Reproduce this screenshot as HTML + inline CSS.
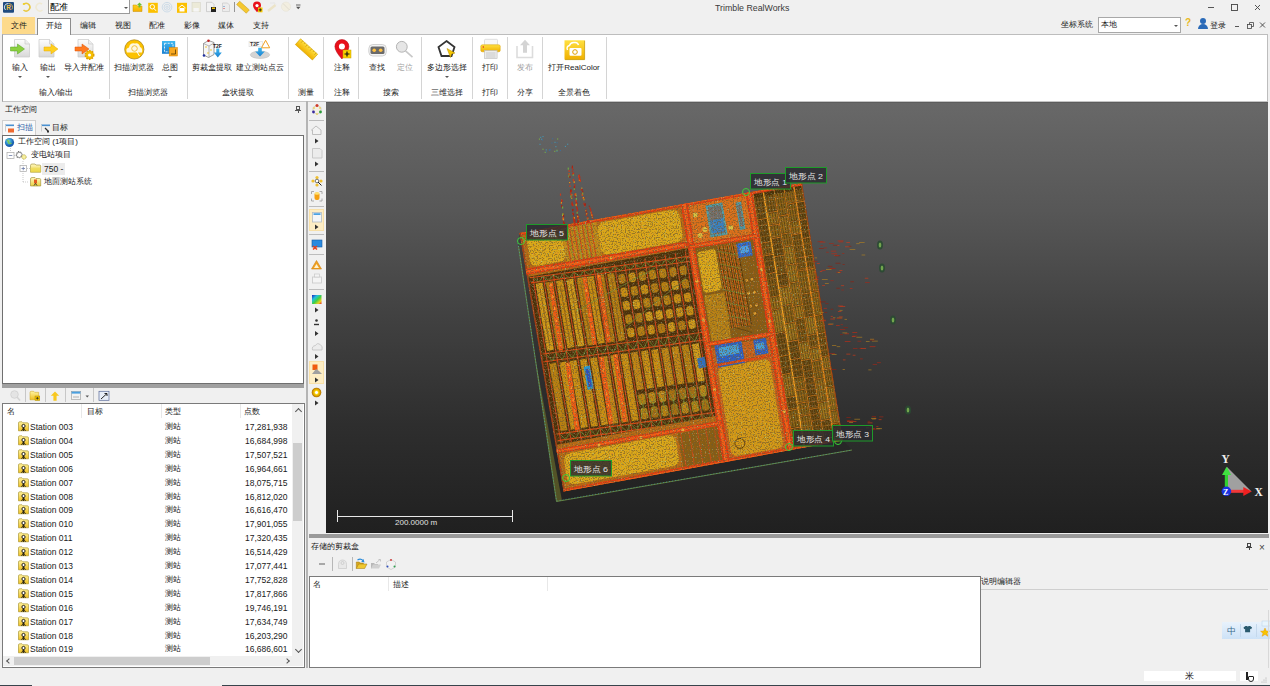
<!DOCTYPE html>
<html><head><meta charset="utf-8">
<style>
*{margin:0;padding:0;box-sizing:border-box}
html,body{width:1270px;height:686px;overflow:hidden;background:#f0f0f0;font-family:"Liberation Sans",sans-serif;font-size:8px;color:#1a1a1a;position:relative}
.a{position:absolute}
.t{position:absolute;white-space:nowrap;line-height:10px}
.c{transform:translateX(-50%)}
.sep{position:absolute;width:1px;background:#d4d4d4}
.vsep{position:absolute;left:310px;width:13px;height:1px;background:#bdbdbd}
.arr{position:absolute;width:0;height:0;border-left:3px solid #444;border-top:2px solid transparent;border-bottom:2px solid transparent}
.dd{position:absolute;width:0;height:0;border-top:2px solid #555;border-left:2px solid transparent;border-right:2px solid transparent}
.row{position:absolute;left:0;height:14px;width:290px}
.row span{position:absolute;top:2px;white-space:nowrap;line-height:10px;font-size:8.5px}
.fold{position:absolute;left:18px;top:2px;width:10px;height:9px;background:#f2e27a;border:1px solid #9a8a2a;border-radius:1px}
.fold:after{content:"";position:absolute;left:3px;top:1px;width:3px;height:5px;border:1px solid #222;border-top-width:2px}
#vp{left:326px;top:102px;width:942px;height:431px;background:linear-gradient(#686868,#575757 25%,#414141 50%,#2e2e2e 75%,#202020);border-top:1px solid #5c5c5c;border-bottom:1px solid #1a1a1a}
.lbl{position:absolute;background:#2f2f35;border:1px solid #1f9a2a;color:#e8e8e8;font-size:8px;line-height:14px;height:16px;padding:0 3px;white-space:nowrap}
</style></head><body>
<!-- ===== title bar ===== -->
<div class="a" style="left:48px;top:0px;width:82px;height:14px;background:#fff;border:1px solid #9a9a9a;border-top:none"></div>
<div class="t" style="left:50px;top:2px;font-size:8.5px;color:#000">配准</div>
<div class="dd" style="left:124px;top:7px"></div>
<svg class="a" style="left:0;top:0" width="310" height="16" viewBox="0 0 310 16">
<defs><linearGradient id="qy" x1="0" y1="0" x2="0" y2="1"><stop offset="0" stop-color="#ffd020"/><stop offset="1" stop-color="#f5b000"/></linearGradient></defs>
<rect x="3" y="2" width="11" height="10.7" rx="1" fill="#1e4a80"/>
<path d="M5.5,10 a3.8,3.8 0 0 1 3,-6.5" fill="none" stroke="#fff" stroke-width="0.8"/><path d="M9,3.5 a3.8,3.8 0 0 1 2.8,6" fill="none" stroke="#f0c040" stroke-width="0.8"/>
<text x="6.3" y="10.3" font-size="6.5" font-weight="bold" fill="#f0c040" font-family="Liberation Sans">R</text>
<path d="M24,4 a3.8,3.8 0 1 1 -0.5,6" fill="none" stroke="#e8c840" stroke-width="1.6"/><circle cx="23.8" cy="4" r="1.1" fill="#f0d020"/>
<path d="M42,4 a3.8,3.8 0 1 0 0.5,6" fill="none" stroke="#efe9d2" stroke-width="1.6"/>
<path d="M133,5 h3.5 l1,1 h4.5 v5.5 h-9 z" fill="url(#qy)" stroke="#c89000" stroke-width="0.5"/>
<path d="M139.5,2.5 l2.5,2.5 h-1.5 v2.5 h-2 v-2.5 h-1.5 z" fill="#6cc030"/>
<rect x="148.2" y="2.8" width="9.6" height="10" fill="#fcc000"/><circle cx="152.3" cy="6.8" r="2.2" fill="none" stroke="#fff" stroke-width="1"/><line x1="154" y1="8.5" x2="156" y2="10.8" stroke="#fff" stroke-width="1"/>
<circle cx="167" cy="7.2" r="4.8" fill="none" stroke="#c4d6e4" stroke-width="0.8"/><circle cx="167" cy="7.2" r="3" fill="none" stroke="#c4d6e4" stroke-width="0.8"/><circle cx="167" cy="7.2" r="1.2" fill="none" stroke="#c4d6e4" stroke-width="0.8"/>
<rect x="177" y="2.8" width="10" height="10" fill="#fcc000"/><path d="M178.5,8 l3.5,-3 l3.5,3" fill="none" stroke="#fff" stroke-width="1"/><rect x="179.5" y="8" width="5" height="3.5" fill="#fff"/>
<rect x="192" y="2.3" width="8.3" height="9.4" fill="#ecead8" stroke="#d8d6c8" stroke-width="0.6"/><rect x="193.5" y="8" width="5.3" height="3.6" fill="#f6f6f6"/>
<path d="M206.5,2.3 h5.5 l2,2 v7.3 h-7.5 z" fill="#f2f2f2" stroke="#b8b8b8" stroke-width="0.6"/><rect x="211" y="7" width="5" height="5" fill="#222"/><rect x="212" y="7.5" width="3" height="1.5" fill="#f0c000"/>
<path d="M222.5,3 h5 l2,2 v6.5 h-7 z" fill="#ececec" stroke="#c4c4c4" stroke-width="0.6"/><rect x="223.5" y="6" width="1" height="1" fill="#4a80c0"/><rect x="223.5" y="8" width="1" height="1" fill="#d04040"/>
<line x1="234.5" y1="2" x2="234.5" y2="12" stroke="#8a8a8a" stroke-width="0.9"/>
<g transform="rotate(42 243 7.2)"><rect x="236.5" y="5" width="13" height="4.5" fill="#f5c830" stroke="#c89a10" stroke-width="0.5"/></g>
<path d="M257,12.3 q-4,-4.5 -4,-6.8 a4,4 0 0 1 8,0 q0,2.3 -4,6.8 z" fill="#e8101a"/><circle cx="257" cy="5.6" r="1.6" fill="#fff"/><rect x="258" y="7.5" width="4.5" height="4.8" fill="#f5c800"/><path d="M260.2,8.3 v3.2 M258.6,9.9 h3.2" stroke="#111" stroke-width="0.8"/>
<path d="M268,11 l7.5,-6" stroke="#ece4c8" stroke-width="2.4"/><path d="M270,3 h5 M274,2.5 l2,2" stroke="#e0e0e0" stroke-width="0.6"/>
<circle cx="286" cy="6.7" r="4.6" fill="#f2eee0" stroke="#e6e2d6" stroke-width="0.6"/><line x1="283" y1="3.5" x2="289.5" y2="10" stroke="#d8d4c8" stroke-width="0.7"/>
<path d="M296,5 h4.5" stroke="#555" stroke-width="0.9"/><polygon points="296,6.8 300.5,6.8 298.25,9.3" fill="#555"/>
</svg>
<div class="t" style="left:715px;top:2.5px;font-size:8.8px;color:#3a3a3a">Trimble RealWorks</div>
<svg class="a" style="left:1200px;top:0" width="70" height="34" viewBox="1200 0 70 34">
<path d="M1208,7.5 h6" stroke="#444" stroke-width="0.9"/>
<rect x="1231.5" y="4.5" width="6" height="6" fill="none" stroke="#444" stroke-width="0.9"/>
<path d="M1255,5 l5,5 M1260,5 l-5,5" stroke="#444" stroke-width="0.9"/>
<path d="M1235,26.5 h4" stroke="#444" stroke-width="0.9"/>
<rect x="1247.5" y="24.5" width="4" height="4" fill="#f0f0f0" stroke="#444" stroke-width="0.8"/><path d="M1249.5,24.5 v-2 h4 v4 h-2" fill="none" stroke="#444" stroke-width="0.8"/>
<path d="M1260,22.5 l5,5 M1265,22.5 l-5,5" stroke="#444" stroke-width="0.9"/>
</svg>
<!-- ===== tabs ===== -->
<div class="a" style="left:2px;top:17px;width:33px;height:17px;background:#fdda8b"></div>
<div class="t c" style="left:19px;top:21px">文件</div>
<div class="t c" style="left:88px;top:21px">编辑</div>
<div class="t c" style="left:123px;top:21px">视图</div>
<div class="t c" style="left:157px;top:21px">配准</div>
<div class="t c" style="left:192px;top:21px">影像</div>
<div class="t c" style="left:226px;top:21px">媒体</div>
<div class="t c" style="left:261px;top:21px">支持</div>
<div class="t" style="left:1061px;top:20px">坐标系统</div>
<div class="a" style="left:1098px;top:17px;width:83px;height:16px;background:#fff;border:1px solid #a8a8a8"></div>
<div class="t" style="left:1101px;top:20px">本地</div>
<div class="dd" style="left:1174px;top:25px"></div>
<div class="t" style="left:1185px;top:18px;font-size:10px;font-weight:bold;color:#e8b820">?</div>
<div class="a" style="left:1200px;top:18px;width:6px;height:6px;background:#2a6ab8;border-radius:50%"></div>
<div class="a" style="left:1198px;top:24px;width:10px;height:5px;background:#2a6ab8;border-radius:5px 5px 0 0"></div>
<div class="t" style="left:1210px;top:21px">登录</div>

<!-- ===== ribbon body ===== -->
<div class="a" style="left:2px;top:34px;width:1266px;height:68px;background:#fff;border:1px solid #bdbdbd;border-left-color:#a0a0a0;border-bottom-color:#c4c4c4"></div>
<div class="a" style="left:37px;top:18px;width:34px;height:17px;background:#fff;border:1px solid #8c8c8c;border-bottom:none"></div>
<div class="t c" style="left:54px;top:21px">开始</div>
<div class="sep" style="left:109px;top:37px;height:62px"></div>
<div class="sep" style="left:187px;top:37px;height:62px"></div>
<div class="sep" style="left:288px;top:37px;height:62px"></div>
<div class="sep" style="left:323px;top:37px;height:62px"></div>
<div class="sep" style="left:358px;top:37px;height:62px"></div>
<div class="sep" style="left:421px;top:37px;height:62px"></div>
<div class="sep" style="left:472px;top:37px;height:62px"></div>
<div class="sep" style="left:507px;top:37px;height:62px"></div>
<div class="sep" style="left:542px;top:37px;height:62px"></div>
<div class="sep" style="left:606px;top:37px;height:62px"></div>
<!-- button labels -->
<div class="t c" style="left:20px;top:63px">输入</div>
<div class="t c" style="left:48px;top:63px">输出</div>
<div class="t c" style="left:84px;top:63px">导入并配准</div>
<div class="t c" style="left:134px;top:63px">扫描浏览器</div>
<div class="t c" style="left:170px;top:63px">总图</div>
<div class="t c" style="left:212px;top:63px">剪裁盒提取</div>
<div class="t c" style="left:260px;top:63px">建立测站点云</div>
<div class="t c" style="left:342px;top:63px">注释</div>
<div class="t c" style="left:377px;top:63px">查找</div>
<div class="t c" style="left:405px;top:63px;color:#a0a0a0">定位</div>
<div class="t c" style="left:447px;top:63px">多边形选择</div>
<div class="t c" style="left:490px;top:63px">打印</div>
<div class="t c" style="left:525px;top:63px;color:#a0a0a0">发布</div>
<div class="t c" style="left:574px;top:63px">打开RealColor</div>
<div class="dd" style="left:18px;top:76px"></div>
<div class="dd" style="left:46px;top:76px"></div>
<div class="dd" style="left:168px;top:76px"></div>
<div class="dd" style="left:445px;top:76px"></div>
<!-- group labels -->
<div class="t c" style="left:56px;top:88px">输入/输出</div>
<div class="t c" style="left:148px;top:88px">扫描浏览器</div>
<div class="t c" style="left:238px;top:88px">盒状提取</div>
<div class="t c" style="left:306px;top:88px">测量</div>
<div class="t c" style="left:342px;top:88px">注释</div>
<div class="t c" style="left:391px;top:88px">搜索</div>
<div class="t c" style="left:447px;top:88px">三维选择</div>
<div class="t c" style="left:490px;top:88px">打印</div>
<div class="t c" style="left:525px;top:88px">分享</div>
<div class="t c" style="left:574px;top:88px">全景着色</div>
<svg class="a" style="left:0;top:34px" width="610" height="28" viewBox="0 34 610 28">
<defs><linearGradient id="pg" x1="0" y1="0" x2="0" y2="1"><stop offset="0" stop-color="#fdfdfd"/><stop offset="1" stop-color="#d8d8d8"/></linearGradient><linearGradient id="yl" x1="0" y1="0" x2="0" y2="1"><stop offset="0" stop-color="#ffe040"/><stop offset="1" stop-color="#f0b000"/></linearGradient><linearGradient id="bl" x1="0" y1="0" x2="0" y2="1"><stop offset="0" stop-color="#40b8f0"/><stop offset="1" stop-color="#1a80d0"/></linearGradient></defs>
<path d="M14.5,39.5 h10.5 l4.5,4.5 v13 h-15 z" fill="url(#pg)" stroke="#c8c8c8" stroke-width="0.7"/>
<path d="M25.0,39.5 v4.5 h4.5" fill="#eee" stroke="#c8c8c8" stroke-width="0.7"/>
<path d="M10.5,47 h7 v-3 l7,5 l-7,5 v-3 h-7 z" fill="#8cd040" stroke="#50a020" stroke-width="0.5"/>
<path d="M39,39.5 h10.5 l4.5,4.5 v13 h-15 z" fill="url(#pg)" stroke="#c8c8c8" stroke-width="0.7"/>
<path d="M49.5,39.5 v4.5 h4.5" fill="#eee" stroke="#c8c8c8" stroke-width="0.7"/>
<path d="M44,47 h7 v-3 l7,5 l-7,5 v-3 h-7 z" fill="#ffd020" stroke="#e8a800" stroke-width="0.5"/>
<path d="M78,39.5 h10.5 l4.5,4.5 v13 h-15 z" fill="url(#pg)" stroke="#c8c8c8" stroke-width="0.7"/>
<path d="M88.5,39.5 v4.5 h4.5" fill="#eee" stroke="#c8c8c8" stroke-width="0.7"/>
<path d="M75,47 h7 v-3 l7,5 l-7,5 v-3 h-7 z" fill="#ff7a20" stroke="#e05000" stroke-width="0.5"/>
<circle cx="89.5" cy="55" r="4.2" fill="#f5c000" stroke="#e0a000" stroke-width="1.6" stroke-dasharray="1.6 1.1"/><circle cx="89.5" cy="55" r="1.5" fill="#fff"/>
<circle cx="134.3" cy="49.4" r="9.6" fill="#fcc200" stroke="#b08a20" stroke-width="0.8"/>
<path d="M127,52.5 q-2,-4 2,-5 q1,-5 6,-4 q4,-1 5,3.5 q3,1 2,5.5 z" fill="#fff8e0"/>
<circle cx="134.5" cy="48.5" r="2.8" fill="none" stroke="#f0c040" stroke-width="1"/><line x1="136.5" y1="51" x2="139.5" y2="56" stroke="#fff" stroke-width="1"/>
<rect x="162" y="41" width="13.2" height="12.8" fill="url(#bl)"/><rect x="164.5" y="43.3" width="8.5" height="8.5" fill="none" stroke="#fff" stroke-width="0.8" stroke-dasharray="2 1.2"/>
<rect x="169.2" y="47.5" width="8.2" height="8.5" fill="#f8a820" stroke="#d88000" stroke-width="0.5"/><path d="M171,54 h4.5 v-4.5" fill="none" stroke="#5a3a00" stroke-width="0.8"/>
<path d="M203.5,43.5 l5,-3 l5.5,2 v12 l-5.5,3 l-5,-2.5 z" fill="#f6f6f6" stroke="#777" stroke-width="0.7"/><path d="M203.5,43.5 l5.5,2.5 l5,-3 M209,46 v11.5" fill="none" stroke="#888" stroke-width="0.6"/>
<circle cx="208.5" cy="40.8" r="1.3" fill="#c02020"/><circle cx="204" cy="55.5" r="1.3" fill="#2030a0"/><circle cx="206" cy="47" r="0.8" fill="#f0c020"/><circle cx="211" cy="50" r="0.8" fill="#f0c020"/><circle cx="208" cy="53" r="0.8" fill="#f0c020"/>
<text x="213" y="47.8" font-size="5" font-weight="bold" fill="#222" font-family="Liberation Sans">T2F</text>
<path d="M216.3,48.5 h3 v4 h2.5 l-4,5 l-4,-5 h2.5 z" fill="url(#bl)"/>
<ellipse cx="260" cy="54.8" rx="9.7" ry="3.7" fill="#d4d4d4" stroke="#bbb" stroke-width="0.5"/>
<rect x="249" y="41.2" width="13.5" height="5.6" fill="#fafafa" stroke="#ccc" stroke-width="0.4"/><text x="250" y="46.3" font-size="5.2" font-weight="bold" fill="#333" font-family="Liberation Sans">T2F</text>
<polygon points="265.6,40.3 269.7,47.8 261.5,47.8" fill="#fff" stroke="#f0a020" stroke-width="1"/>
<path d="M258.2,47.8 h3.6 v3.8 h3 l-4.8,5 l-4.8,-5 h3 z" fill="url(#bl)"/>
<g transform="rotate(42 306.5 49.4)"><rect x="295" y="45.5" width="23" height="7.8" fill="url(#yl)" stroke="#d0a000" stroke-width="0.6"/><path d="M298,45.5 v2.5 M301,45.5 v1.5 M304,45.5 v2.5 M307,45.5 v1.5 M310,45.5 v2.5 M313,45.5 v1.5 M316,45.5 v2.5" stroke="#b08000" stroke-width="0.5"/></g>
<path d="M341.9,59 q-7,-8 -7,-12.5 a7,7 0 0 1 14,0 q0,4.5 -7,12.5 z" fill="#e8101a" stroke="#b00010" stroke-width="0.5"/><circle cx="341.9" cy="46.4" r="3" fill="#fff"/>
<rect x="343" y="50" width="8" height="8" fill="#f8d000" stroke="#c8a000" stroke-width="0.5"/><path d="M347,51.5 v5 M344.5,54 h5" stroke="#111" stroke-width="1.2"/>
<rect x="368.8" y="44.5" width="17.5" height="11.5" rx="4" fill="#f4f4f4" stroke="#c8c8c8" stroke-width="0.8"/><rect x="370.5" y="46.5" width="14" height="7.5" rx="1.5" fill="#6a6a6a"/>
<circle cx="374.2" cy="50.2" r="1.8" fill="#ffc040"/><circle cx="380.7" cy="50.2" r="1.8" fill="#ffc040"/>
<line x1="405.5" y1="50.8" x2="412.5" y2="57.2" stroke="#c8c8c8" stroke-width="1.6"/><circle cx="401.8" cy="46.8" r="5.4" fill="#e6e6e6" stroke="#b4b4b4" stroke-width="1"/>
<polygon points="446.5,41 454.5,47 451.5,56 441.5,56 438.5,47" fill="none" stroke="#333" stroke-width="1.8"/>
<polygon points="447,48.5 455,53 451.5,54 450.5,57.5" fill="#f8c800" stroke="#b08a00" stroke-width="0.5"/>
<rect x="484.5" y="39.3" width="13" height="6" rx="1" fill="#f8f8f8" stroke="#ccc" stroke-width="0.6"/>
<rect x="480.8" y="44.8" width="19.4" height="7" rx="1.5" fill="url(#yl)" stroke="#d8a000" stroke-width="0.5"/><circle cx="483.3" cy="47" r="0.7" fill="#e02020"/>
<rect x="484.5" y="50.5" width="12.6" height="8" fill="#ececec" stroke="#bbb" stroke-width="0.6"/><path d="M486,53 h9.5 M486,55 h9.5 M486,57 h9.5" stroke="#aaa" stroke-width="0.5"/>
<path d="M517,46 v11.5 h15.5 v-11.5" fill="none" stroke="#dcdcdc" stroke-width="1.6"/><path d="M525,39.8 l5,5.5 h-3 v7.5 h-4 v-7.5 h-3 z" fill="#d4d4d4"/>
<rect x="564.5" y="40.3" width="20" height="19.3" fill="url(#yl)"/><path d="M565,59.6 h19.6 v-19" fill="none" stroke="#c89a00" stroke-width="0.8"/>
<path d="M567.5,50 q-1.5,-3.5 2,-4.5 q1,-3.5 5,-3 q3,-0.5 4,2.5" fill="none" stroke="#fff" stroke-width="1.4"/><rect x="569.5" y="48" width="12" height="7.8" rx="1" fill="#fff"/><circle cx="575" cy="52" r="2.3" fill="none" stroke="#e0a000" stroke-width="1"/>
</svg>

<!-- ===== left workspace panel ===== -->
<div class="t" style="left:5px;top:105px">工作空间</div>
<div class="a" style="left:296px;top:106px;width:4px;height:4px;border:1px solid #555"></div><div class="a" style="left:295px;top:110px;width:6px;height:1px;background:#555"></div><div class="a" style="left:297.5px;top:110px;width:1px;height:3px;background:#555"></div>
<div class="a" style="left:2px;top:120px;width:34px;height:16px;background:#f9f9f9;border:1px solid #cfcfcf;border-bottom:none"></div>
<div class="t" style="left:17px;top:123px;color:#2a5ea8">扫描</div>
<div class="t" style="left:52px;top:123px">目标</div>
<div class="a" style="left:2px;top:135px;width:302px;height:249px;background:#fff;border:1px solid #6f6f6f"></div>
<div class="a" style="left:42px;top:163px;width:23px;height:12px;background:#ececec"></div>
<div class="t" style="left:18px;top:137px;font-size:8px">工作空间 (1项目)</div>
<div class="t" style="left:31px;top:150px;font-size:8px">变电站项目</div>
<div class="t" style="left:44px;top:164px;font-size:8.5px">750 -</div>
<div class="t" style="left:44px;top:177px;font-size:8px">地面测站系统</div>
<svg class="a" style="left:0;top:118px" width="100" height="72" viewBox="0 118 100 72">
<defs><radialGradient id="gl" cx="0.4" cy="0.35"><stop offset="0" stop-color="#a0e080"/><stop offset="0.5" stop-color="#3aa0d8"/><stop offset="1" stop-color="#1a60b0"/></radialGradient>
<linearGradient id="fd" x1="0" y1="0" x2="0" y2="1"><stop offset="0" stop-color="#fff8c0"/><stop offset="1" stop-color="#e8d040"/></linearGradient></defs>
<rect x="5" y="124.5" width="9" height="1.6" fill="#4a90d0"/><rect x="5" y="124.5" width="1" height="7" fill="#ccc"/><rect x="8" y="128.5" width="6" height="4" fill="#f06a30"/>
<rect x="41" y="124.5" width="9" height="1.6" fill="#4a90d0"/><rect x="41" y="124.5" width="1" height="7" fill="#ccc"/><path d="M45,128 l3,3" stroke="#333" stroke-width="1.2"/><rect x="47" y="130.5" width="2" height="2" fill="#333"/>
<circle cx="9.5" cy="142.5" r="4.6" fill="url(#gl)"/><path d="M7,140 q2,1 1.5,3 q1.5,1 3,0" fill="none" stroke="#7cc850" stroke-width="1.2"/>
<path d="M10.5,148 v4 M10.5,158 v2 M14,155.5 h2 M23,161 v21 M27,168.5 h3 M23,182 h5" stroke="#a8a8a8" stroke-width="0.6" stroke-dasharray="1 1"/>
<rect x="7" y="152.5" width="7" height="6" fill="#fff" stroke="#a8a8a8" stroke-width="0.7"/><path d="M8.8,155.5 h3.5" stroke="#6a7aa8" stroke-width="0.8"/>
<path d="M18.5,151 l1,1.5 l1.5,-0.5 l0,1.5 l1.5,0.8 l-1.2,1 l0.5,1.5 l-1.5,0 l-0.8,1.4 l-1,-1.2 l-1.5,0.5 l0.2,-1.5 l-1.4,-0.8 l1.3,-0.9 l-0.4,-1.5 l1.5,0.2 z" fill="#fff" stroke="#444" stroke-width="0.6"/>
<circle cx="24" cy="157" r="2.2" fill="#f8f0a0" stroke="#a89a30" stroke-width="0.8" stroke-dasharray="1 0.6"/>
<rect x="20" y="165.5" width="6.5" height="6" fill="#fff" stroke="#a8a8a8" stroke-width="0.7"/><path d="M21.5,168.5 h3.5 M23.25,166.8 v3.5" stroke="#6a7aa8" stroke-width="0.8"/>
<path d="M30.5,165.5 q0,-1.5 1.5,-1.5 h3 l1,1 h3.5 q1.2,0 1.2,1.2 v6 h-10.2 z" fill="url(#fd)" stroke="#9a8a30" stroke-width="0.6"/><path d="M30.5,172.2 h10.2 v-4.5 h-10.2 z" fill="#eedc50" opacity="0.6"/>
<path d="M30.5,179 q0,-1.5 1.5,-1.5 h3 l1,1 h3.5 q1.2,0 1.2,1.2 v6.3 h-10.2 z" fill="url(#fd)" stroke="#9a8a30" stroke-width="0.6"/><rect x="34" y="179.5" width="3" height="4" fill="#e05a20"/><path d="M34,185.5 l1.5,-2 l1.5,2" stroke="#222" stroke-width="0.8" fill="none"/>
</svg>
<!-- splitter -->
<div class="a" style="left:2px;top:384px;width:302px;height:4px;background:#a0a0a0"></div>
<!-- toolbar -->
<svg class="a" style="left:0;top:386px" width="120" height="18" viewBox="0 386 120 18">
<defs><linearGradient id="fd2" x1="0" y1="0" x2="0" y2="1"><stop offset="0" stop-color="#fff4a0"/><stop offset="1" stop-color="#f0c020"/></linearGradient></defs>
<line x1="17" y1="397" x2="20" y2="400.5" stroke="#d4d4d4" stroke-width="1.6"/><circle cx="14.5" cy="394.5" r="3.8" fill="#e4e4e4" stroke="#cfcfcf" stroke-width="0.8"/>
<line x1="25.5" y1="388" x2="25.5" y2="402" stroke="#bdbdbd" stroke-width="0.8"/>
<path d="M30,392.5 q0,-1.2 1.2,-1.2 h2.5 l1,1 h4 v7.5 h-8.7 z" fill="url(#fd2)" stroke="#c8a020" stroke-width="0.5"/><rect x="35" y="396" width="4.8" height="4.5" fill="#f0c000" stroke="#a08000" stroke-width="0.4"/><path d="M37.4,397 v2.6 M36.1,398.3 h2.6" stroke="#222" stroke-width="0.7"/>
<line x1="45.5" y1="388" x2="45.5" y2="402" stroke="#bdbdbd" stroke-width="0.8"/>
<path d="M55,391.5 l4.2,4.2 h-2.6 v5 h-3.2 v-5 h-2.6 z" fill="#f8c820"/>
<line x1="65.5" y1="388" x2="65.5" y2="402" stroke="#bdbdbd" stroke-width="0.8"/>
<rect x="71.3" y="391.3" width="9.4" height="8.4" fill="#f2f2f2" stroke="#9a9a9a" stroke-width="0.6"/><rect x="71.6" y="391.6" width="8.8" height="2" fill="#4aa0e0"/><path d="M73,397 h6" stroke="#888" stroke-width="0.6"/>
<polygon points="85.5,395.5 89,395.5 87.25,397.5" fill="#555"/>
<line x1="93.5" y1="388" x2="93.5" y2="402" stroke="#bdbdbd" stroke-width="0.8"/>
<rect x="99" y="391.3" width="10" height="9" fill="#e8eef8" stroke="#5a6a9a" stroke-width="0.7"/><path d="M101,399 l6,-5.5 M104.5,393.5 h2.5 v2.5" fill="none" stroke="#111" stroke-width="0.9"/>
</svg>
<div class="a" style="left:2px;top:403px;width:303px;height:265px;background:#fff;border:1px solid #7a7a7a"></div>
<div class="t" style="left:7px;top:407px">名</div>
<div class="a" style="left:81px;top:404px;width:1px;height:14px;background:#e8e8e8"></div>
<div class="t" style="left:87px;top:407px">目标</div>
<div class="a" style="left:161px;top:404px;width:1px;height:14px;background:#e8e8e8"></div>
<div class="t" style="left:165px;top:407px">类型</div>
<div class="a" style="left:240px;top:404px;width:1px;height:14px;background:#e8e8e8"></div>
<div class="t" style="left:244px;top:407px">点数</div>
<div class="row" style="top:420.0px"><svg style="position:absolute;left:18px;top:1px" width="11" height="11" viewBox="0 0 11 11"><path d="M0.5,2 q0,-1.2 1.2,-1.2 h2.3 l1,1 h4.3 q1.2,0 1.2,1.2 v6.8 h-10 z" fill="url(#fd2)" stroke="#a08a20" stroke-width="0.6"/><circle cx="5.5" cy="5" r="1.6" fill="#fff" stroke="#111" stroke-width="0.9"/><path d="M3.5,10 l2,-3.3 l2,3.3 M5.5,6.7 v3.3" stroke="#111" stroke-width="0.8" fill="none"/></svg><span style="left:30px">Station 003</span><span style="left:165px;font-size:8px">测站</span><span style="left:245px">17,281,938</span></div>
<div class="row" style="top:433.9px"><svg style="position:absolute;left:18px;top:1px" width="11" height="11" viewBox="0 0 11 11"><path d="M0.5,2 q0,-1.2 1.2,-1.2 h2.3 l1,1 h4.3 q1.2,0 1.2,1.2 v6.8 h-10 z" fill="url(#fd2)" stroke="#a08a20" stroke-width="0.6"/><circle cx="5.5" cy="5" r="1.6" fill="#fff" stroke="#111" stroke-width="0.9"/><path d="M3.5,10 l2,-3.3 l2,3.3 M5.5,6.7 v3.3" stroke="#111" stroke-width="0.8" fill="none"/></svg><span style="left:30px">Station 004</span><span style="left:165px;font-size:8px">测站</span><span style="left:245px">16,684,998</span></div>
<div class="row" style="top:447.8px"><svg style="position:absolute;left:18px;top:1px" width="11" height="11" viewBox="0 0 11 11"><path d="M0.5,2 q0,-1.2 1.2,-1.2 h2.3 l1,1 h4.3 q1.2,0 1.2,1.2 v6.8 h-10 z" fill="url(#fd2)" stroke="#a08a20" stroke-width="0.6"/><circle cx="5.5" cy="5" r="1.6" fill="#fff" stroke="#111" stroke-width="0.9"/><path d="M3.5,10 l2,-3.3 l2,3.3 M5.5,6.7 v3.3" stroke="#111" stroke-width="0.8" fill="none"/></svg><span style="left:30px">Station 005</span><span style="left:165px;font-size:8px">测站</span><span style="left:245px">17,507,521</span></div>
<div class="row" style="top:461.7px"><svg style="position:absolute;left:18px;top:1px" width="11" height="11" viewBox="0 0 11 11"><path d="M0.5,2 q0,-1.2 1.2,-1.2 h2.3 l1,1 h4.3 q1.2,0 1.2,1.2 v6.8 h-10 z" fill="url(#fd2)" stroke="#a08a20" stroke-width="0.6"/><circle cx="5.5" cy="5" r="1.6" fill="#fff" stroke="#111" stroke-width="0.9"/><path d="M3.5,10 l2,-3.3 l2,3.3 M5.5,6.7 v3.3" stroke="#111" stroke-width="0.8" fill="none"/></svg><span style="left:30px">Station 006</span><span style="left:165px;font-size:8px">测站</span><span style="left:245px">16,964,661</span></div>
<div class="row" style="top:475.6px"><svg style="position:absolute;left:18px;top:1px" width="11" height="11" viewBox="0 0 11 11"><path d="M0.5,2 q0,-1.2 1.2,-1.2 h2.3 l1,1 h4.3 q1.2,0 1.2,1.2 v6.8 h-10 z" fill="url(#fd2)" stroke="#a08a20" stroke-width="0.6"/><circle cx="5.5" cy="5" r="1.6" fill="#fff" stroke="#111" stroke-width="0.9"/><path d="M3.5,10 l2,-3.3 l2,3.3 M5.5,6.7 v3.3" stroke="#111" stroke-width="0.8" fill="none"/></svg><span style="left:30px">Station 007</span><span style="left:165px;font-size:8px">测站</span><span style="left:245px">18,075,715</span></div>
<div class="row" style="top:489.5px"><svg style="position:absolute;left:18px;top:1px" width="11" height="11" viewBox="0 0 11 11"><path d="M0.5,2 q0,-1.2 1.2,-1.2 h2.3 l1,1 h4.3 q1.2,0 1.2,1.2 v6.8 h-10 z" fill="url(#fd2)" stroke="#a08a20" stroke-width="0.6"/><circle cx="5.5" cy="5" r="1.6" fill="#fff" stroke="#111" stroke-width="0.9"/><path d="M3.5,10 l2,-3.3 l2,3.3 M5.5,6.7 v3.3" stroke="#111" stroke-width="0.8" fill="none"/></svg><span style="left:30px">Station 008</span><span style="left:165px;font-size:8px">测站</span><span style="left:245px">16,812,020</span></div>
<div class="row" style="top:503.4px"><svg style="position:absolute;left:18px;top:1px" width="11" height="11" viewBox="0 0 11 11"><path d="M0.5,2 q0,-1.2 1.2,-1.2 h2.3 l1,1 h4.3 q1.2,0 1.2,1.2 v6.8 h-10 z" fill="url(#fd2)" stroke="#a08a20" stroke-width="0.6"/><circle cx="5.5" cy="5" r="1.6" fill="#fff" stroke="#111" stroke-width="0.9"/><path d="M3.5,10 l2,-3.3 l2,3.3 M5.5,6.7 v3.3" stroke="#111" stroke-width="0.8" fill="none"/></svg><span style="left:30px">Station 009</span><span style="left:165px;font-size:8px">测站</span><span style="left:245px">16,616,470</span></div>
<div class="row" style="top:517.3px"><svg style="position:absolute;left:18px;top:1px" width="11" height="11" viewBox="0 0 11 11"><path d="M0.5,2 q0,-1.2 1.2,-1.2 h2.3 l1,1 h4.3 q1.2,0 1.2,1.2 v6.8 h-10 z" fill="url(#fd2)" stroke="#a08a20" stroke-width="0.6"/><circle cx="5.5" cy="5" r="1.6" fill="#fff" stroke="#111" stroke-width="0.9"/><path d="M3.5,10 l2,-3.3 l2,3.3 M5.5,6.7 v3.3" stroke="#111" stroke-width="0.8" fill="none"/></svg><span style="left:30px">Station 010</span><span style="left:165px;font-size:8px">测站</span><span style="left:245px">17,901,055</span></div>
<div class="row" style="top:531.2px"><svg style="position:absolute;left:18px;top:1px" width="11" height="11" viewBox="0 0 11 11"><path d="M0.5,2 q0,-1.2 1.2,-1.2 h2.3 l1,1 h4.3 q1.2,0 1.2,1.2 v6.8 h-10 z" fill="url(#fd2)" stroke="#a08a20" stroke-width="0.6"/><circle cx="5.5" cy="5" r="1.6" fill="#fff" stroke="#111" stroke-width="0.9"/><path d="M3.5,10 l2,-3.3 l2,3.3 M5.5,6.7 v3.3" stroke="#111" stroke-width="0.8" fill="none"/></svg><span style="left:30px">Station 011</span><span style="left:165px;font-size:8px">测站</span><span style="left:245px">17,320,435</span></div>
<div class="row" style="top:545.1px"><svg style="position:absolute;left:18px;top:1px" width="11" height="11" viewBox="0 0 11 11"><path d="M0.5,2 q0,-1.2 1.2,-1.2 h2.3 l1,1 h4.3 q1.2,0 1.2,1.2 v6.8 h-10 z" fill="url(#fd2)" stroke="#a08a20" stroke-width="0.6"/><circle cx="5.5" cy="5" r="1.6" fill="#fff" stroke="#111" stroke-width="0.9"/><path d="M3.5,10 l2,-3.3 l2,3.3 M5.5,6.7 v3.3" stroke="#111" stroke-width="0.8" fill="none"/></svg><span style="left:30px">Station 012</span><span style="left:165px;font-size:8px">测站</span><span style="left:245px">16,514,429</span></div>
<div class="row" style="top:559.0px"><svg style="position:absolute;left:18px;top:1px" width="11" height="11" viewBox="0 0 11 11"><path d="M0.5,2 q0,-1.2 1.2,-1.2 h2.3 l1,1 h4.3 q1.2,0 1.2,1.2 v6.8 h-10 z" fill="url(#fd2)" stroke="#a08a20" stroke-width="0.6"/><circle cx="5.5" cy="5" r="1.6" fill="#fff" stroke="#111" stroke-width="0.9"/><path d="M3.5,10 l2,-3.3 l2,3.3 M5.5,6.7 v3.3" stroke="#111" stroke-width="0.8" fill="none"/></svg><span style="left:30px">Station 013</span><span style="left:165px;font-size:8px">测站</span><span style="left:245px">17,077,441</span></div>
<div class="row" style="top:572.9px"><svg style="position:absolute;left:18px;top:1px" width="11" height="11" viewBox="0 0 11 11"><path d="M0.5,2 q0,-1.2 1.2,-1.2 h2.3 l1,1 h4.3 q1.2,0 1.2,1.2 v6.8 h-10 z" fill="url(#fd2)" stroke="#a08a20" stroke-width="0.6"/><circle cx="5.5" cy="5" r="1.6" fill="#fff" stroke="#111" stroke-width="0.9"/><path d="M3.5,10 l2,-3.3 l2,3.3 M5.5,6.7 v3.3" stroke="#111" stroke-width="0.8" fill="none"/></svg><span style="left:30px">Station 014</span><span style="left:165px;font-size:8px">测站</span><span style="left:245px">17,752,828</span></div>
<div class="row" style="top:586.8px"><svg style="position:absolute;left:18px;top:1px" width="11" height="11" viewBox="0 0 11 11"><path d="M0.5,2 q0,-1.2 1.2,-1.2 h2.3 l1,1 h4.3 q1.2,0 1.2,1.2 v6.8 h-10 z" fill="url(#fd2)" stroke="#a08a20" stroke-width="0.6"/><circle cx="5.5" cy="5" r="1.6" fill="#fff" stroke="#111" stroke-width="0.9"/><path d="M3.5,10 l2,-3.3 l2,3.3 M5.5,6.7 v3.3" stroke="#111" stroke-width="0.8" fill="none"/></svg><span style="left:30px">Station 015</span><span style="left:165px;font-size:8px">测站</span><span style="left:245px">17,817,866</span></div>
<div class="row" style="top:600.7px"><svg style="position:absolute;left:18px;top:1px" width="11" height="11" viewBox="0 0 11 11"><path d="M0.5,2 q0,-1.2 1.2,-1.2 h2.3 l1,1 h4.3 q1.2,0 1.2,1.2 v6.8 h-10 z" fill="url(#fd2)" stroke="#a08a20" stroke-width="0.6"/><circle cx="5.5" cy="5" r="1.6" fill="#fff" stroke="#111" stroke-width="0.9"/><path d="M3.5,10 l2,-3.3 l2,3.3 M5.5,6.7 v3.3" stroke="#111" stroke-width="0.8" fill="none"/></svg><span style="left:30px">Station 016</span><span style="left:165px;font-size:8px">测站</span><span style="left:245px">19,746,191</span></div>
<div class="row" style="top:614.6px"><svg style="position:absolute;left:18px;top:1px" width="11" height="11" viewBox="0 0 11 11"><path d="M0.5,2 q0,-1.2 1.2,-1.2 h2.3 l1,1 h4.3 q1.2,0 1.2,1.2 v6.8 h-10 z" fill="url(#fd2)" stroke="#a08a20" stroke-width="0.6"/><circle cx="5.5" cy="5" r="1.6" fill="#fff" stroke="#111" stroke-width="0.9"/><path d="M3.5,10 l2,-3.3 l2,3.3 M5.5,6.7 v3.3" stroke="#111" stroke-width="0.8" fill="none"/></svg><span style="left:30px">Station 017</span><span style="left:165px;font-size:8px">测站</span><span style="left:245px">17,634,749</span></div>
<div class="row" style="top:628.5px"><svg style="position:absolute;left:18px;top:1px" width="11" height="11" viewBox="0 0 11 11"><path d="M0.5,2 q0,-1.2 1.2,-1.2 h2.3 l1,1 h4.3 q1.2,0 1.2,1.2 v6.8 h-10 z" fill="url(#fd2)" stroke="#a08a20" stroke-width="0.6"/><circle cx="5.5" cy="5" r="1.6" fill="#fff" stroke="#111" stroke-width="0.9"/><path d="M3.5,10 l2,-3.3 l2,3.3 M5.5,6.7 v3.3" stroke="#111" stroke-width="0.8" fill="none"/></svg><span style="left:30px">Station 018</span><span style="left:165px;font-size:8px">测站</span><span style="left:245px">16,203,290</span></div>
<div class="row" style="top:642.4px"><svg style="position:absolute;left:18px;top:1px" width="11" height="11" viewBox="0 0 11 11"><path d="M0.5,2 q0,-1.2 1.2,-1.2 h2.3 l1,1 h4.3 q1.2,0 1.2,1.2 v6.8 h-10 z" fill="url(#fd2)" stroke="#a08a20" stroke-width="0.6"/><circle cx="5.5" cy="5" r="1.6" fill="#fff" stroke="#111" stroke-width="0.9"/><path d="M3.5,10 l2,-3.3 l2,3.3 M5.5,6.7 v3.3" stroke="#111" stroke-width="0.8" fill="none"/></svg><span style="left:30px">Station 019</span><span style="left:165px;font-size:8px">测站</span><span style="left:245px">16,686,601</span></div>
<!-- v scrollbar -->
<div class="a" style="left:292px;top:404px;width:11px;height:252px;background:#f0f0f0"></div>
<div class="a" style="left:296px;top:409px;width:5px;height:5px;border-left:1.5px solid #555;border-top:1.5px solid #555;transform:rotate(45deg)"></div>
<div class="a" style="left:293px;top:443px;width:9px;height:78px;background:#cdcdcd"></div>
<div class="a" style="left:296px;top:647px;width:5px;height:5px;border-right:1.5px solid #555;border-bottom:1.5px solid #555;transform:rotate(45deg)"></div>
<!-- h scrollbar -->
<div class="a" style="left:3px;top:656px;width:300px;height:10px;background:#f0f0f0"></div>
<div class="a" style="left:14px;top:657px;width:196px;height:8px;background:#cdcdcd"></div>
<div class="a" style="left:7px;top:659px;width:4px;height:4px;border-left:1.5px solid #555;border-bottom:1.5px solid #555;transform:rotate(45deg)"></div>
<div class="a" style="left:285px;top:659px;width:4px;height:4px;border-right:1.5px solid #555;border-top:1.5px solid #555;transform:rotate(45deg)"></div>

<!-- ===== vertical toolbar ===== -->
<div class="a" style="left:306px;top:101px;width:2px;height:567px;background:#b4b4b4"></div>
<div class="a" style="left:309px;top:209px;width:15px;height:22px;background:#fdedc4;border:1px solid #f8e0a8"></div>
<div class="a" style="left:309px;top:361px;width:15px;height:23px;background:#fdedc4;border:1px solid #f8e0a8"></div>
<svg class="a" style="left:306px;top:100px" width="22" height="310" viewBox="306 100 22 310">
<line x1="309" y1="120.5" x2="324" y2="120.5" stroke="#bcbcbc" stroke-width="1"/>
<line x1="309" y1="171.5" x2="324" y2="171.5" stroke="#bcbcbc" stroke-width="1"/>
<line x1="309" y1="206.5" x2="324" y2="206.5" stroke="#bcbcbc" stroke-width="1"/>
<line x1="309" y1="234.5" x2="324" y2="234.5" stroke="#bcbcbc" stroke-width="1"/>
<line x1="309" y1="254.5" x2="324" y2="254.5" stroke="#bcbcbc" stroke-width="1"/>
<line x1="309" y1="289.5" x2="324" y2="289.5" stroke="#bcbcbc" stroke-width="1"/>
<polygon points="315,138.5 318.5,141 315,143.5" fill="#333"/>
<polygon points="315,161.5 318.5,164 315,166.5" fill="#333"/>
<polygon points="315,224.5 318.5,227 315,229.5" fill="#333"/>
<polygon points="315,307.5 318.5,310 315,312.5" fill="#333"/>
<polygon points="315,331.0 318.5,333.5 315,336.0" fill="#333"/>
<polygon points="315,354.0 318.5,356.5 315,359.0" fill="#333"/>
<polygon points="315,377.5 318.5,380 315,382.5" fill="#333"/>
<polygon points="315,400.5 318.5,403 315,405.5" fill="#333"/>
<polygon points="317,105 321,107.5 321,112 317,114.5 313,112 313,107.5" fill="#f4f0e4" stroke="#c8c0a8" stroke-width="0.6"/>
<circle cx="317" cy="105.5" r="1.5" fill="#d03a2a"/><circle cx="313.5" cy="112" r="1.4" fill="#3a2aa0"/><circle cx="320.5" cy="112" r="1.4" fill="#2a9a3a"/><circle cx="314" cy="108" r="0.9" fill="#e8d060"/><circle cx="320" cy="108" r="0.9" fill="#e8d060"/><circle cx="317" cy="114" r="0.9" fill="#e8d060"/>
<polygon points="311.5,130 316,126 321,130 321,134.5 312.5,134.5 312.5,130" fill="#f2f2f2" stroke="#b8b8b8" stroke-width="0.9"/>
<polygon points="312.5,148.5 320,148.5 322,150.5 322,158 312.5,158" fill="#ececec" stroke="#c4c4c4" stroke-width="0.9"/>
<circle cx="317" cy="177.5" r="1.6" fill="#f0c030"/><circle cx="317" cy="185" r="1.6" fill="#f0c030"/><circle cx="313" cy="181" r="1.6" fill="#f0c030"/><circle cx="321" cy="181" r="1.6" fill="#f0c030"/><circle cx="317" cy="181" r="1.8" fill="#fff" stroke="#444" stroke-width="0.7"/><line x1="318" y1="182" x2="321.5" y2="185.5" stroke="#222" stroke-width="1"/>
<path d="M311.5,194 v-2.5 h2.5 M319.5,191.5 h2.5 v2.5 M322,198.5 v2.5 h-2.5 M314,201 h-2.5 v-2.5" fill="none" stroke="#999" stroke-width="0.8"/>
<rect x="314.5" y="192.5" width="5" height="7.5" rx="2" fill="#f5a010"/><ellipse cx="317" cy="193.5" rx="2.5" ry="1.2" fill="#ffe070"/>
<rect x="312.5" y="212.5" width="9" height="9.5" fill="#f4f6f8" stroke="#b4bcc4" stroke-width="0.8"/><rect x="313.5" y="213.3" width="7" height="1.6" fill="#3a9ae0"/>
<rect x="312" y="240" width="10" height="7" fill="#2a8ae0" stroke="#1a5aa0" stroke-width="0.6"/><path d="M313,246 l4,3.5 M317,246 l-4,3.5" stroke="#e8401a" stroke-width="1.6"/>
<polygon points="316.5,260.5 321.5,269 311.5,269" fill="#f0a020" stroke="#d08010" stroke-width="0.6"/><polygon points="316.5,264 319,268 314,268" fill="#fff3d0"/>
<rect x="312.5" y="277" width="9" height="6" fill="#f4f4f4" stroke="#c8c8c8" stroke-width="0.8"/><rect x="314.5" y="274" width="5" height="3" fill="#f4f4f4" stroke="#c8c8c8" stroke-width="0.7"/>
<defs><linearGradient id="rb" x1="0" y1="0" x2="1" y2="1"><stop offset="0" stop-color="#2020c0"/><stop offset="0.3" stop-color="#20c0e0"/><stop offset="0.55" stop-color="#40d040"/><stop offset="0.8" stop-color="#f0d020"/><stop offset="1" stop-color="#e02020"/></linearGradient></defs>
<rect x="312" y="295" width="9.5" height="9" fill="url(#rb)"/>
<circle cx="316.5" cy="320.5" r="1.3" fill="#333"/><path d="M314,324.5 h5" stroke="#333" stroke-width="1.4"/>
<path d="M312.5,350 q-1,-4 3,-4.5 q2,-3.5 5,-0.5 q2.5,0.5 1.5,5 z" fill="#ececec" stroke="#c0c0c0" stroke-width="0.8"/>
<rect x="312.5" y="364.5" width="5" height="5.5" fill="#f05a10"/><polygon points="312,374 316,369 319,371 322,374" fill="#a0a0a0"/>
<defs><radialGradient id="yr"><stop offset="0.2" stop-color="#fff"/><stop offset="0.45" stop-color="#f8d000"/><stop offset="0.8" stop-color="#d09000"/><stop offset="1" stop-color="#a87000"/></radialGradient></defs>
<circle cx="316.5" cy="392.5" r="4.8" fill="url(#yr)"/>
</svg>

<!-- ===== viewport ===== -->
<div class="a" id="vp"></div>
<svg class="a" style="left:326px;top:101px" width="942" height="432" viewBox="326 101 942 432">
<defs><clipPath id="cc"><polygon points="519.5,233.0 802.0,183.0 843.0,440.5 563.5,491.5"/></clipPath><filter id="nz" x="0" y="0" width="100%" height="100%"><feTurbulence type="fractalNoise" baseFrequency="0.75" numOctaves="1" seed="5" result="n"/><feColorMatrix in="n" result="d" values="0 0 0 0 0.16  0 0 0 0 0.1  0 0 0 0 0.03  6 0 0 0 -2.9"/><feColorMatrix in="n" result="r" values="0 0 0 0 0.85  0 0 0 0 0.18  0 0 0 0 0.06  0 5 0 0 -3.2"/><feColorMatrix in="n" result="y" values="0 0 0 0 0.95  0 0 0 0 0.82  0 0 0 0 0.1  0 0 5 0 -3.0"/><feColorMatrix in="n" result="g" values="0 0 0 0 0.35  0 0 0 0 0.7  0 0 0 0 0.4  0 0 0 5 -3.2"/><feMerge><feMergeNode in="d"/><feMergeNode in="r"/><feMergeNode in="g"/></feMerge></filter></defs>
<polygon points="519.5,233.0 518.0,243.0 556.0,501.0 852.0,450.0 843.0,440.5 563.5,491.5" fill="#202020" opacity="0.35"/>
<polygon points="535.5,360.0 556.5,501.5 562.0,500.5" fill="#7a7a2a" opacity="0.55"/>
<polyline points="518.5,246.0 556.5,501.5 852.0,450.0" fill="none" stroke="#6a8a40" stroke-width="1" opacity="0.9"/>
<polyline points="518.0,243.0 556.5,501.0 852.0,450.0" fill="none" stroke="#40b0c0" stroke-width="0.6" stroke-dasharray="1 2" opacity="0.9"/>
<g clip-path="url(#cc)">
<polygon points="519.5,233.0 802.0,183.0 843.0,440.5 563.5,491.5" fill="#5a3c0c"/>
<polygon points="527.0,276.9 690.5,247.8 718.0,415.5 555.6,445.0" fill="#4a300a" />
<polygon points="535.7,283.8 542.5,282.6 553.9,349.8 547.1,351.0" fill="#d09a18" />
<line x1="540.0" y1="288.4" x2="549.6" y2="345.3" stroke="#8a5a10" stroke-width="0.8" />
<polygon points="549.3,364.0 556.1,362.8 567.5,429.9 560.7,431.2" fill="#b88010" />
<polygon points="545.9,282.4 552.7,281.2 564.1,348.4 557.3,349.6" fill="#b47a10" />
<line x1="550.2" y1="287.0" x2="559.8" y2="343.9" stroke="#8a5a10" stroke-width="0.8" />
<polygon points="559.5,362.6 566.2,361.4 577.6,428.5 570.9,429.8" fill="#c88e12" />
<polygon points="556.1,281.1 562.9,279.9 574.3,347.0 567.5,348.2" fill="#c88e12" />
<line x1="560.4" y1="285.6" x2="570.0" y2="342.5" stroke="#8a5a10" stroke-width="0.8" />
<polygon points="569.7,361.2 576.4,360.0 587.8,427.1 581.1,428.3" fill="#c88e12" />
<polygon points="566.4,279.7 573.1,278.5 584.4,345.6 577.7,346.8" fill="#d09a18" />
<line x1="570.6" y1="284.2" x2="580.2" y2="341.1" stroke="#8a5a10" stroke-width="0.8" />
<polygon points="579.9,359.8 586.6,358.6 597.9,425.7 591.2,426.9" fill="#c88e12" />
<polygon points="576.6,278.3 583.3,277.1 594.6,344.2 587.9,345.4" fill="#b88010" />
<line x1="580.8" y1="282.8" x2="590.4" y2="339.7" stroke="#8a5a10" stroke-width="0.8" />
<polygon points="590.1,358.4 596.8,357.2 608.1,424.3 601.4,425.5" fill="#c88e12" />
<polygon points="586.8,276.9 593.6,275.7 604.8,342.8 598.1,344.0" fill="#c88e12" />
<line x1="591.0" y1="281.5" x2="600.6" y2="338.3" stroke="#8a5a10" stroke-width="0.8" />
<polygon points="600.2,357.0 607.0,355.8 618.2,422.9 611.5,424.1" fill="#c08614" />
<polygon points="597.0,275.5 603.8,274.3 615.0,341.4 608.3,342.7" fill="#b47a10" />
<line x1="601.3" y1="280.1" x2="610.8" y2="336.9" stroke="#8a5a10" stroke-width="0.8" />
<polygon points="610.4,355.6 617.2,354.4 628.4,421.5 621.7,422.7" fill="#c88e12" />
<polygon points="607.2,274.1 614.0,272.9 625.2,340.0 618.5,341.3" fill="#b88010" />
<line x1="611.5" y1="278.7" x2="621.0" y2="335.5" stroke="#8a5a10" stroke-width="0.8" />
<polygon points="620.6,354.2 627.4,353.0 638.6,420.1 631.8,421.3" fill="#c88e12" />
<polygon points="622.3,274.0 624.0,274.3 624.9,275.7 625.8,280.8 625.3,282.4 623.9,283.3 621.6,283.7 619.9,283.4 619.0,282.0 618.1,276.9 618.6,275.3 620.0,274.4" fill="#b47a10" />
<polygon points="624.5,287.4 626.2,287.7 627.1,289.1 628.0,294.2 627.6,295.8 626.1,296.7 623.8,297.1 622.1,296.8 621.2,295.4 620.4,290.3 620.8,288.7 622.3,287.8" fill="#c88e12" />
<polygon points="626.8,300.8 628.5,301.2 629.4,302.5 630.2,307.7 629.8,309.2 628.3,310.1 626.1,310.5 624.4,310.2 623.5,308.9 622.6,303.7 623.0,302.1 624.5,301.2" fill="#c88e12" />
<polygon points="629.0,314.3 630.7,314.6 631.6,315.9 632.5,321.1 632.1,322.7 630.6,323.6 628.3,324.0 626.6,323.6 625.7,322.3 624.9,317.1 625.3,315.6 626.8,314.7" fill="#b88010" />
<polygon points="631.2,327.7 632.9,328.0 633.8,329.3 634.7,334.5 634.3,336.1 632.8,337.0 630.5,337.4 628.9,337.1 628.0,335.7 627.1,330.6 627.5,329.0 629.0,328.1" fill="#c88e12" />
<polygon points="630.8,352.8 637.5,351.5 643.8,389.0 637.0,390.2" fill="#c08614" />
<polygon points="642.2,393.5 643.9,393.8 644.8,395.2 646.0,402.1 645.6,403.7 644.1,404.6 641.8,405.0 640.1,404.7 639.2,403.4 638.1,396.4 638.5,394.8 640.0,393.9" fill="#b88010" />
<polygon points="644.6,407.7 646.3,408.0 647.2,409.4 648.3,416.3 647.9,417.9 646.4,418.8 644.2,419.2 642.5,418.9 641.6,417.6 640.4,410.6 640.9,409.0 642.3,408.1" fill="#b88010" />
<line x1="635.8" y1="393.1" x2="643.2" y2="406.4" stroke="#6a9a3a" stroke-width="0.6" />
<line x1="643.2" y1="406.4" x2="645.9" y2="391.3" stroke="#6a9a3a" stroke-width="0.6" />
<line x1="640.5" y1="421.5" x2="643.2" y2="406.4" stroke="#6a9a3a" stroke-width="0.6" />
<line x1="643.2" y1="406.4" x2="650.6" y2="419.7" stroke="#6a9a3a" stroke-width="0.6" />
<polygon points="632.5,272.6 634.2,272.9 635.1,274.3 636.0,279.4 635.6,281.0 634.1,281.9 631.8,282.3 630.1,282.0 629.2,280.6 628.4,275.5 628.8,273.9 630.3,273.0" fill="#c88e12" />
<polygon points="634.7,286.0 636.4,286.3 637.3,287.7 638.2,292.8 637.8,294.4 636.3,295.3 634.0,295.7 632.3,295.4 631.4,294.1 630.6,288.9 631.0,287.3 632.5,286.4" fill="#b88010" />
<polygon points="637.0,299.4 638.7,299.8 639.6,301.1 640.4,306.3 640.0,307.8 638.5,308.7 636.3,309.1 634.6,308.8 633.7,307.5 632.8,302.3 633.2,300.7 634.7,299.8" fill="#d09a18" />
<polygon points="639.2,312.9 640.9,313.2 641.8,314.5 642.7,319.7 642.2,321.3 640.8,322.2 638.5,322.6 636.8,322.2 635.9,320.9 635.1,315.7 635.5,314.2 637.0,313.3" fill="#b47a10" />
<polygon points="641.4,326.3 643.1,326.6 644.0,328.0 644.9,333.1 644.5,334.7 643.0,335.6 640.7,336.0 639.0,335.7 638.1,334.3 637.3,329.2 637.7,327.6 639.2,326.7" fill="#b88010" />
<polygon points="641.0,351.4 647.7,350.1 653.9,387.6 647.2,388.8" fill="#c88e12" />
<polygon points="652.4,392.1 654.1,392.4 655.0,393.8 656.1,400.7 655.7,402.3 654.2,403.2 652.0,403.6 650.3,403.3 649.4,402.0 648.2,395.0 648.7,393.4 650.1,392.5" fill="#c08614" />
<polygon points="654.7,406.3 656.4,406.6 657.3,408.0 658.5,414.9 658.1,416.5 656.6,417.4 654.3,417.8 652.7,417.5 651.8,416.2 650.6,409.2 651.0,407.6 652.5,406.7" fill="#a87010" />
<line x1="646.0" y1="391.7" x2="653.4" y2="405.0" stroke="#6a9a3a" stroke-width="0.6" />
<line x1="653.4" y1="405.0" x2="656.1" y2="389.9" stroke="#6a9a3a" stroke-width="0.6" />
<line x1="650.7" y1="420.1" x2="653.4" y2="405.0" stroke="#6a9a3a" stroke-width="0.6" />
<line x1="653.4" y1="405.0" x2="660.8" y2="418.2" stroke="#6a9a3a" stroke-width="0.6" />
<polygon points="642.7,271.2 644.4,271.5 645.3,272.9 646.2,278.0 645.8,279.6 644.3,280.5 642.0,280.9 640.3,280.6 639.4,279.2 638.6,274.1 639.0,272.5 640.5,271.6" fill="#b88010" />
<polygon points="645.0,284.6 646.7,284.9 647.6,286.3 648.4,291.5 648.0,293.0 646.5,293.9 644.2,294.3 642.6,294.0 641.7,292.7 640.8,287.5 641.2,285.9 642.7,285.0" fill="#c88e12" />
<polygon points="647.2,298.0 648.9,298.4 649.8,299.7 650.6,304.9 650.2,306.5 648.7,307.3 646.5,307.7 644.8,307.4 643.9,306.1 643.0,300.9 643.4,299.3 644.9,298.5" fill="#b88010" />
<polygon points="649.4,311.5 651.1,311.8 652.0,313.1 652.9,318.3 652.4,319.9 650.9,320.8 648.7,321.2 647.0,320.8 646.1,319.5 645.2,314.3 645.7,312.8 647.2,311.9" fill="#d09a18" />
<polygon points="651.6,324.9 653.3,325.2 654.2,326.6 655.1,331.7 654.7,333.3 653.2,334.2 650.9,334.6 649.2,334.3 648.3,332.9 647.5,327.8 647.9,326.2 649.4,325.3" fill="#c88e12" />
<polygon points="651.2,350.0 657.9,348.7 664.1,386.2 657.4,387.4" fill="#c88e12" />
<polygon points="662.5,390.7 664.2,391.0 665.1,392.4 666.3,399.3 665.9,400.9 664.4,401.8 662.1,402.2 660.5,401.9 659.6,400.6 658.4,393.6 658.8,392.0 660.3,391.1" fill="#c08614" />
<polygon points="664.9,404.9 666.6,405.2 667.5,406.6 668.6,413.5 668.2,415.1 666.7,416.0 664.5,416.4 662.8,416.1 661.9,414.7 660.8,407.8 661.2,406.2 662.7,405.3" fill="#b88010" />
<line x1="656.1" y1="390.3" x2="663.5" y2="403.6" stroke="#6a9a3a" stroke-width="0.6" />
<line x1="663.5" y1="403.6" x2="666.2" y2="388.4" stroke="#6a9a3a" stroke-width="0.6" />
<line x1="660.8" y1="418.7" x2="663.5" y2="403.6" stroke="#6a9a3a" stroke-width="0.6" />
<line x1="663.5" y1="403.6" x2="670.9" y2="416.8" stroke="#6a9a3a" stroke-width="0.6" />
<polygon points="652.9,269.8 654.6,270.1 655.5,271.5 656.4,276.6 656.0,278.2 654.5,279.1 652.2,279.5 650.5,279.2 649.6,277.8 648.8,272.7 649.2,271.1 650.7,270.2" fill="#b88010" />
<polygon points="655.2,283.2 656.9,283.6 657.8,284.9 658.6,290.1 658.2,291.6 656.7,292.5 654.5,292.9 652.8,292.6 651.9,291.3 651.0,286.1 651.4,284.5 652.9,283.6" fill="#b47a10" />
<polygon points="657.4,296.7 659.1,297.0 660.0,298.3 660.8,303.5 660.4,305.1 658.9,305.9 656.7,306.3 655.0,306.0 654.1,304.7 653.2,299.5 653.6,297.9 655.1,297.1" fill="#b47a10" />
<polygon points="659.6,310.1 661.3,310.4 662.2,311.7 663.1,316.9 662.6,318.5 661.1,319.4 658.9,319.8 657.2,319.4 656.3,318.1 655.4,312.9 655.9,311.4 657.4,310.5" fill="#d09a18" />
<polygon points="661.8,323.5 663.5,323.8 664.4,325.2 665.3,330.3 664.9,331.9 663.4,332.8 661.1,333.2 659.4,332.9 658.5,331.5 657.7,326.4 658.1,324.8 659.6,323.9" fill="#b47a10" />
<polygon points="661.3,348.6 668.1,347.3 674.3,384.8 667.5,386.0" fill="#c08614" />
<polygon points="672.7,389.3 674.4,389.6 675.3,391.0 676.4,397.9 676.0,399.5 674.5,400.4 672.3,400.8 670.6,400.5 669.7,399.1 668.6,392.2 669.0,390.6 670.5,389.7" fill="#a87010" />
<polygon points="675.1,403.5 676.7,403.8 677.6,405.2 678.8,412.1 678.4,413.7 676.9,414.6 674.7,415.0 673.0,414.7 672.1,413.3 670.9,406.4 671.3,404.8 672.8,403.9" fill="#a87010" />
<line x1="666.3" y1="388.9" x2="673.7" y2="402.1" stroke="#6a9a3a" stroke-width="0.6" />
<line x1="673.7" y1="402.1" x2="676.4" y2="387.0" stroke="#6a9a3a" stroke-width="0.6" />
<line x1="671.0" y1="417.3" x2="673.7" y2="402.1" stroke="#6a9a3a" stroke-width="0.6" />
<line x1="673.7" y1="402.1" x2="681.1" y2="415.4" stroke="#6a9a3a" stroke-width="0.6" />
<polygon points="663.2,268.4 664.9,268.7 665.8,270.1 666.6,275.2 666.2,276.8 664.7,277.7 662.4,278.1 660.7,277.8 659.8,276.5 659.0,271.3 659.4,269.7 660.9,268.8" fill="#b88010" />
<polygon points="665.4,281.8 667.1,282.2 668.0,283.5 668.8,288.7 668.4,290.2 666.9,291.1 664.7,291.5 663.0,291.2 662.1,289.9 661.2,284.7 661.6,283.1 663.1,282.2" fill="#b88010" />
<polygon points="667.6,295.3 669.3,295.6 670.2,296.9 671.0,302.1 670.6,303.7 669.1,304.6 666.9,305.0 665.2,304.6 664.3,303.3 663.4,298.1 663.8,296.6 665.3,295.7" fill="#b88010" />
<polygon points="669.8,308.7 671.5,309.0 672.4,310.3 673.2,315.5 672.8,317.1 671.3,318.0 669.1,318.4 667.4,318.1 666.5,316.7 665.6,311.5 666.1,310.0 667.6,309.1" fill="#c88e12" />
<polygon points="672.0,322.1 673.7,322.4 674.6,323.8 675.5,328.9 675.0,330.5 673.6,331.4 671.3,331.8 669.6,331.5 668.7,330.1 667.9,325.0 668.3,323.4 669.8,322.5" fill="#d09a18" />
<polygon points="671.5,347.2 678.3,345.9 684.4,383.4 677.7,384.6" fill="#c08614" />
<polygon points="682.9,387.9 684.6,388.2 685.5,389.6 686.6,396.5 686.2,398.1 684.7,399.0 682.5,399.4 680.8,399.1 679.9,397.7 678.7,390.8 679.1,389.2 680.6,388.3" fill="#a87010" />
<polygon points="685.2,402.1 686.9,402.4 687.8,403.7 688.9,410.7 688.5,412.3 687.0,413.2 684.8,413.6 683.1,413.3 682.2,411.9 681.1,405.0 681.5,403.4 683.0,402.5" fill="#c08614" />
<line x1="676.5" y1="387.5" x2="683.8" y2="400.7" stroke="#6a9a3a" stroke-width="0.6" />
<line x1="683.8" y1="400.7" x2="686.5" y2="385.6" stroke="#6a9a3a" stroke-width="0.6" />
<line x1="681.1" y1="415.8" x2="683.8" y2="400.7" stroke="#6a9a3a" stroke-width="0.6" />
<line x1="683.8" y1="400.7" x2="691.2" y2="414.0" stroke="#6a9a3a" stroke-width="0.6" />
<polygon points="673.4,267.0 675.1,267.4 676.0,268.7 676.8,273.9 676.4,275.4 674.9,276.3 672.7,276.7 671.0,276.4 670.1,275.1 669.2,269.9 669.6,268.3 671.1,267.4" fill="#b47a10" />
<polygon points="675.6,280.5 677.3,280.8 678.2,282.1 679.0,287.3 678.6,288.9 677.1,289.7 674.9,290.1 673.2,289.8 672.3,288.5 671.4,283.3 671.8,281.7 673.3,280.9" fill="#d09a18" />
<polygon points="677.8,293.9 679.5,294.2 680.4,295.5 681.2,300.7 680.8,302.3 679.3,303.2 677.1,303.6 675.4,303.2 674.5,301.9 673.6,296.7 674.0,295.2 675.5,294.3" fill="#c88e12" />
<polygon points="680.0,307.3 681.7,307.6 682.6,308.9 683.4,314.1 683.0,315.7 681.5,316.6 679.3,317.0 677.6,316.7 676.7,315.3 675.8,310.2 676.3,308.6 677.8,307.7" fill="#c88e12" />
<polygon points="682.2,320.7 683.9,321.0 684.8,322.4 685.6,327.5 685.2,329.1 683.7,330.0 681.5,330.4 679.8,330.1 678.9,328.7 678.1,323.6 678.5,322.0 680.0,321.1" fill="#b47a10" />
<polygon points="681.7,345.8 688.4,344.5 694.6,382.0 687.9,383.2" fill="#b88010" />
<polygon points="693.0,386.5 694.7,386.8 695.6,388.1 696.8,395.1 696.4,396.7 694.9,397.6 692.6,398.0 690.9,397.7 690.0,396.3 688.9,389.4 689.3,387.8 690.8,386.9" fill="#a87010" />
<polygon points="695.4,400.7 697.1,401.0 698.0,402.3 699.1,409.3 698.7,410.9 697.2,411.8 695.0,412.2 693.3,411.9 692.4,410.5 691.2,403.6 691.6,402.0 693.1,401.1" fill="#b88010" />
<line x1="686.6" y1="386.1" x2="694.0" y2="399.3" stroke="#6a9a3a" stroke-width="0.6" />
<line x1="694.0" y1="399.3" x2="696.7" y2="384.2" stroke="#6a9a3a" stroke-width="0.6" />
<line x1="691.3" y1="414.4" x2="694.0" y2="399.3" stroke="#6a9a3a" stroke-width="0.6" />
<line x1="694.0" y1="399.3" x2="701.4" y2="412.6" stroke="#6a9a3a" stroke-width="0.6" />
<polygon points="683.6,265.6 685.3,266.0 686.2,267.3 687.0,272.5 686.6,274.0 685.1,274.9 682.9,275.3 681.2,275.0 680.3,273.7 679.4,268.5 679.8,266.9 681.3,266.0" fill="#b47a10" />
<polygon points="685.8,279.1 687.5,279.4 688.4,280.7 689.2,285.9 688.8,287.5 687.3,288.3 685.1,288.7 683.4,288.4 682.5,287.1 681.6,281.9 682.0,280.4 683.5,279.5" fill="#b47a10" />
<polygon points="688.0,292.5 689.7,292.8 690.6,294.1 691.4,299.3 691.0,300.9 689.5,301.8 687.3,302.2 685.6,301.8 684.7,300.5 683.8,295.3 684.3,293.8 685.7,292.9" fill="#c88e12" />
<polygon points="690.2,305.9 691.9,306.2 692.8,307.5 693.6,312.7 693.2,314.3 691.7,315.2 689.5,315.6 687.8,315.3 686.9,313.9 686.0,308.8 686.5,307.2 687.9,306.3" fill="#c88e12" />
<polygon points="692.4,319.3 694.1,319.6 695.0,321.0 695.8,326.1 695.4,327.7 693.9,328.6 691.7,329.0 690.0,328.7 689.1,327.3 688.2,322.2 688.7,320.6 690.2,319.7" fill="#d09a18" />
<polygon points="691.9,344.4 698.6,343.1 704.8,380.5 698.0,381.8" fill="#d09a18" />
<polygon points="703.2,385.1 704.9,385.4 705.8,386.7 706.9,393.7 706.5,395.3 705.0,396.2 702.8,396.6 701.1,396.3 700.2,394.9 699.1,388.0 699.5,386.4 701.0,385.5" fill="#c08614" />
<polygon points="705.5,399.3 707.2,399.6 708.1,400.9 709.3,407.9 708.8,409.5 707.4,410.4 705.1,410.8 703.4,410.4 702.5,409.1 701.4,402.1 701.8,400.6 703.3,399.7" fill="#a87010" />
<line x1="696.8" y1="384.6" x2="704.2" y2="397.9" stroke="#6a9a3a" stroke-width="0.6" />
<line x1="704.2" y1="397.9" x2="706.9" y2="382.8" stroke="#6a9a3a" stroke-width="0.6" />
<line x1="701.4" y1="413.0" x2="704.2" y2="397.9" stroke="#6a9a3a" stroke-width="0.6" />
<line x1="704.2" y1="397.9" x2="711.5" y2="411.2" stroke="#6a9a3a" stroke-width="0.6" />
<line x1="533.1" y1="278.5" x2="561.2" y2="444.0" stroke="#d8441a" stroke-width="1.0" />
<line x1="543.2" y1="276.7" x2="571.3" y2="442.1" stroke="#d8441a" stroke-width="1.0" />
<line x1="553.4" y1="274.9" x2="581.3" y2="440.3" stroke="#d8441a" stroke-width="1.0" />
<line x1="563.5" y1="273.1" x2="591.4" y2="438.5" stroke="#d8441a" stroke-width="1.0" />
<line x1="573.7" y1="271.3" x2="601.5" y2="436.6" stroke="#d8441a" stroke-width="1.0" />
<line x1="583.8" y1="269.5" x2="611.6" y2="434.8" stroke="#d8441a" stroke-width="1.0" />
<line x1="594.0" y1="267.7" x2="621.7" y2="433.0" stroke="#d8441a" stroke-width="1.0" />
<line x1="604.1" y1="265.9" x2="631.8" y2="431.1" stroke="#d8441a" stroke-width="1.0" />
<line x1="614.3" y1="264.1" x2="641.8" y2="429.3" stroke="#d8441a" stroke-width="1.0" />
<line x1="624.4" y1="262.3" x2="651.9" y2="427.5" stroke="#d8441a" stroke-width="1.0" />
<line x1="634.6" y1="260.5" x2="662.0" y2="425.7" stroke="#d8441a" stroke-width="1.0" />
<line x1="644.7" y1="258.7" x2="672.1" y2="423.8" stroke="#d8441a" stroke-width="1.0" />
<line x1="654.9" y1="256.8" x2="682.2" y2="422.0" stroke="#d8441a" stroke-width="1.0" />
<line x1="665.0" y1="255.0" x2="692.2" y2="420.2" stroke="#d8441a" stroke-width="1.0" />
<line x1="675.2" y1="253.2" x2="702.3" y2="418.3" stroke="#d8441a" stroke-width="1.0" />
<line x1="685.3" y1="251.4" x2="712.4" y2="416.5" stroke="#d8441a" stroke-width="1.0" />
<line x1="530.0" y1="277.7" x2="690.4" y2="256.1" stroke="#e04812" stroke-width="1.1" />
<line x1="530.9" y1="282.9" x2="691.3" y2="261.3" stroke="#e04812" stroke-width="1.1" />
<line x1="543.0" y1="354.0" x2="702.9" y2="332.2" stroke="#e04812" stroke-width="1.1" />
<line x1="544.3" y1="361.7" x2="704.2" y2="339.9" stroke="#e04812" stroke-width="1.1" />
<line x1="556.6" y1="434.1" x2="716.0" y2="412.1" stroke="#e04812" stroke-width="1.1" />
<line x1="557.7" y1="440.6" x2="717.1" y2="418.6" stroke="#e04812" stroke-width="1.1" />
<line x1="532.9" y1="277.5" x2="538.9" y2="281.9" stroke="#6a9a3a" stroke-width="0.7" />
<line x1="538.9" y1="281.9" x2="543.1" y2="276.1" stroke="#6a9a3a" stroke-width="0.7" />
<line x1="543.1" y1="276.1" x2="549.1" y2="280.6" stroke="#6a9a3a" stroke-width="0.7" />
<line x1="549.1" y1="280.6" x2="553.3" y2="274.7" stroke="#6a9a3a" stroke-width="0.7" />
<line x1="553.3" y1="274.7" x2="559.3" y2="279.2" stroke="#6a9a3a" stroke-width="0.7" />
<line x1="559.3" y1="279.2" x2="563.5" y2="273.3" stroke="#6a9a3a" stroke-width="0.7" />
<line x1="563.5" y1="273.3" x2="569.5" y2="277.8" stroke="#6a9a3a" stroke-width="0.7" />
<line x1="569.5" y1="277.8" x2="573.8" y2="271.9" stroke="#6a9a3a" stroke-width="0.7" />
<line x1="573.8" y1="271.9" x2="579.7" y2="276.4" stroke="#6a9a3a" stroke-width="0.7" />
<line x1="579.7" y1="276.4" x2="584.0" y2="270.5" stroke="#6a9a3a" stroke-width="0.7" />
<line x1="584.0" y1="270.5" x2="590.0" y2="275.0" stroke="#6a9a3a" stroke-width="0.7" />
<line x1="590.0" y1="275.0" x2="594.2" y2="269.1" stroke="#6a9a3a" stroke-width="0.7" />
<line x1="594.2" y1="269.1" x2="600.2" y2="273.6" stroke="#6a9a3a" stroke-width="0.7" />
<line x1="600.2" y1="273.6" x2="604.4" y2="267.8" stroke="#6a9a3a" stroke-width="0.7" />
<line x1="604.4" y1="267.8" x2="610.4" y2="272.2" stroke="#6a9a3a" stroke-width="0.7" />
<line x1="610.4" y1="272.2" x2="614.6" y2="266.4" stroke="#6a9a3a" stroke-width="0.7" />
<line x1="614.6" y1="266.4" x2="620.6" y2="270.8" stroke="#6a9a3a" stroke-width="0.7" />
<line x1="620.6" y1="270.8" x2="624.9" y2="265.0" stroke="#6a9a3a" stroke-width="0.7" />
<line x1="624.9" y1="265.0" x2="630.8" y2="269.4" stroke="#6a9a3a" stroke-width="0.7" />
<line x1="630.8" y1="269.4" x2="635.1" y2="263.6" stroke="#6a9a3a" stroke-width="0.7" />
<line x1="635.1" y1="263.6" x2="641.0" y2="268.1" stroke="#6a9a3a" stroke-width="0.7" />
<line x1="641.0" y1="268.1" x2="645.3" y2="262.2" stroke="#6a9a3a" stroke-width="0.7" />
<line x1="645.3" y1="262.2" x2="651.3" y2="266.7" stroke="#6a9a3a" stroke-width="0.7" />
<line x1="651.3" y1="266.7" x2="655.5" y2="260.8" stroke="#6a9a3a" stroke-width="0.7" />
<line x1="655.5" y1="260.8" x2="661.5" y2="265.3" stroke="#6a9a3a" stroke-width="0.7" />
<line x1="661.5" y1="265.3" x2="665.7" y2="259.4" stroke="#6a9a3a" stroke-width="0.7" />
<line x1="665.7" y1="259.4" x2="671.7" y2="263.9" stroke="#6a9a3a" stroke-width="0.7" />
<line x1="671.7" y1="263.9" x2="676.0" y2="258.0" stroke="#6a9a3a" stroke-width="0.7" />
<line x1="676.0" y1="258.0" x2="681.9" y2="262.5" stroke="#6a9a3a" stroke-width="0.7" />
<line x1="681.9" y1="262.5" x2="686.2" y2="256.6" stroke="#6a9a3a" stroke-width="0.7" />
<line x1="545.8" y1="353.7" x2="552.3" y2="360.8" stroke="#6a9a3a" stroke-width="0.7" />
<line x1="552.3" y1="360.8" x2="556.0" y2="352.3" stroke="#6a9a3a" stroke-width="0.7" />
<line x1="556.0" y1="352.3" x2="562.4" y2="359.4" stroke="#6a9a3a" stroke-width="0.7" />
<line x1="562.4" y1="359.4" x2="566.2" y2="350.9" stroke="#6a9a3a" stroke-width="0.7" />
<line x1="566.2" y1="350.9" x2="572.6" y2="358.0" stroke="#6a9a3a" stroke-width="0.7" />
<line x1="572.6" y1="358.0" x2="576.4" y2="349.5" stroke="#6a9a3a" stroke-width="0.7" />
<line x1="576.4" y1="349.5" x2="582.8" y2="356.6" stroke="#6a9a3a" stroke-width="0.7" />
<line x1="582.8" y1="356.6" x2="586.6" y2="348.1" stroke="#6a9a3a" stroke-width="0.7" />
<line x1="586.6" y1="348.1" x2="593.0" y2="355.2" stroke="#6a9a3a" stroke-width="0.7" />
<line x1="593.0" y1="355.2" x2="596.8" y2="346.7" stroke="#6a9a3a" stroke-width="0.7" />
<line x1="596.8" y1="346.7" x2="603.2" y2="353.8" stroke="#6a9a3a" stroke-width="0.7" />
<line x1="603.2" y1="353.8" x2="607.0" y2="345.3" stroke="#6a9a3a" stroke-width="0.7" />
<line x1="607.0" y1="345.3" x2="613.4" y2="352.4" stroke="#6a9a3a" stroke-width="0.7" />
<line x1="613.4" y1="352.4" x2="617.2" y2="343.9" stroke="#6a9a3a" stroke-width="0.7" />
<line x1="617.2" y1="343.9" x2="623.6" y2="351.0" stroke="#6a9a3a" stroke-width="0.7" />
<line x1="623.6" y1="351.0" x2="627.4" y2="342.5" stroke="#6a9a3a" stroke-width="0.7" />
<line x1="627.4" y1="342.5" x2="633.7" y2="349.6" stroke="#6a9a3a" stroke-width="0.7" />
<line x1="633.7" y1="349.6" x2="637.5" y2="341.1" stroke="#6a9a3a" stroke-width="0.7" />
<line x1="637.5" y1="341.1" x2="643.9" y2="348.2" stroke="#6a9a3a" stroke-width="0.7" />
<line x1="643.9" y1="348.2" x2="647.7" y2="339.7" stroke="#6a9a3a" stroke-width="0.7" />
<line x1="647.7" y1="339.7" x2="654.1" y2="346.8" stroke="#6a9a3a" stroke-width="0.7" />
<line x1="654.1" y1="346.8" x2="657.9" y2="338.3" stroke="#6a9a3a" stroke-width="0.7" />
<line x1="657.9" y1="338.3" x2="664.3" y2="345.4" stroke="#6a9a3a" stroke-width="0.7" />
<line x1="664.3" y1="345.4" x2="668.1" y2="336.9" stroke="#6a9a3a" stroke-width="0.7" />
<line x1="668.1" y1="336.9" x2="674.5" y2="344.0" stroke="#6a9a3a" stroke-width="0.7" />
<line x1="674.5" y1="344.0" x2="678.3" y2="335.5" stroke="#6a9a3a" stroke-width="0.7" />
<line x1="678.3" y1="335.5" x2="684.7" y2="342.6" stroke="#6a9a3a" stroke-width="0.7" />
<line x1="684.7" y1="342.6" x2="688.5" y2="334.1" stroke="#6a9a3a" stroke-width="0.7" />
<line x1="688.5" y1="334.1" x2="694.8" y2="341.2" stroke="#6a9a3a" stroke-width="0.7" />
<line x1="694.8" y1="341.2" x2="698.7" y2="332.7" stroke="#6a9a3a" stroke-width="0.7" />
<line x1="559.5" y1="433.8" x2="565.6" y2="439.6" stroke="#6a9a3a" stroke-width="0.7" />
<line x1="565.6" y1="439.6" x2="569.6" y2="432.4" stroke="#6a9a3a" stroke-width="0.7" />
<line x1="569.6" y1="432.4" x2="575.8" y2="438.2" stroke="#6a9a3a" stroke-width="0.7" />
<line x1="575.8" y1="438.2" x2="579.8" y2="431.0" stroke="#6a9a3a" stroke-width="0.7" />
<line x1="579.8" y1="431.0" x2="585.9" y2="436.8" stroke="#6a9a3a" stroke-width="0.7" />
<line x1="585.9" y1="436.8" x2="589.9" y2="429.6" stroke="#6a9a3a" stroke-width="0.7" />
<line x1="589.9" y1="429.6" x2="596.1" y2="435.4" stroke="#6a9a3a" stroke-width="0.7" />
<line x1="596.1" y1="435.4" x2="600.1" y2="428.2" stroke="#6a9a3a" stroke-width="0.7" />
<line x1="600.1" y1="428.2" x2="606.3" y2="434.0" stroke="#6a9a3a" stroke-width="0.7" />
<line x1="606.3" y1="434.0" x2="610.2" y2="426.8" stroke="#6a9a3a" stroke-width="0.7" />
<line x1="610.2" y1="426.8" x2="616.4" y2="432.6" stroke="#6a9a3a" stroke-width="0.7" />
<line x1="616.4" y1="432.6" x2="620.4" y2="425.4" stroke="#6a9a3a" stroke-width="0.7" />
<line x1="620.4" y1="425.4" x2="626.6" y2="431.1" stroke="#6a9a3a" stroke-width="0.7" />
<line x1="626.6" y1="431.1" x2="630.6" y2="424.0" stroke="#6a9a3a" stroke-width="0.7" />
<line x1="630.6" y1="424.0" x2="636.7" y2="429.7" stroke="#6a9a3a" stroke-width="0.7" />
<line x1="636.7" y1="429.7" x2="640.7" y2="422.6" stroke="#6a9a3a" stroke-width="0.7" />
<line x1="640.7" y1="422.6" x2="646.9" y2="428.3" stroke="#6a9a3a" stroke-width="0.7" />
<line x1="646.9" y1="428.3" x2="650.9" y2="421.2" stroke="#6a9a3a" stroke-width="0.7" />
<line x1="650.9" y1="421.2" x2="657.0" y2="426.9" stroke="#6a9a3a" stroke-width="0.7" />
<line x1="657.0" y1="426.9" x2="661.0" y2="419.7" stroke="#6a9a3a" stroke-width="0.7" />
<line x1="661.0" y1="419.7" x2="667.2" y2="425.5" stroke="#6a9a3a" stroke-width="0.7" />
<line x1="667.2" y1="425.5" x2="671.2" y2="418.3" stroke="#6a9a3a" stroke-width="0.7" />
<line x1="671.2" y1="418.3" x2="677.3" y2="424.1" stroke="#6a9a3a" stroke-width="0.7" />
<line x1="677.3" y1="424.1" x2="681.3" y2="416.9" stroke="#6a9a3a" stroke-width="0.7" />
<line x1="681.3" y1="416.9" x2="687.5" y2="422.7" stroke="#6a9a3a" stroke-width="0.7" />
<line x1="687.5" y1="422.7" x2="691.5" y2="415.5" stroke="#6a9a3a" stroke-width="0.7" />
<line x1="691.5" y1="415.5" x2="697.6" y2="421.3" stroke="#6a9a3a" stroke-width="0.7" />
<line x1="697.6" y1="421.3" x2="701.6" y2="414.1" stroke="#6a9a3a" stroke-width="0.7" />
<line x1="701.6" y1="414.1" x2="707.8" y2="419.8" stroke="#6a9a3a" stroke-width="0.7" />
<line x1="707.8" y1="419.8" x2="711.8" y2="412.7" stroke="#6a9a3a" stroke-width="0.7" />
<line x1="550.7" y1="283.4" x2="561.0" y2="350.8" stroke="#f05a14" stroke-width="4" />
<line x1="567.7" y1="362.9" x2="577.4" y2="430.4" stroke="#f05a14" stroke-width="4.5" />
<line x1="550.7" y1="283.4" x2="561.0" y2="350.8" stroke="#ffb030" stroke-width="1.2" stroke-dasharray="3 9" opacity="0.8"/>
<line x1="567.7" y1="362.9" x2="577.4" y2="430.4" stroke="#ffb030" stroke-width="1.2" stroke-dasharray="3 9" opacity="0.8"/>
<line x1="584.6" y1="277.3" x2="594.7" y2="344.7" stroke="#f05a14" stroke-width="4" />
<line x1="601.4" y1="356.8" x2="611.0" y2="424.3" stroke="#f05a14" stroke-width="4.5" />
<line x1="584.6" y1="277.3" x2="594.7" y2="344.7" stroke="#ffb030" stroke-width="1.2" stroke-dasharray="3 9" opacity="0.8"/>
<line x1="601.4" y1="356.8" x2="611.0" y2="424.3" stroke="#ffb030" stroke-width="1.2" stroke-dasharray="3 9" opacity="0.8"/>
<line x1="598.6" y1="274.8" x2="608.8" y2="342.2" stroke="#f05a14" stroke-width="4" />
<line x1="615.4" y1="354.3" x2="625.0" y2="421.7" stroke="#f05a14" stroke-width="4.5" />
<line x1="598.6" y1="274.8" x2="608.8" y2="342.2" stroke="#ffb030" stroke-width="1.2" stroke-dasharray="3 9" opacity="0.8"/>
<line x1="615.4" y1="354.3" x2="625.0" y2="421.7" stroke="#ffb030" stroke-width="1.2" stroke-dasharray="3 9" opacity="0.8"/>
<line x1="576.2" y1="310.8" x2="656.0" y2="267.3" stroke="#6a9a3a" stroke-width="0.6" />
<line x1="622.8" y1="329.0" x2="686.7" y2="277.7" stroke="#6a9a3a" stroke-width="0.6" />
<polygon points="519.5,233.0 683.4,204.0 690.5,247.8 527.0,276.9" fill="#b86a14" />
<polygon points="555.9,233.2 558.1,233.2 560.2,234.0 561.7,235.5 562.4,237.4 565.5,255.5 565.4,257.5 564.4,259.4 562.8,260.9 560.7,261.6 536.7,265.9 534.5,265.9 532.5,265.1 531.0,263.6 530.2,261.7 527.1,243.6 527.2,241.6 528.2,239.7 529.8,238.2 531.9,237.5" fill="#dca818" />
<polygon points="671.3,210.1 674.1,210.1 676.6,211.1 678.5,212.9 679.4,215.3 682.6,234.7 682.4,237.2 681.2,239.6 679.2,241.4 676.6,242.4 608.9,254.4 606.1,254.4 603.6,253.4 601.7,251.6 600.7,249.2 597.5,229.8 597.6,227.3 598.8,224.9 600.9,223.1 603.5,222.1" fill="#dca818" />
<polygon points="555.6,445.0 718.0,415.5 725.6,461.9 563.5,491.5" fill="#b86a14" />
<polygon points="667.9,435.2 670.7,435.2 673.2,436.2 675.0,438.0 676.0,440.4 679.0,458.5 678.8,461.0 677.7,463.4 675.6,465.2 673.0,466.2 575.2,484.0 572.4,484.0 569.9,483.0 568.1,481.2 567.1,478.8 564.0,460.8 564.1,458.2 565.3,455.8 567.3,454.0 569.9,453.0" fill="#dca818" />
<polygon points="677.7,433.4 718.3,426.1 723.8,459.6 683.3,467.0" fill="#8a5e12" />
<line x1="680.1" y1="430.4" x2="686.5" y2="469.1" stroke="#d04a16" stroke-width="0.9" />
<line x1="688.5" y1="428.8" x2="694.9" y2="467.5" stroke="#d04a16" stroke-width="0.9" />
<line x1="696.9" y1="427.3" x2="703.2" y2="466.0" stroke="#d04a16" stroke-width="0.9" />
<line x1="705.3" y1="425.8" x2="711.6" y2="464.5" stroke="#d04a16" stroke-width="0.9" />
<line x1="713.7" y1="424.2" x2="720.0" y2="462.9" stroke="#d04a16" stroke-width="0.9" />
<polygon points="560.5,225.8 595.8,219.5 602.3,258.2 567.0,264.5" fill="#c08a18" />
<line x1="564.7" y1="225.0" x2="572.1" y2="268.9" stroke="#d04a18" stroke-width="1.2" />
<line x1="568.9" y1="224.2" x2="576.3" y2="268.2" stroke="#d04a18" stroke-width="1.2" />
<line x1="573.2" y1="223.5" x2="580.6" y2="267.4" stroke="#d04a18" stroke-width="1.2" />
<line x1="577.4" y1="222.8" x2="584.8" y2="266.7" stroke="#d04a18" stroke-width="1.2" />
<line x1="581.7" y1="222.0" x2="589.0" y2="265.9" stroke="#d04a18" stroke-width="1.2" />
<line x1="585.9" y1="221.2" x2="593.2" y2="265.2" stroke="#d04a18" stroke-width="1.2" />
<line x1="590.1" y1="220.5" x2="597.5" y2="264.4" stroke="#d04a18" stroke-width="1.2" />
<line x1="567.5" y1="224.5" x2="574.9" y2="268.4" stroke="#6a9a3a" stroke-width="0.5" />
<line x1="576.0" y1="223.0" x2="583.4" y2="266.9" stroke="#6a9a3a" stroke-width="0.5" />
<line x1="584.5" y1="221.5" x2="591.8" y2="265.4" stroke="#6a9a3a" stroke-width="0.5" />
<polygon points="683.4,204.0 748.3,192.5 755.0,233.7 690.1,245.3" fill="#dc701a" />
<circle cx="695.3" cy="215.1" r="2.5" fill="#d8c040"/>
<circle cx="704.9" cy="229.4" r="2.5" fill="#d8c040"/>
<circle cx="700.1" cy="235.5" r="2.5" fill="#d8c040"/>
<circle cx="730.7" cy="227.4" r="2.5" fill="#d8c040"/>
<polygon points="705.4,205.4 722.3,202.4 727.6,234.6 710.6,237.6" fill="#4a9aaa" />
<polygon points="707.8,207.6 720.8,205.3 725.2,232.4 712.2,234.7" fill="#707070" />
<polygon points="709.9,220.5 722.9,218.2 725.0,231.1 712.0,233.4" fill="#3a80c0" />
<polygon points="735.5,202.7 741.1,201.7 745.5,229.0 739.9,230.1" fill="#4a9aaa" />
<polygon points="737.3,205.1 740.1,204.6 743.6,226.5 740.8,227.0" fill="#707070" />
<polygon points="690.1,245.3 755.0,233.7 771.6,336.8 707.0,348.4" fill="#8a5c12" />
<polygon points="712.0,249.3 713.3,249.3 714.5,249.8 715.4,250.7 715.8,251.8 721.6,286.9 721.5,288.1 720.9,289.3 719.9,290.1 718.7,290.6 707.1,292.7 705.8,292.7 704.6,292.2 703.7,291.3 703.3,290.2 697.5,255.1 697.6,253.9 698.2,252.7 699.1,251.9 700.4,251.4" fill="#dca818" />
<polygon points="704.2,295.8 723.9,292.3 731.4,338.7 711.8,342.3" fill="#b88214" />
<polygon points="716.3,245.9 737.5,242.1 750.8,324.6 729.8,328.4" fill="#b87a16" />
<line x1="716.9" y1="245.8" x2="731.7" y2="328.1" stroke="#3a2406" stroke-width="0.8" />
<line x1="718.9" y1="245.5" x2="733.7" y2="327.7" stroke="#3a2406" stroke-width="0.8" />
<line x1="720.8" y1="245.1" x2="735.7" y2="327.4" stroke="#3a2406" stroke-width="0.8" />
<line x1="722.8" y1="244.8" x2="737.6" y2="327.0" stroke="#3a2406" stroke-width="0.8" />
<line x1="724.8" y1="244.4" x2="739.6" y2="326.6" stroke="#3a2406" stroke-width="0.8" />
<line x1="726.8" y1="244.1" x2="741.6" y2="326.3" stroke="#3a2406" stroke-width="0.8" />
<line x1="728.7" y1="243.7" x2="743.5" y2="325.9" stroke="#3a2406" stroke-width="0.8" />
<line x1="730.7" y1="243.4" x2="745.5" y2="325.6" stroke="#3a2406" stroke-width="0.8" />
<line x1="732.7" y1="243.0" x2="747.5" y2="325.2" stroke="#3a2406" stroke-width="0.8" />
<line x1="734.7" y1="242.6" x2="749.4" y2="324.9" stroke="#3a2406" stroke-width="0.8" />
<line x1="736.6" y1="242.3" x2="751.4" y2="324.5" stroke="#3a2406" stroke-width="0.8" />
<line x1="716.8" y1="248.5" x2="739.6" y2="255.0" stroke="#4a3008" stroke-width="0.6" />
<line x1="717.6" y1="253.6" x2="740.4" y2="260.2" stroke="#4a3008" stroke-width="0.6" />
<line x1="718.4" y1="258.8" x2="741.2" y2="265.3" stroke="#4a3008" stroke-width="0.6" />
<line x1="719.3" y1="264.0" x2="742.1" y2="270.5" stroke="#4a3008" stroke-width="0.6" />
<line x1="720.1" y1="269.1" x2="742.9" y2="275.7" stroke="#4a3008" stroke-width="0.6" />
<line x1="721.0" y1="274.3" x2="743.7" y2="280.8" stroke="#4a3008" stroke-width="0.6" />
<line x1="721.8" y1="279.4" x2="744.6" y2="286.0" stroke="#4a3008" stroke-width="0.6" />
<line x1="722.6" y1="284.6" x2="745.4" y2="291.1" stroke="#4a3008" stroke-width="0.6" />
<line x1="723.5" y1="289.7" x2="746.3" y2="296.3" stroke="#4a3008" stroke-width="0.6" />
<line x1="724.3" y1="294.9" x2="747.1" y2="301.4" stroke="#4a3008" stroke-width="0.6" />
<line x1="725.2" y1="300.1" x2="747.9" y2="306.6" stroke="#4a3008" stroke-width="0.6" />
<line x1="726.0" y1="305.2" x2="748.8" y2="311.7" stroke="#4a3008" stroke-width="0.6" />
<line x1="726.8" y1="310.4" x2="749.6" y2="316.9" stroke="#4a3008" stroke-width="0.6" />
<line x1="727.7" y1="315.5" x2="750.4" y2="322.0" stroke="#4a3008" stroke-width="0.6" />
<line x1="728.5" y1="320.7" x2="751.3" y2="327.2" stroke="#4a3008" stroke-width="0.6" />
<line x1="729.4" y1="325.8" x2="752.1" y2="332.4" stroke="#4a3008" stroke-width="0.6" />
<line x1="717.7" y1="245.7" x2="732.6" y2="327.9" stroke="#e05a18" stroke-width="0.8" />
<line x1="721.1" y1="245.1" x2="736.0" y2="327.3" stroke="#e05a18" stroke-width="0.8" />
<line x1="724.5" y1="244.5" x2="739.3" y2="326.7" stroke="#e05a18" stroke-width="0.8" />
<line x1="727.9" y1="243.9" x2="742.7" y2="326.1" stroke="#e05a18" stroke-width="0.8" />
<line x1="731.3" y1="243.2" x2="746.1" y2="325.5" stroke="#e05a18" stroke-width="0.8" />
<line x1="734.7" y1="242.6" x2="749.4" y2="324.9" stroke="#e05a18" stroke-width="0.8" />
<line x1="717.2" y1="251.1" x2="738.2" y2="255.3" stroke="#6a9a3a" stroke-width="0.6" />
<line x1="719.3" y1="264.0" x2="740.2" y2="268.2" stroke="#6a9a3a" stroke-width="0.6" />
<line x1="721.4" y1="276.8" x2="742.3" y2="281.1" stroke="#6a9a3a" stroke-width="0.6" />
<line x1="723.5" y1="289.7" x2="744.4" y2="293.9" stroke="#6a9a3a" stroke-width="0.6" />
<line x1="725.6" y1="302.6" x2="746.5" y2="306.8" stroke="#6a9a3a" stroke-width="0.6" />
<line x1="727.7" y1="315.5" x2="748.6" y2="319.7" stroke="#6a9a3a" stroke-width="0.6" />
<circle cx="746.6" cy="280.3" r="2" fill="#e09a2a" stroke="#5a3a08" stroke-width="0.6"/>
<circle cx="752.2" cy="279.3" r="2" fill="#e09a2a" stroke="#5a3a08" stroke-width="0.6"/>
<circle cx="748.6" cy="293.2" r="2" fill="#e09a2a" stroke="#5a3a08" stroke-width="0.6"/>
<circle cx="754.3" cy="292.2" r="2" fill="#e09a2a" stroke="#5a3a08" stroke-width="0.6"/>
<circle cx="750.7" cy="306.1" r="2" fill="#e09a2a" stroke="#5a3a08" stroke-width="0.6"/>
<circle cx="756.4" cy="305.1" r="2" fill="#e09a2a" stroke="#5a3a08" stroke-width="0.6"/>
<circle cx="754.8" cy="313.3" r="2" fill="#e09a2a" stroke="#5a3a08" stroke-width="0.6"/>
<polygon points="736.3,243.7 750.4,241.2 752.7,255.4 738.6,257.9" fill="#2f6ad0" />
<polygon points="739.7,247.1 748.2,245.5 749.2,252.0 740.8,253.5" fill="#4aa0e8" />
<polygon points="707.0,348.4 771.6,336.8 789.9,450.2 725.6,461.9" fill="#c8601a" />
<polygon points="763.7,359.4 765.9,359.5 767.9,360.2 769.4,361.7 770.2,363.6 782.8,442.2 782.7,444.2 781.8,446.1 780.2,447.6 778.1,448.4 737.6,455.8 735.4,455.8 733.4,455.0 731.9,453.5 731.1,451.6 718.3,373.0 718.4,370.9 719.3,369.0 720.9,367.6 723.0,366.8" fill="#d49a16" />
<polygon points="714.2,344.5 741.1,339.6 744.9,362.8 718.0,367.7" fill="#2a60c8" />
<polygon points="718.5,347.7 738.1,344.2 739.6,353.2 719.9,356.7" fill="#4ab0e0" opacity="0.8"/>
<polygon points="753.1,340.1 766.0,337.8 768.5,353.3 755.6,355.6" fill="#2a60c8" />
<polygon points="755.4,343.7 763.8,342.2 764.8,348.6 756.4,350.1" fill="#4ab0e0" opacity="0.8"/>
<polygon points="697.1,358.2 704.6,356.8 706.3,367.1 698.7,368.5" fill="#3070c0" />
<polygon points="583.6,366.7 589.8,365.5 593.7,388.8 587.6,389.9" fill="#2a9ad0" />
<polygon points="585.5,369.0 588.9,368.4 591.9,386.5 588.5,387.1" fill="#2a50c0" />
<circle cx="739.9" cy="443.4" r="5" fill="none" stroke="#5a3a08" stroke-width="1"/>
<polygon points="748.3,192.5 802.0,183.0 843.0,440.5 789.9,450.2" fill="#4a3208" />
<polygon points="754.4,197.8 763.2,196.2 766.6,217.4 757.8,218.9" fill="#6a4a10" />
<line x1="756.2" y1="197.5" x2="759.6" y2="218.6" stroke="#3a2606" stroke-width="0.6" />
<line x1="758.8" y1="197.0" x2="762.2" y2="218.1" stroke="#3a2606" stroke-width="0.6" />
<line x1="761.4" y1="196.5" x2="764.8" y2="217.7" stroke="#3a2606" stroke-width="0.6" />
<line x1="755.2" y1="202.4" x2="763.9" y2="200.9" stroke="#b06a16" stroke-width="0.6" />
<line x1="756.1" y1="208.1" x2="764.8" y2="206.5" stroke="#b06a16" stroke-width="0.6" />
<line x1="757.0" y1="213.8" x2="765.7" y2="212.2" stroke="#b06a16" stroke-width="0.6" />
<line x1="757.1" y1="220.1" x2="767.6" y2="218.2" stroke="#d07818" stroke-width="0.9" />
<polygon points="758.1,221.0 766.9,219.4 770.3,240.5 761.5,242.1" fill="#6a4a10" />
<line x1="759.9" y1="220.7" x2="763.3" y2="241.8" stroke="#3a2606" stroke-width="0.6" />
<line x1="762.5" y1="220.2" x2="765.9" y2="241.3" stroke="#3a2606" stroke-width="0.6" />
<line x1="765.1" y1="219.7" x2="768.5" y2="240.9" stroke="#3a2606" stroke-width="0.6" />
<line x1="758.9" y1="225.6" x2="767.6" y2="224.1" stroke="#b06a16" stroke-width="0.6" />
<line x1="759.8" y1="231.3" x2="768.5" y2="229.7" stroke="#b06a16" stroke-width="0.6" />
<line x1="760.7" y1="237.0" x2="769.5" y2="235.4" stroke="#b06a16" stroke-width="0.6" />
<line x1="760.9" y1="243.3" x2="771.3" y2="241.4" stroke="#d07818" stroke-width="0.9" />
<polygon points="761.9,244.2 770.6,242.6 772.4,253.4 763.6,255.0" fill="#7a5612" />
<line x1="763.6" y1="243.9" x2="765.4" y2="254.7" stroke="#3a2606" stroke-width="0.6" />
<line x1="766.2" y1="243.4" x2="768.0" y2="254.2" stroke="#3a2606" stroke-width="0.6" />
<line x1="768.9" y1="242.9" x2="770.6" y2="253.7" stroke="#3a2606" stroke-width="0.6" />
<line x1="762.6" y1="248.8" x2="771.4" y2="247.2" stroke="#b06a16" stroke-width="0.6" />
<line x1="763.5" y1="254.5" x2="772.3" y2="252.9" stroke="#b06a16" stroke-width="0.6" />
<line x1="762.9" y1="256.2" x2="773.4" y2="254.3" stroke="#d07818" stroke-width="0.9" />
<polygon points="764.0,257.0 772.7,255.5 775.3,271.5 766.5,273.0" fill="#6a4a10" />
<line x1="765.7" y1="256.7" x2="768.3" y2="272.7" stroke="#3a2606" stroke-width="0.6" />
<line x1="768.3" y1="256.3" x2="770.9" y2="272.2" stroke="#3a2606" stroke-width="0.6" />
<line x1="770.9" y1="255.8" x2="773.5" y2="271.8" stroke="#3a2606" stroke-width="0.6" />
<line x1="764.7" y1="261.7" x2="773.4" y2="260.1" stroke="#b06a16" stroke-width="0.6" />
<line x1="765.6" y1="267.4" x2="774.3" y2="265.8" stroke="#b06a16" stroke-width="0.6" />
<line x1="765.9" y1="274.2" x2="776.3" y2="272.3" stroke="#d07818" stroke-width="0.9" />
<polygon points="766.9,275.1 775.6,273.5 779.0,294.7 770.3,296.2" fill="#7a5612" />
<line x1="768.6" y1="274.8" x2="772.0" y2="295.9" stroke="#3a2606" stroke-width="0.6" />
<line x1="771.2" y1="274.3" x2="774.6" y2="295.4" stroke="#3a2606" stroke-width="0.6" />
<line x1="773.8" y1="273.8" x2="777.2" y2="295.0" stroke="#3a2606" stroke-width="0.6" />
<line x1="767.6" y1="279.7" x2="776.3" y2="278.2" stroke="#b06a16" stroke-width="0.6" />
<line x1="768.5" y1="285.4" x2="777.2" y2="283.8" stroke="#b06a16" stroke-width="0.6" />
<line x1="769.4" y1="291.1" x2="778.2" y2="289.5" stroke="#b06a16" stroke-width="0.6" />
<line x1="769.6" y1="297.4" x2="780.0" y2="295.5" stroke="#d07818" stroke-width="0.9" />
<polygon points="770.6,298.3 779.3,296.7 781.1,307.5 772.3,309.1" fill="#9a7018" />
<line x1="772.4" y1="298.0" x2="774.1" y2="308.8" stroke="#3a2606" stroke-width="0.6" />
<line x1="775.0" y1="297.5" x2="776.7" y2="308.3" stroke="#3a2606" stroke-width="0.6" />
<line x1="777.6" y1="297.0" x2="779.3" y2="307.8" stroke="#3a2606" stroke-width="0.6" />
<line x1="771.3" y1="302.9" x2="780.1" y2="301.4" stroke="#b06a16" stroke-width="0.6" />
<line x1="772.3" y1="308.6" x2="781.0" y2="307.0" stroke="#b06a16" stroke-width="0.6" />
<line x1="771.7" y1="310.3" x2="782.1" y2="308.4" stroke="#d07818" stroke-width="0.9" />
<polygon points="772.7,311.2 781.4,309.6 784.8,330.7 776.1,332.3" fill="#a47c1c" />
<line x1="774.4" y1="310.8" x2="777.8" y2="332.0" stroke="#3a2606" stroke-width="0.6" />
<line x1="777.0" y1="310.4" x2="780.4" y2="331.5" stroke="#3a2606" stroke-width="0.6" />
<line x1="779.6" y1="309.9" x2="783.0" y2="331.0" stroke="#3a2606" stroke-width="0.6" />
<line x1="773.4" y1="315.8" x2="782.1" y2="314.2" stroke="#b06a16" stroke-width="0.6" />
<line x1="774.3" y1="321.5" x2="783.0" y2="319.9" stroke="#b06a16" stroke-width="0.6" />
<line x1="775.2" y1="327.1" x2="784.0" y2="325.6" stroke="#b06a16" stroke-width="0.6" />
<line x1="775.4" y1="333.5" x2="785.8" y2="331.6" stroke="#d07818" stroke-width="0.9" />
<polygon points="776.4,334.4 785.1,332.8 788.5,353.9 779.8,355.5" fill="#6a4a10" />
<line x1="778.2" y1="334.0" x2="781.6" y2="355.2" stroke="#3a2606" stroke-width="0.6" />
<line x1="780.8" y1="333.6" x2="784.2" y2="354.7" stroke="#3a2606" stroke-width="0.6" />
<line x1="783.4" y1="333.1" x2="786.8" y2="354.2" stroke="#3a2606" stroke-width="0.6" />
<line x1="777.2" y1="339.0" x2="785.9" y2="337.4" stroke="#b06a16" stroke-width="0.6" />
<line x1="778.1" y1="344.7" x2="786.8" y2="343.1" stroke="#b06a16" stroke-width="0.6" />
<line x1="779.0" y1="350.3" x2="787.7" y2="348.8" stroke="#b06a16" stroke-width="0.6" />
<line x1="779.1" y1="356.7" x2="789.5" y2="354.8" stroke="#d07818" stroke-width="0.9" />
<polygon points="780.1,357.5 788.8,356.0 791.4,371.9 782.7,373.5" fill="#6a4a10" />
<line x1="781.9" y1="357.2" x2="784.5" y2="373.2" stroke="#3a2606" stroke-width="0.6" />
<line x1="784.5" y1="356.8" x2="787.1" y2="372.7" stroke="#3a2606" stroke-width="0.6" />
<line x1="787.1" y1="356.3" x2="789.7" y2="372.3" stroke="#3a2606" stroke-width="0.6" />
<line x1="780.9" y1="362.2" x2="789.6" y2="360.6" stroke="#b06a16" stroke-width="0.6" />
<line x1="781.8" y1="367.8" x2="790.5" y2="366.3" stroke="#b06a16" stroke-width="0.6" />
<line x1="782.0" y1="374.7" x2="792.4" y2="372.8" stroke="#d07818" stroke-width="0.9" />
<polygon points="783.1,375.6 791.7,374.0 795.1,395.1 786.5,396.7" fill="#9a7018" />
<line x1="784.8" y1="375.3" x2="788.2" y2="396.4" stroke="#3a2606" stroke-width="0.6" />
<line x1="787.4" y1="374.8" x2="790.8" y2="395.9" stroke="#3a2606" stroke-width="0.6" />
<line x1="790.0" y1="374.3" x2="793.4" y2="395.4" stroke="#3a2606" stroke-width="0.6" />
<line x1="783.8" y1="380.2" x2="792.5" y2="378.6" stroke="#b06a16" stroke-width="0.6" />
<line x1="784.7" y1="385.9" x2="793.4" y2="384.3" stroke="#b06a16" stroke-width="0.6" />
<line x1="785.6" y1="391.6" x2="794.3" y2="390.0" stroke="#b06a16" stroke-width="0.6" />
<line x1="785.8" y1="397.9" x2="796.1" y2="396.0" stroke="#d07818" stroke-width="0.9" />
<polygon points="786.8,398.8 795.5,397.2 797.2,408.0 788.5,409.6" fill="#6a4a10" />
<line x1="788.5" y1="398.5" x2="790.3" y2="409.3" stroke="#3a2606" stroke-width="0.6" />
<line x1="791.1" y1="398.0" x2="792.9" y2="408.8" stroke="#3a2606" stroke-width="0.6" />
<line x1="793.7" y1="397.5" x2="795.5" y2="408.3" stroke="#3a2606" stroke-width="0.6" />
<line x1="787.5" y1="403.4" x2="796.2" y2="401.8" stroke="#b06a16" stroke-width="0.6" />
<line x1="788.4" y1="409.1" x2="797.1" y2="407.5" stroke="#b06a16" stroke-width="0.6" />
<line x1="787.9" y1="410.8" x2="798.2" y2="408.9" stroke="#d07818" stroke-width="0.9" />
<polygon points="788.9,411.7 797.5,410.1 800.1,426.0 791.4,427.6" fill="#8a6414" />
<line x1="790.6" y1="411.3" x2="793.2" y2="427.3" stroke="#3a2606" stroke-width="0.6" />
<line x1="793.2" y1="410.9" x2="795.8" y2="426.8" stroke="#3a2606" stroke-width="0.6" />
<line x1="795.8" y1="410.4" x2="798.4" y2="426.4" stroke="#3a2606" stroke-width="0.6" />
<line x1="789.6" y1="416.3" x2="798.3" y2="414.7" stroke="#b06a16" stroke-width="0.6" />
<line x1="790.5" y1="422.0" x2="799.2" y2="420.4" stroke="#b06a16" stroke-width="0.6" />
<line x1="790.8" y1="428.8" x2="801.1" y2="426.9" stroke="#d07818" stroke-width="0.9" />
<polygon points="791.8,429.7 800.4,428.1 802.6,441.5 793.9,443.1" fill="#7a5612" />
<line x1="793.5" y1="429.4" x2="795.7" y2="442.8" stroke="#3a2606" stroke-width="0.6" />
<line x1="796.1" y1="428.9" x2="798.3" y2="442.3" stroke="#3a2606" stroke-width="0.6" />
<line x1="798.7" y1="428.4" x2="800.8" y2="441.8" stroke="#3a2606" stroke-width="0.6" />
<line x1="792.5" y1="434.3" x2="801.2" y2="432.7" stroke="#b06a16" stroke-width="0.6" />
<line x1="793.4" y1="440.0" x2="802.1" y2="438.4" stroke="#b06a16" stroke-width="0.6" />
<line x1="793.3" y1="444.3" x2="803.6" y2="442.4" stroke="#d07818" stroke-width="0.9" />
<polygon points="764.9,195.9 773.9,194.3 776.5,210.3 767.4,211.9" fill="#7a5612" />
<line x1="766.7" y1="195.6" x2="769.3" y2="211.6" stroke="#3a2606" stroke-width="0.6" />
<line x1="769.4" y1="195.1" x2="771.9" y2="211.1" stroke="#3a2606" stroke-width="0.6" />
<line x1="772.1" y1="194.7" x2="774.6" y2="210.6" stroke="#3a2606" stroke-width="0.6" />
<line x1="765.6" y1="200.6" x2="774.6" y2="199.0" stroke="#b06a16" stroke-width="0.6" />
<line x1="766.5" y1="206.2" x2="775.5" y2="204.6" stroke="#b06a16" stroke-width="0.6" />
<line x1="766.7" y1="213.1" x2="777.5" y2="211.2" stroke="#d07818" stroke-width="0.9" />
<polygon points="767.8,214.0 776.8,212.4 778.5,223.2 769.5,224.8" fill="#9a7018" />
<line x1="769.6" y1="213.6" x2="771.3" y2="224.5" stroke="#3a2606" stroke-width="0.6" />
<line x1="772.3" y1="213.2" x2="774.0" y2="224.0" stroke="#3a2606" stroke-width="0.6" />
<line x1="775.0" y1="212.7" x2="776.7" y2="223.5" stroke="#3a2606" stroke-width="0.6" />
<line x1="768.5" y1="218.6" x2="777.5" y2="217.0" stroke="#b06a16" stroke-width="0.6" />
<line x1="769.4" y1="224.3" x2="778.4" y2="222.7" stroke="#b06a16" stroke-width="0.6" />
<line x1="768.8" y1="226.0" x2="779.5" y2="224.1" stroke="#d07818" stroke-width="0.9" />
<polygon points="769.8,226.8 778.9,225.2 780.6,236.1 771.6,237.7" fill="#8a6414" />
<line x1="771.7" y1="226.5" x2="773.4" y2="237.3" stroke="#3a2606" stroke-width="0.6" />
<line x1="774.3" y1="226.0" x2="776.1" y2="236.9" stroke="#3a2606" stroke-width="0.6" />
<line x1="777.0" y1="225.6" x2="778.8" y2="236.4" stroke="#3a2606" stroke-width="0.6" />
<line x1="770.6" y1="231.5" x2="779.6" y2="229.9" stroke="#b06a16" stroke-width="0.6" />
<line x1="771.5" y1="237.2" x2="780.5" y2="235.5" stroke="#b06a16" stroke-width="0.6" />
<line x1="770.9" y1="238.9" x2="781.6" y2="236.9" stroke="#d07818" stroke-width="0.9" />
<polygon points="771.9,239.7 780.9,238.1 783.5,254.1 774.5,255.7" fill="#6a4a10" />
<line x1="773.7" y1="239.4" x2="776.3" y2="255.4" stroke="#3a2606" stroke-width="0.6" />
<line x1="776.4" y1="238.9" x2="779.0" y2="254.9" stroke="#3a2606" stroke-width="0.6" />
<line x1="779.1" y1="238.5" x2="781.6" y2="254.4" stroke="#3a2606" stroke-width="0.6" />
<line x1="772.6" y1="244.4" x2="781.7" y2="242.8" stroke="#b06a16" stroke-width="0.6" />
<line x1="773.6" y1="250.0" x2="782.6" y2="248.4" stroke="#b06a16" stroke-width="0.6" />
<line x1="773.8" y1="256.9" x2="784.5" y2="255.0" stroke="#d07818" stroke-width="0.9" />
<polygon points="774.8,257.8 783.8,256.2 786.4,272.1 777.4,273.7" fill="#7a5612" />
<line x1="776.6" y1="257.4" x2="779.2" y2="273.4" stroke="#3a2606" stroke-width="0.6" />
<line x1="779.3" y1="257.0" x2="781.9" y2="272.9" stroke="#3a2606" stroke-width="0.6" />
<line x1="782.0" y1="256.5" x2="784.5" y2="272.5" stroke="#3a2606" stroke-width="0.6" />
<line x1="775.5" y1="262.4" x2="784.6" y2="260.8" stroke="#b06a16" stroke-width="0.6" />
<line x1="776.4" y1="268.1" x2="785.5" y2="266.5" stroke="#b06a16" stroke-width="0.6" />
<line x1="776.7" y1="274.9" x2="787.4" y2="273.0" stroke="#d07818" stroke-width="0.9" />
<polygon points="777.7,275.8 786.7,274.2 788.4,285.0 779.4,286.6" fill="#6a4a10" />
<line x1="779.5" y1="275.5" x2="781.3" y2="286.3" stroke="#3a2606" stroke-width="0.6" />
<line x1="782.2" y1="275.0" x2="783.9" y2="285.8" stroke="#3a2606" stroke-width="0.6" />
<line x1="784.9" y1="274.5" x2="786.6" y2="285.3" stroke="#3a2606" stroke-width="0.6" />
<line x1="778.4" y1="280.4" x2="787.4" y2="278.8" stroke="#b06a16" stroke-width="0.6" />
<line x1="779.3" y1="286.1" x2="788.4" y2="284.5" stroke="#b06a16" stroke-width="0.6" />
<line x1="778.8" y1="287.8" x2="789.4" y2="285.9" stroke="#d07818" stroke-width="0.9" />
<polygon points="779.8,288.7 788.8,287.1 791.3,303.0 782.3,304.7" fill="#a47c1c" />
<line x1="781.6" y1="288.4" x2="784.2" y2="304.3" stroke="#3a2606" stroke-width="0.6" />
<line x1="784.3" y1="287.9" x2="786.8" y2="303.8" stroke="#3a2606" stroke-width="0.6" />
<line x1="786.9" y1="287.4" x2="789.5" y2="303.4" stroke="#3a2606" stroke-width="0.6" />
<line x1="780.5" y1="293.3" x2="789.5" y2="291.7" stroke="#b06a16" stroke-width="0.6" />
<line x1="781.4" y1="299.0" x2="790.4" y2="297.4" stroke="#b06a16" stroke-width="0.6" />
<line x1="781.7" y1="305.8" x2="792.3" y2="303.9" stroke="#d07818" stroke-width="0.9" />
<polygon points="782.7,306.7 791.7,305.1 794.2,321.1 785.2,322.7" fill="#8a6414" />
<line x1="784.5" y1="306.4" x2="787.1" y2="322.4" stroke="#3a2606" stroke-width="0.6" />
<line x1="787.2" y1="305.9" x2="789.7" y2="321.9" stroke="#3a2606" stroke-width="0.6" />
<line x1="789.8" y1="305.4" x2="792.4" y2="321.4" stroke="#3a2606" stroke-width="0.6" />
<line x1="783.4" y1="311.4" x2="792.4" y2="309.7" stroke="#b06a16" stroke-width="0.6" />
<line x1="784.3" y1="317.0" x2="793.3" y2="315.4" stroke="#b06a16" stroke-width="0.6" />
<line x1="784.6" y1="323.9" x2="795.2" y2="322.0" stroke="#d07818" stroke-width="0.9" />
<polygon points="785.6,324.8 794.5,323.1 797.1,339.1 788.1,340.7" fill="#a47c1c" />
<line x1="787.4" y1="324.4" x2="790.0" y2="340.4" stroke="#3a2606" stroke-width="0.6" />
<line x1="790.1" y1="323.9" x2="792.6" y2="339.9" stroke="#3a2606" stroke-width="0.6" />
<line x1="792.7" y1="323.5" x2="795.3" y2="339.4" stroke="#3a2606" stroke-width="0.6" />
<line x1="786.3" y1="329.4" x2="795.3" y2="327.8" stroke="#b06a16" stroke-width="0.6" />
<line x1="787.2" y1="335.1" x2="796.2" y2="333.4" stroke="#b06a16" stroke-width="0.6" />
<line x1="787.4" y1="341.9" x2="798.1" y2="340.0" stroke="#d07818" stroke-width="0.9" />
<polygon points="788.5,342.8 797.4,341.2 800.0,357.1 791.0,358.8" fill="#6a4a10" />
<line x1="790.3" y1="342.5" x2="792.8" y2="358.4" stroke="#3a2606" stroke-width="0.6" />
<line x1="792.9" y1="342.0" x2="795.5" y2="357.9" stroke="#3a2606" stroke-width="0.6" />
<line x1="795.6" y1="341.5" x2="798.2" y2="357.5" stroke="#3a2606" stroke-width="0.6" />
<line x1="789.2" y1="347.4" x2="798.2" y2="345.8" stroke="#b06a16" stroke-width="0.6" />
<line x1="790.1" y1="353.1" x2="799.1" y2="351.5" stroke="#b06a16" stroke-width="0.6" />
<line x1="790.3" y1="359.9" x2="801.0" y2="358.0" stroke="#d07818" stroke-width="0.9" />
<polygon points="791.4,360.8 800.3,359.2 802.9,375.2 793.9,376.8" fill="#6a4a10" />
<line x1="793.2" y1="360.5" x2="795.7" y2="376.5" stroke="#3a2606" stroke-width="0.6" />
<line x1="795.8" y1="360.0" x2="798.4" y2="376.0" stroke="#3a2606" stroke-width="0.6" />
<line x1="798.5" y1="359.5" x2="801.1" y2="375.5" stroke="#3a2606" stroke-width="0.6" />
<line x1="792.1" y1="365.5" x2="801.1" y2="363.8" stroke="#b06a16" stroke-width="0.6" />
<line x1="793.0" y1="371.1" x2="802.0" y2="369.5" stroke="#b06a16" stroke-width="0.6" />
<line x1="793.2" y1="378.0" x2="803.9" y2="376.0" stroke="#d07818" stroke-width="0.9" />
<polygon points="794.3,378.9 803.2,377.2 805.0,388.0 796.0,389.7" fill="#8a6414" />
<line x1="796.1" y1="378.5" x2="797.8" y2="389.3" stroke="#3a2606" stroke-width="0.6" />
<line x1="798.7" y1="378.0" x2="800.5" y2="388.9" stroke="#3a2606" stroke-width="0.6" />
<line x1="801.4" y1="377.6" x2="803.1" y2="388.4" stroke="#3a2606" stroke-width="0.6" />
<line x1="795.0" y1="383.5" x2="804.0" y2="381.9" stroke="#b06a16" stroke-width="0.6" />
<line x1="795.9" y1="389.2" x2="804.9" y2="387.5" stroke="#b06a16" stroke-width="0.6" />
<line x1="795.3" y1="390.9" x2="806.0" y2="388.9" stroke="#d07818" stroke-width="0.9" />
<polygon points="796.3,391.7 805.3,390.1 807.0,400.9 798.1,402.6" fill="#8a6414" />
<line x1="798.1" y1="391.4" x2="799.9" y2="402.2" stroke="#3a2606" stroke-width="0.6" />
<line x1="800.8" y1="390.9" x2="802.5" y2="401.7" stroke="#3a2606" stroke-width="0.6" />
<line x1="803.5" y1="390.4" x2="805.2" y2="401.3" stroke="#3a2606" stroke-width="0.6" />
<line x1="797.1" y1="396.4" x2="806.0" y2="394.7" stroke="#b06a16" stroke-width="0.6" />
<line x1="798.0" y1="402.0" x2="806.9" y2="400.4" stroke="#b06a16" stroke-width="0.6" />
<line x1="797.4" y1="403.7" x2="808.0" y2="401.8" stroke="#d07818" stroke-width="0.9" />
<polygon points="798.4,404.6 807.4,403.0 809.1,413.8 800.1,415.4" fill="#8a6414" />
<line x1="800.2" y1="404.3" x2="802.0" y2="415.1" stroke="#3a2606" stroke-width="0.6" />
<line x1="802.9" y1="403.8" x2="804.6" y2="414.6" stroke="#3a2606" stroke-width="0.6" />
<line x1="805.5" y1="403.3" x2="807.3" y2="414.1" stroke="#3a2606" stroke-width="0.6" />
<line x1="799.1" y1="409.3" x2="808.1" y2="407.6" stroke="#b06a16" stroke-width="0.6" />
<line x1="800.1" y1="414.9" x2="809.0" y2="413.3" stroke="#b06a16" stroke-width="0.6" />
<line x1="799.5" y1="416.6" x2="810.1" y2="414.7" stroke="#d07818" stroke-width="0.9" />
<polygon points="800.5,417.5 809.4,415.9 812.8,437.0 803.9,438.6" fill="#8a6414" />
<line x1="802.3" y1="417.2" x2="805.7" y2="438.3" stroke="#3a2606" stroke-width="0.6" />
<line x1="804.9" y1="416.7" x2="808.3" y2="437.8" stroke="#3a2606" stroke-width="0.6" />
<line x1="807.6" y1="416.2" x2="811.0" y2="437.3" stroke="#3a2606" stroke-width="0.6" />
<line x1="801.2" y1="422.1" x2="810.2" y2="420.5" stroke="#b06a16" stroke-width="0.6" />
<line x1="802.1" y1="427.8" x2="811.1" y2="426.2" stroke="#b06a16" stroke-width="0.6" />
<line x1="803.0" y1="433.5" x2="812.0" y2="431.8" stroke="#b06a16" stroke-width="0.6" />
<line x1="803.2" y1="439.8" x2="813.8" y2="437.9" stroke="#d07818" stroke-width="0.9" />
<polygon points="804.2,440.7 813.1,439.1 813.2,439.6 804.3,441.2" fill="#6a4a10" />
<line x1="806.0" y1="440.4" x2="806.1" y2="440.9" stroke="#3a2606" stroke-width="0.6" />
<line x1="808.7" y1="439.9" x2="808.7" y2="440.4" stroke="#3a2606" stroke-width="0.6" />
<line x1="811.3" y1="439.4" x2="811.4" y2="439.9" stroke="#3a2606" stroke-width="0.6" />
<line x1="803.6" y1="442.4" x2="814.2" y2="440.4" stroke="#d07818" stroke-width="0.9" />
<polygon points="775.6,194.0 783.8,192.6 787.2,213.7 779.0,215.2" fill="#8a6414" />
<line x1="777.2" y1="193.7" x2="780.6" y2="214.9" stroke="#3a2606" stroke-width="0.6" />
<line x1="779.7" y1="193.3" x2="783.1" y2="214.4" stroke="#3a2606" stroke-width="0.6" />
<line x1="782.2" y1="192.9" x2="785.5" y2="214.0" stroke="#3a2606" stroke-width="0.6" />
<line x1="776.3" y1="198.7" x2="784.5" y2="197.2" stroke="#b06a16" stroke-width="0.6" />
<line x1="777.2" y1="204.3" x2="785.4" y2="202.9" stroke="#b06a16" stroke-width="0.6" />
<line x1="778.1" y1="210.0" x2="786.3" y2="208.6" stroke="#b06a16" stroke-width="0.6" />
<line x1="778.3" y1="216.3" x2="788.2" y2="214.6" stroke="#d07818" stroke-width="0.9" />
<polygon points="779.3,217.2 787.5,215.8 790.0,231.7 781.9,233.2" fill="#9a7018" />
<line x1="780.9" y1="216.9" x2="783.5" y2="232.9" stroke="#3a2606" stroke-width="0.6" />
<line x1="783.4" y1="216.5" x2="786.0" y2="232.5" stroke="#3a2606" stroke-width="0.6" />
<line x1="785.9" y1="216.1" x2="788.4" y2="232.0" stroke="#3a2606" stroke-width="0.6" />
<line x1="780.0" y1="221.9" x2="788.2" y2="220.4" stroke="#b06a16" stroke-width="0.6" />
<line x1="781.0" y1="227.5" x2="789.1" y2="226.1" stroke="#b06a16" stroke-width="0.6" />
<line x1="781.2" y1="234.4" x2="791.1" y2="232.6" stroke="#d07818" stroke-width="0.9" />
<polygon points="782.2,235.2 790.4,233.8 792.1,244.6 783.9,246.1" fill="#8a6414" />
<line x1="783.8" y1="235.0" x2="785.5" y2="245.8" stroke="#3a2606" stroke-width="0.6" />
<line x1="786.3" y1="234.5" x2="788.0" y2="245.3" stroke="#3a2606" stroke-width="0.6" />
<line x1="788.8" y1="234.1" x2="790.5" y2="244.9" stroke="#3a2606" stroke-width="0.6" />
<line x1="782.9" y1="239.9" x2="791.1" y2="238.4" stroke="#b06a16" stroke-width="0.6" />
<line x1="783.8" y1="245.6" x2="792.0" y2="244.1" stroke="#b06a16" stroke-width="0.6" />
<line x1="783.2" y1="247.2" x2="793.1" y2="245.5" stroke="#d07818" stroke-width="0.9" />
<polygon points="784.3,248.1 792.4,246.7 795.0,262.6 786.8,264.1" fill="#a47c1c" />
<line x1="785.9" y1="247.8" x2="788.4" y2="263.8" stroke="#3a2606" stroke-width="0.6" />
<line x1="788.3" y1="247.4" x2="790.9" y2="263.4" stroke="#3a2606" stroke-width="0.6" />
<line x1="790.8" y1="247.0" x2="793.4" y2="262.9" stroke="#3a2606" stroke-width="0.6" />
<line x1="785.0" y1="252.8" x2="793.2" y2="251.3" stroke="#b06a16" stroke-width="0.6" />
<line x1="785.9" y1="258.4" x2="794.1" y2="257.0" stroke="#b06a16" stroke-width="0.6" />
<line x1="786.1" y1="265.3" x2="796.0" y2="263.5" stroke="#d07818" stroke-width="0.9" />
<polygon points="787.1,266.2 795.3,264.7 797.9,280.7 789.7,282.1" fill="#a47c1c" />
<line x1="788.8" y1="265.9" x2="791.3" y2="281.8" stroke="#3a2606" stroke-width="0.6" />
<line x1="791.2" y1="265.4" x2="793.8" y2="281.4" stroke="#3a2606" stroke-width="0.6" />
<line x1="793.7" y1="265.0" x2="796.3" y2="281.0" stroke="#3a2606" stroke-width="0.6" />
<line x1="787.9" y1="270.8" x2="796.1" y2="269.3" stroke="#b06a16" stroke-width="0.6" />
<line x1="788.8" y1="276.5" x2="797.0" y2="275.0" stroke="#b06a16" stroke-width="0.6" />
<line x1="789.0" y1="283.3" x2="798.9" y2="281.5" stroke="#d07818" stroke-width="0.9" />
<polygon points="790.0,284.2 798.2,282.7 801.6,303.9 793.4,305.3" fill="#9a7018" />
<line x1="791.7" y1="283.9" x2="795.0" y2="305.0" stroke="#3a2606" stroke-width="0.6" />
<line x1="794.1" y1="283.5" x2="797.5" y2="304.6" stroke="#3a2606" stroke-width="0.6" />
<line x1="796.6" y1="283.0" x2="800.0" y2="304.1" stroke="#3a2606" stroke-width="0.6" />
<line x1="790.8" y1="288.8" x2="798.9" y2="287.4" stroke="#b06a16" stroke-width="0.6" />
<line x1="791.7" y1="294.5" x2="799.8" y2="293.0" stroke="#b06a16" stroke-width="0.6" />
<line x1="792.6" y1="300.2" x2="800.8" y2="298.7" stroke="#b06a16" stroke-width="0.6" />
<line x1="792.7" y1="306.5" x2="802.6" y2="304.7" stroke="#d07818" stroke-width="0.9" />
<polygon points="793.8,307.4 801.9,305.9 803.6,316.7 795.5,318.2" fill="#a47c1c" />
<line x1="795.4" y1="307.1" x2="797.1" y2="317.9" stroke="#3a2606" stroke-width="0.6" />
<line x1="797.8" y1="306.6" x2="799.6" y2="317.5" stroke="#3a2606" stroke-width="0.6" />
<line x1="800.3" y1="306.2" x2="802.0" y2="317.0" stroke="#3a2606" stroke-width="0.6" />
<line x1="794.5" y1="312.0" x2="802.7" y2="310.5" stroke="#b06a16" stroke-width="0.6" />
<line x1="795.4" y1="317.7" x2="803.6" y2="316.2" stroke="#b06a16" stroke-width="0.6" />
<line x1="794.8" y1="319.4" x2="804.6" y2="317.6" stroke="#d07818" stroke-width="0.9" />
<polygon points="795.8,320.3 804.0,318.8 807.3,339.9 799.2,341.4" fill="#7a5612" />
<line x1="797.4" y1="320.0" x2="800.8" y2="341.1" stroke="#3a2606" stroke-width="0.6" />
<line x1="799.9" y1="319.5" x2="803.3" y2="340.6" stroke="#3a2606" stroke-width="0.6" />
<line x1="802.4" y1="319.1" x2="805.7" y2="340.2" stroke="#3a2606" stroke-width="0.6" />
<line x1="796.6" y1="324.9" x2="804.7" y2="323.4" stroke="#b06a16" stroke-width="0.6" />
<line x1="797.5" y1="330.6" x2="805.6" y2="329.1" stroke="#b06a16" stroke-width="0.6" />
<line x1="798.4" y1="336.2" x2="806.5" y2="334.8" stroke="#b06a16" stroke-width="0.6" />
<line x1="798.5" y1="342.6" x2="808.4" y2="340.8" stroke="#d07818" stroke-width="0.9" />
<polygon points="799.5,343.4 807.7,342.0 810.2,357.9 802.1,359.4" fill="#a47c1c" />
<line x1="801.2" y1="343.1" x2="803.7" y2="359.1" stroke="#3a2606" stroke-width="0.6" />
<line x1="803.6" y1="342.7" x2="806.2" y2="358.7" stroke="#3a2606" stroke-width="0.6" />
<line x1="806.1" y1="342.3" x2="808.6" y2="358.2" stroke="#3a2606" stroke-width="0.6" />
<line x1="800.3" y1="348.1" x2="808.4" y2="346.6" stroke="#b06a16" stroke-width="0.6" />
<line x1="801.2" y1="353.7" x2="809.3" y2="352.3" stroke="#b06a16" stroke-width="0.6" />
<line x1="801.4" y1="360.6" x2="811.2" y2="358.8" stroke="#d07818" stroke-width="0.9" />
<polygon points="802.4,361.5 810.6,360.0 813.1,376.0 805.0,377.4" fill="#6a4a10" />
<line x1="804.0" y1="361.2" x2="806.6" y2="377.1" stroke="#3a2606" stroke-width="0.6" />
<line x1="806.5" y1="360.7" x2="809.1" y2="376.7" stroke="#3a2606" stroke-width="0.6" />
<line x1="808.9" y1="360.3" x2="811.5" y2="376.3" stroke="#3a2606" stroke-width="0.6" />
<line x1="803.2" y1="366.1" x2="811.3" y2="364.6" stroke="#b06a16" stroke-width="0.6" />
<line x1="804.1" y1="371.8" x2="812.2" y2="370.3" stroke="#b06a16" stroke-width="0.6" />
<line x1="804.3" y1="378.6" x2="814.1" y2="376.8" stroke="#d07818" stroke-width="0.9" />
<polygon points="805.3,379.5 813.4,378.0 816.0,394.0 807.9,395.5" fill="#6a4a10" />
<line x1="806.9" y1="379.2" x2="809.5" y2="395.2" stroke="#3a2606" stroke-width="0.6" />
<line x1="809.4" y1="378.8" x2="811.9" y2="394.7" stroke="#3a2606" stroke-width="0.6" />
<line x1="811.8" y1="378.3" x2="814.4" y2="394.3" stroke="#3a2606" stroke-width="0.6" />
<line x1="806.1" y1="384.1" x2="814.2" y2="382.7" stroke="#b06a16" stroke-width="0.6" />
<line x1="807.0" y1="389.8" x2="815.1" y2="388.3" stroke="#b06a16" stroke-width="0.6" />
<line x1="807.2" y1="396.7" x2="817.0" y2="394.9" stroke="#d07818" stroke-width="0.9" />
<polygon points="808.2,397.5 816.3,396.1 818.1,406.9 809.9,408.4" fill="#6a4a10" />
<line x1="809.8" y1="397.2" x2="811.6" y2="408.1" stroke="#3a2606" stroke-width="0.6" />
<line x1="812.3" y1="396.8" x2="814.0" y2="407.6" stroke="#3a2606" stroke-width="0.6" />
<line x1="814.7" y1="396.4" x2="816.5" y2="407.2" stroke="#3a2606" stroke-width="0.6" />
<line x1="809.0" y1="402.2" x2="817.1" y2="400.7" stroke="#b06a16" stroke-width="0.6" />
<line x1="809.9" y1="407.8" x2="818.0" y2="406.4" stroke="#b06a16" stroke-width="0.6" />
<line x1="809.3" y1="409.5" x2="819.1" y2="407.8" stroke="#d07818" stroke-width="0.9" />
<polygon points="810.3,410.4 818.4,408.9 821.8,430.1 813.7,431.5" fill="#6a4a10" />
<line x1="811.9" y1="410.1" x2="815.3" y2="431.2" stroke="#3a2606" stroke-width="0.6" />
<line x1="814.3" y1="409.7" x2="817.7" y2="430.8" stroke="#3a2606" stroke-width="0.6" />
<line x1="816.8" y1="409.2" x2="820.2" y2="430.4" stroke="#3a2606" stroke-width="0.6" />
<line x1="811.0" y1="415.1" x2="819.1" y2="413.6" stroke="#b06a16" stroke-width="0.6" />
<line x1="811.9" y1="420.7" x2="820.0" y2="419.2" stroke="#b06a16" stroke-width="0.6" />
<line x1="812.8" y1="426.4" x2="820.9" y2="424.9" stroke="#b06a16" stroke-width="0.6" />
<line x1="813.0" y1="432.7" x2="822.8" y2="430.9" stroke="#d07818" stroke-width="0.9" />
<polygon points="814.0,433.6 822.1,432.1 823.0,437.8 814.9,439.3" fill="#8a6414" />
<line x1="815.6" y1="433.3" x2="816.5" y2="439.0" stroke="#3a2606" stroke-width="0.6" />
<line x1="818.0" y1="432.9" x2="819.0" y2="438.5" stroke="#3a2606" stroke-width="0.6" />
<line x1="820.5" y1="432.4" x2="821.4" y2="438.1" stroke="#3a2606" stroke-width="0.6" />
<line x1="814.7" y1="438.2" x2="822.8" y2="436.8" stroke="#b06a16" stroke-width="0.6" />
<line x1="814.2" y1="440.4" x2="824.0" y2="438.7" stroke="#d07818" stroke-width="0.9" />
<polygon points="785.5,192.3 793.7,190.8 795.4,201.6 787.2,203.1" fill="#8a6414" />
<line x1="787.1" y1="192.0" x2="788.8" y2="202.8" stroke="#3a2606" stroke-width="0.6" />
<line x1="789.6" y1="191.6" x2="791.3" y2="202.4" stroke="#3a2606" stroke-width="0.6" />
<line x1="792.0" y1="191.1" x2="793.8" y2="201.9" stroke="#3a2606" stroke-width="0.6" />
<line x1="786.2" y1="196.9" x2="794.4" y2="195.5" stroke="#b06a16" stroke-width="0.6" />
<line x1="787.1" y1="202.6" x2="795.3" y2="201.1" stroke="#b06a16" stroke-width="0.6" />
<line x1="786.5" y1="204.3" x2="796.4" y2="202.5" stroke="#d07818" stroke-width="0.9" />
<polygon points="787.5,205.2 795.7,203.7 798.3,219.7 790.1,221.1" fill="#8a6414" />
<line x1="789.2" y1="204.9" x2="791.7" y2="220.8" stroke="#3a2606" stroke-width="0.6" />
<line x1="791.6" y1="204.4" x2="794.2" y2="220.4" stroke="#3a2606" stroke-width="0.6" />
<line x1="794.1" y1="204.0" x2="796.6" y2="220.0" stroke="#3a2606" stroke-width="0.6" />
<line x1="788.3" y1="209.8" x2="796.5" y2="208.3" stroke="#b06a16" stroke-width="0.6" />
<line x1="789.2" y1="215.5" x2="797.4" y2="214.0" stroke="#b06a16" stroke-width="0.6" />
<line x1="789.4" y1="222.3" x2="799.3" y2="220.6" stroke="#d07818" stroke-width="0.9" />
<polygon points="790.4,223.2 798.6,221.7 800.3,232.6 792.1,234.0" fill="#9a7018" />
<line x1="792.0" y1="222.9" x2="793.8" y2="233.7" stroke="#3a2606" stroke-width="0.6" />
<line x1="794.5" y1="222.5" x2="796.2" y2="233.3" stroke="#3a2606" stroke-width="0.6" />
<line x1="797.0" y1="222.0" x2="798.7" y2="232.8" stroke="#3a2606" stroke-width="0.6" />
<line x1="791.2" y1="227.8" x2="799.3" y2="226.4" stroke="#b06a16" stroke-width="0.6" />
<line x1="792.1" y1="233.5" x2="800.2" y2="232.0" stroke="#b06a16" stroke-width="0.6" />
<line x1="791.5" y1="235.2" x2="801.3" y2="233.4" stroke="#d07818" stroke-width="0.9" />
<polygon points="792.5,236.1 800.7,234.6 804.0,255.7 795.9,257.2" fill="#7a5612" />
<line x1="794.1" y1="235.8" x2="797.5" y2="256.9" stroke="#3a2606" stroke-width="0.6" />
<line x1="796.6" y1="235.3" x2="799.9" y2="256.5" stroke="#3a2606" stroke-width="0.6" />
<line x1="799.0" y1="234.9" x2="802.4" y2="256.0" stroke="#3a2606" stroke-width="0.6" />
<line x1="793.2" y1="240.7" x2="801.4" y2="239.2" stroke="#b06a16" stroke-width="0.6" />
<line x1="794.1" y1="246.4" x2="802.3" y2="244.9" stroke="#b06a16" stroke-width="0.6" />
<line x1="795.0" y1="252.0" x2="803.2" y2="250.6" stroke="#b06a16" stroke-width="0.6" />
<line x1="795.2" y1="258.4" x2="805.0" y2="256.6" stroke="#d07818" stroke-width="0.9" />
<polygon points="796.2,259.2 804.3,257.8 806.1,268.6 797.9,270.1" fill="#7a5612" />
<line x1="797.8" y1="259.0" x2="799.5" y2="269.8" stroke="#3a2606" stroke-width="0.6" />
<line x1="800.3" y1="258.5" x2="802.0" y2="269.3" stroke="#3a2606" stroke-width="0.6" />
<line x1="802.7" y1="258.1" x2="804.5" y2="268.9" stroke="#3a2606" stroke-width="0.6" />
<line x1="796.9" y1="263.9" x2="805.1" y2="262.4" stroke="#b06a16" stroke-width="0.6" />
<line x1="797.8" y1="269.6" x2="806.0" y2="268.1" stroke="#b06a16" stroke-width="0.6" />
<line x1="797.2" y1="271.2" x2="807.1" y2="269.5" stroke="#d07818" stroke-width="0.9" />
<polygon points="798.2,272.1 806.4,270.7 809.8,291.8 801.6,293.2" fill="#8a6414" />
<line x1="799.9" y1="271.8" x2="803.2" y2="293.0" stroke="#3a2606" stroke-width="0.6" />
<line x1="802.3" y1="271.4" x2="805.7" y2="292.5" stroke="#3a2606" stroke-width="0.6" />
<line x1="804.8" y1="271.0" x2="808.2" y2="292.1" stroke="#3a2606" stroke-width="0.6" />
<line x1="799.0" y1="276.8" x2="807.1" y2="275.3" stroke="#b06a16" stroke-width="0.6" />
<line x1="799.9" y1="282.4" x2="808.0" y2="281.0" stroke="#b06a16" stroke-width="0.6" />
<line x1="800.8" y1="288.1" x2="809.0" y2="286.6" stroke="#b06a16" stroke-width="0.6" />
<line x1="800.9" y1="294.4" x2="810.8" y2="292.7" stroke="#d07818" stroke-width="0.9" />
<polygon points="801.9,295.3 810.1,293.8 813.5,315.0 805.3,316.4" fill="#7a5612" />
<line x1="803.6" y1="295.0" x2="806.9" y2="316.1" stroke="#3a2606" stroke-width="0.6" />
<line x1="806.0" y1="294.6" x2="809.4" y2="315.7" stroke="#3a2606" stroke-width="0.6" />
<line x1="808.5" y1="294.1" x2="811.9" y2="315.3" stroke="#3a2606" stroke-width="0.6" />
<line x1="802.7" y1="299.9" x2="810.8" y2="298.5" stroke="#b06a16" stroke-width="0.6" />
<line x1="803.6" y1="305.6" x2="811.7" y2="304.1" stroke="#b06a16" stroke-width="0.6" />
<line x1="804.5" y1="311.3" x2="812.7" y2="309.8" stroke="#b06a16" stroke-width="0.6" />
<line x1="804.6" y1="317.6" x2="814.5" y2="315.8" stroke="#d07818" stroke-width="0.9" />
<polygon points="805.7,318.5 813.8,317.0 816.4,333.0 808.2,334.5" fill="#a47c1c" />
<line x1="807.3" y1="318.2" x2="809.8" y2="334.2" stroke="#3a2606" stroke-width="0.6" />
<line x1="809.7" y1="317.8" x2="812.3" y2="333.7" stroke="#3a2606" stroke-width="0.6" />
<line x1="812.2" y1="317.3" x2="814.7" y2="333.3" stroke="#3a2606" stroke-width="0.6" />
<line x1="806.4" y1="323.1" x2="814.5" y2="321.7" stroke="#b06a16" stroke-width="0.6" />
<line x1="807.3" y1="328.8" x2="815.4" y2="327.3" stroke="#b06a16" stroke-width="0.6" />
<line x1="807.5" y1="335.6" x2="817.4" y2="333.9" stroke="#d07818" stroke-width="0.9" />
<polygon points="808.5,336.5 816.7,335.0 818.4,345.9 810.3,347.3" fill="#7a5612" />
<line x1="810.2" y1="336.2" x2="811.9" y2="347.0" stroke="#3a2606" stroke-width="0.6" />
<line x1="812.6" y1="335.8" x2="814.3" y2="346.6" stroke="#3a2606" stroke-width="0.6" />
<line x1="815.1" y1="335.3" x2="816.8" y2="346.2" stroke="#3a2606" stroke-width="0.6" />
<line x1="809.3" y1="341.2" x2="817.4" y2="339.7" stroke="#b06a16" stroke-width="0.6" />
<line x1="810.2" y1="346.8" x2="818.3" y2="345.4" stroke="#b06a16" stroke-width="0.6" />
<line x1="809.6" y1="348.5" x2="819.4" y2="346.7" stroke="#d07818" stroke-width="0.9" />
<polygon points="810.6,349.4 818.7,347.9 820.5,358.7 812.3,360.2" fill="#a47c1c" />
<line x1="812.2" y1="349.1" x2="813.9" y2="359.9" stroke="#3a2606" stroke-width="0.6" />
<line x1="814.7" y1="348.7" x2="816.4" y2="359.5" stroke="#3a2606" stroke-width="0.6" />
<line x1="817.1" y1="348.2" x2="818.8" y2="359.0" stroke="#3a2606" stroke-width="0.6" />
<line x1="811.3" y1="354.0" x2="819.5" y2="352.6" stroke="#b06a16" stroke-width="0.6" />
<line x1="812.2" y1="359.7" x2="820.4" y2="358.2" stroke="#b06a16" stroke-width="0.6" />
<line x1="811.7" y1="361.4" x2="821.5" y2="359.6" stroke="#d07818" stroke-width="0.9" />
<polygon points="812.7,362.3 820.8,360.8 823.3,376.8 815.2,378.2" fill="#8a6414" />
<line x1="814.3" y1="362.0" x2="816.8" y2="377.9" stroke="#3a2606" stroke-width="0.6" />
<line x1="816.7" y1="361.5" x2="819.3" y2="377.5" stroke="#3a2606" stroke-width="0.6" />
<line x1="819.2" y1="361.1" x2="821.7" y2="377.1" stroke="#3a2606" stroke-width="0.6" />
<line x1="813.4" y1="366.9" x2="821.5" y2="365.4" stroke="#b06a16" stroke-width="0.6" />
<line x1="814.3" y1="372.6" x2="822.4" y2="371.1" stroke="#b06a16" stroke-width="0.6" />
<line x1="814.5" y1="379.4" x2="824.3" y2="377.6" stroke="#d07818" stroke-width="0.9" />
<polygon points="815.5,380.3 823.7,378.8 827.0,399.9 818.9,401.4" fill="#9a7018" />
<line x1="817.2" y1="380.0" x2="820.5" y2="401.1" stroke="#3a2606" stroke-width="0.6" />
<line x1="819.6" y1="379.6" x2="823.0" y2="400.7" stroke="#3a2606" stroke-width="0.6" />
<line x1="822.1" y1="379.1" x2="825.4" y2="400.2" stroke="#3a2606" stroke-width="0.6" />
<line x1="816.3" y1="384.9" x2="824.4" y2="383.5" stroke="#b06a16" stroke-width="0.6" />
<line x1="817.2" y1="390.6" x2="825.3" y2="389.1" stroke="#b06a16" stroke-width="0.6" />
<line x1="818.1" y1="396.3" x2="826.2" y2="394.8" stroke="#b06a16" stroke-width="0.6" />
<line x1="818.2" y1="402.6" x2="828.0" y2="400.8" stroke="#d07818" stroke-width="0.9" />
<polygon points="819.2,403.5 827.4,402.0 829.9,418.0 821.8,419.5" fill="#a47c1c" />
<line x1="820.9" y1="403.2" x2="823.4" y2="419.2" stroke="#3a2606" stroke-width="0.6" />
<line x1="823.3" y1="402.7" x2="825.9" y2="418.7" stroke="#3a2606" stroke-width="0.6" />
<line x1="825.8" y1="402.3" x2="828.3" y2="418.3" stroke="#3a2606" stroke-width="0.6" />
<line x1="820.0" y1="408.1" x2="828.1" y2="406.6" stroke="#b06a16" stroke-width="0.6" />
<line x1="820.9" y1="413.8" x2="829.0" y2="412.3" stroke="#b06a16" stroke-width="0.6" />
<line x1="821.1" y1="420.6" x2="830.9" y2="418.9" stroke="#d07818" stroke-width="0.9" />
<polygon points="822.1,421.5 830.2,420.0 832.8,436.0 824.7,437.5" fill="#6a4a10" />
<line x1="823.7" y1="421.2" x2="826.3" y2="437.2" stroke="#3a2606" stroke-width="0.6" />
<line x1="826.2" y1="420.8" x2="828.7" y2="436.7" stroke="#3a2606" stroke-width="0.6" />
<line x1="828.6" y1="420.3" x2="831.2" y2="436.3" stroke="#3a2606" stroke-width="0.6" />
<line x1="822.9" y1="426.1" x2="831.0" y2="424.7" stroke="#b06a16" stroke-width="0.6" />
<line x1="823.8" y1="431.8" x2="831.9" y2="430.3" stroke="#b06a16" stroke-width="0.6" />
<line x1="824.0" y1="438.7" x2="833.8" y2="436.9" stroke="#d07818" stroke-width="0.9" />
<polygon points="795.4,190.5 801.6,189.4 803.3,200.2 797.1,201.3" fill="#7a5612" />
<line x1="796.5" y1="190.3" x2="798.2" y2="201.1" stroke="#3a2606" stroke-width="0.6" />
<line x1="798.5" y1="190.0" x2="800.2" y2="200.8" stroke="#3a2606" stroke-width="0.6" />
<line x1="800.4" y1="189.6" x2="802.2" y2="200.4" stroke="#3a2606" stroke-width="0.6" />
<line x1="796.1" y1="195.2" x2="802.3" y2="194.1" stroke="#b06a16" stroke-width="0.6" />
<line x1="797.0" y1="200.8" x2="803.2" y2="199.7" stroke="#b06a16" stroke-width="0.6" />
<line x1="796.4" y1="202.5" x2="804.3" y2="201.1" stroke="#d07818" stroke-width="0.9" />
<polygon points="797.4,203.4 803.6,202.3 806.2,218.3 800.0,219.4" fill="#6a4a10" />
<line x1="798.5" y1="203.2" x2="801.1" y2="219.2" stroke="#3a2606" stroke-width="0.6" />
<line x1="800.5" y1="202.9" x2="803.1" y2="218.8" stroke="#3a2606" stroke-width="0.6" />
<line x1="802.5" y1="202.5" x2="805.0" y2="218.5" stroke="#3a2606" stroke-width="0.6" />
<line x1="798.2" y1="208.0" x2="804.4" y2="206.9" stroke="#b06a16" stroke-width="0.6" />
<line x1="799.1" y1="213.7" x2="805.3" y2="212.6" stroke="#b06a16" stroke-width="0.6" />
<line x1="799.3" y1="220.6" x2="807.2" y2="219.2" stroke="#d07818" stroke-width="0.9" />
<polygon points="800.3,221.4 806.5,220.3 809.0,236.3 802.8,237.4" fill="#6a4a10" />
<line x1="801.4" y1="221.2" x2="804.0" y2="237.2" stroke="#3a2606" stroke-width="0.6" />
<line x1="803.4" y1="220.9" x2="805.9" y2="236.8" stroke="#3a2606" stroke-width="0.6" />
<line x1="805.4" y1="220.5" x2="807.9" y2="236.5" stroke="#3a2606" stroke-width="0.6" />
<line x1="801.0" y1="226.1" x2="807.2" y2="225.0" stroke="#b06a16" stroke-width="0.6" />
<line x1="801.9" y1="231.7" x2="808.1" y2="230.6" stroke="#b06a16" stroke-width="0.6" />
<line x1="802.2" y1="238.6" x2="810.0" y2="237.2" stroke="#d07818" stroke-width="0.9" />
<polygon points="803.2,239.5 809.4,238.4 811.9,254.3 805.7,255.4" fill="#7a5612" />
<line x1="804.3" y1="239.3" x2="806.8" y2="255.2" stroke="#3a2606" stroke-width="0.6" />
<line x1="806.3" y1="238.9" x2="808.8" y2="254.9" stroke="#3a2606" stroke-width="0.6" />
<line x1="808.2" y1="238.6" x2="810.8" y2="254.5" stroke="#3a2606" stroke-width="0.6" />
<line x1="803.9" y1="244.1" x2="810.1" y2="243.0" stroke="#b06a16" stroke-width="0.6" />
<line x1="804.8" y1="249.8" x2="811.0" y2="248.7" stroke="#b06a16" stroke-width="0.6" />
<line x1="805.0" y1="256.6" x2="812.9" y2="255.2" stroke="#d07818" stroke-width="0.9" />
<polygon points="806.0,257.5 812.2,256.4 814.0,267.2 807.8,268.3" fill="#7a5612" />
<line x1="807.2" y1="257.3" x2="808.9" y2="268.1" stroke="#3a2606" stroke-width="0.6" />
<line x1="809.1" y1="256.9" x2="810.9" y2="267.8" stroke="#3a2606" stroke-width="0.6" />
<line x1="811.1" y1="256.6" x2="812.8" y2="267.4" stroke="#3a2606" stroke-width="0.6" />
<line x1="806.8" y1="262.1" x2="813.0" y2="261.0" stroke="#b06a16" stroke-width="0.6" />
<line x1="807.7" y1="267.8" x2="813.9" y2="266.7" stroke="#b06a16" stroke-width="0.6" />
<line x1="807.1" y1="269.5" x2="815.0" y2="268.1" stroke="#d07818" stroke-width="0.9" />
<polygon points="808.1,270.4 814.3,269.3 817.6,290.4 811.5,291.5" fill="#9a7018" />
<line x1="809.2" y1="270.2" x2="812.6" y2="291.3" stroke="#3a2606" stroke-width="0.6" />
<line x1="811.2" y1="269.8" x2="814.6" y2="290.9" stroke="#3a2606" stroke-width="0.6" />
<line x1="813.2" y1="269.5" x2="816.5" y2="290.6" stroke="#3a2606" stroke-width="0.6" />
<line x1="808.8" y1="275.0" x2="815.0" y2="273.9" stroke="#b06a16" stroke-width="0.6" />
<line x1="809.7" y1="280.7" x2="815.9" y2="279.6" stroke="#b06a16" stroke-width="0.6" />
<line x1="810.6" y1="286.3" x2="816.8" y2="285.2" stroke="#b06a16" stroke-width="0.6" />
<line x1="810.8" y1="292.7" x2="818.7" y2="291.3" stroke="#d07818" stroke-width="0.9" />
<polygon points="811.8,293.5 818.0,292.4 821.3,313.5 815.2,314.7" fill="#9a7018" />
<line x1="812.9" y1="293.3" x2="816.3" y2="314.5" stroke="#3a2606" stroke-width="0.6" />
<line x1="814.9" y1="293.0" x2="818.3" y2="314.1" stroke="#3a2606" stroke-width="0.6" />
<line x1="816.9" y1="292.6" x2="820.2" y2="313.7" stroke="#3a2606" stroke-width="0.6" />
<line x1="812.5" y1="298.2" x2="818.7" y2="297.1" stroke="#b06a16" stroke-width="0.6" />
<line x1="813.4" y1="303.8" x2="819.6" y2="302.7" stroke="#b06a16" stroke-width="0.6" />
<line x1="814.3" y1="309.5" x2="820.5" y2="308.4" stroke="#b06a16" stroke-width="0.6" />
<line x1="814.5" y1="315.8" x2="822.3" y2="314.4" stroke="#d07818" stroke-width="0.9" />
<polygon points="815.5,316.7 821.7,315.6 824.2,331.6 818.0,332.7" fill="#8a6414" />
<line x1="816.6" y1="316.5" x2="819.2" y2="332.5" stroke="#3a2606" stroke-width="0.6" />
<line x1="818.6" y1="316.2" x2="821.1" y2="332.1" stroke="#3a2606" stroke-width="0.6" />
<line x1="820.5" y1="315.8" x2="823.1" y2="331.8" stroke="#3a2606" stroke-width="0.6" />
<line x1="816.2" y1="321.4" x2="822.4" y2="320.2" stroke="#b06a16" stroke-width="0.6" />
<line x1="817.1" y1="327.0" x2="823.3" y2="325.9" stroke="#b06a16" stroke-width="0.6" />
<line x1="817.4" y1="333.9" x2="825.2" y2="332.5" stroke="#d07818" stroke-width="0.9" />
<polygon points="818.4,334.7 824.5,333.6 827.9,354.7 821.7,355.9" fill="#7a5612" />
<line x1="819.5" y1="334.5" x2="822.9" y2="355.7" stroke="#3a2606" stroke-width="0.6" />
<line x1="821.5" y1="334.2" x2="824.8" y2="355.3" stroke="#3a2606" stroke-width="0.6" />
<line x1="823.4" y1="333.8" x2="826.8" y2="355.0" stroke="#3a2606" stroke-width="0.6" />
<line x1="819.1" y1="339.4" x2="825.3" y2="338.3" stroke="#b06a16" stroke-width="0.6" />
<line x1="820.0" y1="345.0" x2="826.2" y2="343.9" stroke="#b06a16" stroke-width="0.6" />
<line x1="820.9" y1="350.7" x2="827.1" y2="349.6" stroke="#b06a16" stroke-width="0.6" />
<line x1="821.1" y1="357.0" x2="828.9" y2="355.6" stroke="#d07818" stroke-width="0.9" />
<polygon points="822.1,357.9 828.2,356.8 830.0,367.6 823.8,368.7" fill="#a47c1c" />
<line x1="823.2" y1="357.7" x2="824.9" y2="368.5" stroke="#3a2606" stroke-width="0.6" />
<line x1="825.1" y1="357.4" x2="826.9" y2="368.2" stroke="#3a2606" stroke-width="0.6" />
<line x1="827.1" y1="357.0" x2="828.8" y2="367.8" stroke="#3a2606" stroke-width="0.6" />
<line x1="822.8" y1="362.6" x2="829.0" y2="361.4" stroke="#b06a16" stroke-width="0.6" />
<line x1="823.7" y1="368.2" x2="829.9" y2="367.1" stroke="#b06a16" stroke-width="0.6" />
<line x1="823.1" y1="369.9" x2="831.0" y2="368.5" stroke="#d07818" stroke-width="0.9" />
<polygon points="824.1,370.8 830.3,369.7 832.8,385.6 826.7,386.8" fill="#8a6414" />
<line x1="825.2" y1="370.6" x2="827.8" y2="386.6" stroke="#3a2606" stroke-width="0.6" />
<line x1="827.2" y1="370.2" x2="829.7" y2="386.2" stroke="#3a2606" stroke-width="0.6" />
<line x1="829.2" y1="369.9" x2="831.7" y2="385.9" stroke="#3a2606" stroke-width="0.6" />
<line x1="824.9" y1="375.4" x2="831.0" y2="374.3" stroke="#b06a16" stroke-width="0.6" />
<line x1="825.8" y1="381.1" x2="831.9" y2="380.0" stroke="#b06a16" stroke-width="0.6" />
<line x1="826.0" y1="387.9" x2="833.8" y2="386.5" stroke="#d07818" stroke-width="0.9" />
<polygon points="827.0,388.8 833.2,387.7 836.5,408.8 830.4,409.9" fill="#a47c1c" />
<line x1="828.1" y1="388.6" x2="831.5" y2="409.7" stroke="#3a2606" stroke-width="0.6" />
<line x1="830.1" y1="388.3" x2="833.4" y2="409.4" stroke="#3a2606" stroke-width="0.6" />
<line x1="832.0" y1="387.9" x2="835.4" y2="409.0" stroke="#3a2606" stroke-width="0.6" />
<line x1="827.7" y1="393.5" x2="833.9" y2="392.3" stroke="#b06a16" stroke-width="0.6" />
<line x1="828.6" y1="399.1" x2="834.8" y2="398.0" stroke="#b06a16" stroke-width="0.6" />
<line x1="829.5" y1="404.8" x2="835.7" y2="403.7" stroke="#b06a16" stroke-width="0.6" />
<line x1="829.7" y1="411.1" x2="837.5" y2="409.7" stroke="#d07818" stroke-width="0.9" />
<polygon points="830.7,412.0 836.8,410.9 838.6,421.7 832.4,422.8" fill="#a47c1c" />
<line x1="831.8" y1="411.8" x2="833.5" y2="422.6" stroke="#3a2606" stroke-width="0.6" />
<line x1="833.8" y1="411.4" x2="835.5" y2="422.3" stroke="#3a2606" stroke-width="0.6" />
<line x1="835.7" y1="411.1" x2="837.4" y2="421.9" stroke="#3a2606" stroke-width="0.6" />
<line x1="831.4" y1="416.6" x2="837.6" y2="415.5" stroke="#b06a16" stroke-width="0.6" />
<line x1="832.3" y1="422.3" x2="838.5" y2="421.2" stroke="#b06a16" stroke-width="0.6" />
<line x1="831.7" y1="424.0" x2="839.6" y2="422.6" stroke="#d07818" stroke-width="0.9" />
<polygon points="832.7,424.9 838.9,423.8 840.6,434.6 834.5,435.7" fill="#7a5612" />
<line x1="833.9" y1="424.7" x2="835.6" y2="435.5" stroke="#3a2606" stroke-width="0.6" />
<line x1="835.8" y1="424.3" x2="837.5" y2="435.1" stroke="#3a2606" stroke-width="0.6" />
<line x1="837.8" y1="424.0" x2="839.5" y2="434.8" stroke="#3a2606" stroke-width="0.6" />
<line x1="833.5" y1="429.5" x2="839.6" y2="428.4" stroke="#b06a16" stroke-width="0.6" />
<line x1="834.4" y1="435.2" x2="840.5" y2="434.1" stroke="#b06a16" stroke-width="0.6" />
<line x1="833.8" y1="436.9" x2="841.6" y2="435.5" stroke="#d07818" stroke-width="0.9" />
<line x1="752.6" y1="191.8" x2="794.1" y2="449.4" stroke="#d8801a" stroke-width="0.9" />
<line x1="763.0" y1="189.9" x2="804.4" y2="447.5" stroke="#d8801a" stroke-width="0.9" />
<line x1="773.8" y1="188.0" x2="815.1" y2="445.6" stroke="#d8801a" stroke-width="0.9" />
<line x1="783.6" y1="186.2" x2="824.8" y2="443.8" stroke="#d8801a" stroke-width="0.9" />
<line x1="793.5" y1="184.5" x2="834.6" y2="442.0" stroke="#d8801a" stroke-width="0.9" />
<line x1="801.4" y1="183.1" x2="842.4" y2="440.6" stroke="#d8801a" stroke-width="0.9" />
<line x1="763.0" y1="189.9" x2="804.4" y2="447.5" stroke="#f0a020" stroke-width="1.4" />
<line x1="793.5" y1="184.5" x2="834.6" y2="442.0" stroke="#e88a1a" stroke-width="1.2" />
<line x1="519.5" y1="233.0" x2="802.0" y2="183.0" stroke="#e03a10" stroke-width="5" stroke-linecap="round"/>
<line x1="519.5" y1="233.0" x2="802.0" y2="183.0" stroke="#f86818" stroke-width="2.25" stroke-linecap="round" opacity="0.8"/>
<line x1="563.5" y1="491.5" x2="843.0" y2="440.5" stroke="#e03a10" stroke-width="5" stroke-linecap="round"/>
<line x1="563.5" y1="491.5" x2="843.0" y2="440.5" stroke="#f86818" stroke-width="2.25" stroke-linecap="round" opacity="0.8"/>
<line x1="519.5" y1="233.0" x2="563.5" y2="491.5" stroke="#a83a14" stroke-width="3" />
<line x1="802.0" y1="183.0" x2="843.0" y2="440.5" stroke="#a03a14" stroke-width="1.6" />
<line x1="526.1" y1="271.8" x2="684.3" y2="245.0" stroke="#e03a10" stroke-width="6" stroke-linecap="round"/>
<line x1="526.1" y1="271.8" x2="684.3" y2="245.0" stroke="#f86818" stroke-width="2.7" stroke-linecap="round" opacity="0.8"/>
<line x1="684.2" y1="203.9" x2="726.4" y2="461.8" stroke="#e03a10" stroke-width="7" stroke-linecap="round"/>
<line x1="684.2" y1="203.9" x2="726.4" y2="461.8" stroke="#f86818" stroke-width="3.15" stroke-linecap="round" opacity="0.8"/>
<line x1="748.9" y1="192.4" x2="790.5" y2="450.1" stroke="#e03a10" stroke-width="7" stroke-linecap="round"/>
<line x1="748.9" y1="192.4" x2="790.5" y2="450.1" stroke="#f86818" stroke-width="3.15" stroke-linecap="round" opacity="0.8"/>
<line x1="691.2" y1="246.4" x2="756.0" y2="236.2" stroke="#e03a10" stroke-width="5" stroke-linecap="round"/>
<line x1="691.2" y1="246.4" x2="756.0" y2="236.2" stroke="#f86818" stroke-width="2.25" stroke-linecap="round" opacity="0.8"/>
<line x1="707.2" y1="344.4" x2="771.8" y2="334.1" stroke="#e03a10" stroke-width="4.5" stroke-linecap="round"/>
<line x1="707.2" y1="344.4" x2="771.8" y2="334.1" stroke="#f86818" stroke-width="2.025" stroke-linecap="round" opacity="0.8"/>
<line x1="556.7" y1="451.4" x2="719.3" y2="423.2" stroke="#e03a10" stroke-width="4.5" stroke-linecap="round"/>
<line x1="556.7" y1="451.4" x2="719.3" y2="423.2" stroke="#f86818" stroke-width="2.025" stroke-linecap="round" opacity="0.8"/>
<line x1="710.8" y1="366.3" x2="775.1" y2="354.7" stroke="#e04812" stroke-width="2.5" />
<circle cx="696.9" cy="281.2" r="1.6" fill="#e8c040" opacity="0.8"/>
<circle cx="703.2" cy="319.9" r="1.6" fill="#e8c040" opacity="0.8"/>
<circle cx="714.6" cy="389.6" r="1.6" fill="#e8c040" opacity="0.8"/>
<circle cx="761.4" cy="269.7" r="1.6" fill="#e8c040" opacity="0.8"/>
<circle cx="769.7" cy="321.2" r="1.6" fill="#e8c040" opacity="0.8"/>
<circle cx="784.2" cy="411.4" r="1.6" fill="#e8c040" opacity="0.8"/>
<circle cx="610.9" cy="258.0" r="1.6" fill="#e8c040" opacity="0.8"/>
<circle cx="598.9" cy="445.1" r="1.6" fill="#e8c040" opacity="0.8"/>
<circle cx="640.9" cy="437.5" r="1.6" fill="#e8c040" opacity="0.8"/>
<circle cx="682.9" cy="429.8" r="1.6" fill="#e8c040" opacity="0.8"/>
<rect x="510" y="175" width="340" height="320" filter="url(#nz)" opacity="0.65"/>
</g>
<rect x="561.1" y="205.0" width="1.2" height="2.4" fill="#a82010" opacity="0.9"/>
<rect x="562.5" y="217.5" width="1.2" height="2.2" fill="#d8a020" opacity="0.9"/>
<rect x="562.6" y="218.2" width="1.2" height="2.2" fill="#d03a18" opacity="0.9"/>
<rect x="561.0" y="199.3" width="1.2" height="1.3" fill="#d03a18" opacity="0.9"/>
<rect x="562.6" y="213.0" width="1.2" height="2.2" fill="#c02a14" opacity="0.9"/>
<rect x="562.0" y="213.8" width="1.2" height="2.4" fill="#d8a020" opacity="0.9"/>
<rect x="563.0" y="214.6" width="1.2" height="2.4" fill="#a82010" opacity="0.9"/>
<rect x="562.5" y="217.2" width="1.2" height="1.7" fill="#d03a18" opacity="0.9"/>
<rect x="562.9" y="218.0" width="1.2" height="2.3" fill="#d8a020" opacity="0.9"/>
<rect x="562.5" y="213.5" width="1.2" height="1.1" fill="#70b040" opacity="0.9"/>
<rect x="562.0" y="206.5" width="1.2" height="2.1" fill="#70b040" opacity="0.9"/>
<rect x="562.0" y="213.6" width="1.2" height="1.5" fill="#70b040" opacity="0.9"/>
<rect x="561.4" y="200.2" width="1.2" height="1.7" fill="#c02a14" opacity="0.9"/>
<rect x="560.6" y="202.8" width="1.2" height="1.3" fill="#d03a18" opacity="0.9"/>
<rect x="563.0" y="222.7" width="1.2" height="2.2" fill="#c02a14" opacity="0.9"/>
<rect x="563.8" y="222.4" width="1.2" height="2.0" fill="#c02a14" opacity="0.9"/>
<rect x="562.9" y="217.6" width="1.2" height="1.0" fill="#d03a18" opacity="0.9"/>
<rect x="561.1" y="200.2" width="1.2" height="1.8" fill="#c02a14" opacity="0.9"/>
<rect x="559.9" y="193.5" width="1.2" height="2.2" fill="#d03a18" opacity="0.9"/>
<rect x="563.0" y="221.2" width="1.2" height="1.8" fill="#a82010" opacity="0.9"/>
<rect x="560.8" y="201.9" width="1.2" height="1.6" fill="#d8a020" opacity="0.9"/>
<rect x="563.9" y="222.7" width="1.2" height="2.3" fill="#a82010" opacity="0.9"/>
<rect x="571.1" y="194.0" width="1.2" height="1.6" fill="#d8a020" opacity="0.9"/>
<rect x="568.5" y="173.4" width="1.2" height="1.2" fill="#d8a020" opacity="0.9"/>
<rect x="572.3" y="204.2" width="1.2" height="1.9" fill="#d03a18" opacity="0.9"/>
<rect x="569.4" y="185.3" width="1.2" height="1.7" fill="#d03a18" opacity="0.9"/>
<rect x="570.3" y="189.3" width="1.2" height="2.0" fill="#a82010" opacity="0.9"/>
<rect x="571.7" y="203.0" width="1.2" height="2.3" fill="#c02a14" opacity="0.9"/>
<rect x="573.6" y="223.4" width="1.2" height="2.2" fill="#c02a14" opacity="0.9"/>
<rect x="571.9" y="204.4" width="1.2" height="1.7" fill="#c02a14" opacity="0.9"/>
<rect x="571.1" y="197.5" width="1.2" height="1.3" fill="#d8a020" opacity="0.9"/>
<rect x="573.2" y="216.6" width="1.2" height="1.8" fill="#c02a14" opacity="0.9"/>
<rect x="573.4" y="217.8" width="1.2" height="2.4" fill="#a82010" opacity="0.9"/>
<rect x="568.4" y="175.6" width="1.2" height="1.2" fill="#c02a14" opacity="0.9"/>
<rect x="573.7" y="222.0" width="1.2" height="2.0" fill="#c02a14" opacity="0.9"/>
<rect x="572.0" y="209.1" width="1.2" height="2.2" fill="#a82010" opacity="0.9"/>
<rect x="568.3" y="175.3" width="1.2" height="2.0" fill="#70b040" opacity="0.9"/>
<rect x="572.4" y="212.4" width="1.2" height="2.5" fill="#d03a18" opacity="0.9"/>
<rect x="574.0" y="218.9" width="1.2" height="2.3" fill="#c02a14" opacity="0.9"/>
<rect x="573.9" y="220.8" width="1.2" height="1.2" fill="#d03a18" opacity="0.9"/>
<rect x="572.4" y="208.9" width="1.2" height="1.6" fill="#a82010" opacity="0.9"/>
<rect x="572.3" y="212.9" width="1.2" height="1.0" fill="#a82010" opacity="0.9"/>
<rect x="571.5" y="201.5" width="1.2" height="1.6" fill="#c02a14" opacity="0.9"/>
<rect x="571.6" y="203.8" width="1.2" height="1.2" fill="#c02a14" opacity="0.9"/>
<rect x="568.2" y="173.4" width="1.2" height="1.1" fill="#c02a14" opacity="0.9"/>
<rect x="573.7" y="216.8" width="1.2" height="1.4" fill="#d03a18" opacity="0.9"/>
<rect x="573.7" y="221.8" width="1.2" height="2.2" fill="#70b040" opacity="0.9"/>
<rect x="572.9" y="217.3" width="1.2" height="1.9" fill="#d8a020" opacity="0.9"/>
<rect x="569.9" y="191.2" width="1.2" height="2.2" fill="#c02a14" opacity="0.9"/>
<rect x="574.1" y="220.2" width="1.2" height="2.4" fill="#a82010" opacity="0.9"/>
<rect x="571.3" y="196.0" width="1.2" height="1.9" fill="#c02a14" opacity="0.9"/>
<rect x="573.1" y="218.8" width="1.2" height="1.7" fill="#c02a14" opacity="0.9"/>
<rect x="572.9" y="213.7" width="1.2" height="1.9" fill="#a82010" opacity="0.9"/>
<rect x="574.2" y="223.6" width="1.2" height="2.5" fill="#c02a14" opacity="0.9"/>
<rect x="572.9" y="217.2" width="1.2" height="1.9" fill="#a82010" opacity="0.9"/>
<rect x="571.4" y="202.9" width="1.2" height="1.8" fill="#c02a14" opacity="0.9"/>
<rect x="573.4" y="220.3" width="1.2" height="2.5" fill="#c02a14" opacity="0.9"/>
<rect x="573.4" y="223.7" width="1.2" height="1.8" fill="#d8a020" opacity="0.9"/>
<rect x="573.5" y="220.0" width="1.2" height="1.2" fill="#c02a14" opacity="0.9"/>
<rect x="569.3" y="181.9" width="1.2" height="1.8" fill="#c02a14" opacity="0.9"/>
<rect x="569.3" y="176.0" width="1.2" height="2.0" fill="#a82010" opacity="0.9"/>
<rect x="567.7" y="167.6" width="1.2" height="2.1" fill="#70b040" opacity="0.9"/>
<rect x="574.3" y="221.5" width="1.2" height="2.3" fill="#c02a14" opacity="0.9"/>
<rect x="574.1" y="223.9" width="1.2" height="1.6" fill="#a82010" opacity="0.9"/>
<rect x="574.1" y="223.4" width="1.2" height="2.3" fill="#c02a14" opacity="0.9"/>
<rect x="570.4" y="193.4" width="1.2" height="2.0" fill="#d03a18" opacity="0.9"/>
<rect x="573.6" y="223.6" width="1.2" height="1.7" fill="#a82010" opacity="0.9"/>
<rect x="573.8" y="217.1" width="1.2" height="1.5" fill="#d8a020" opacity="0.9"/>
<rect x="574.4" y="223.7" width="1.2" height="1.5" fill="#d03a18" opacity="0.9"/>
<rect x="573.9" y="224.0" width="1.2" height="1.4" fill="#c02a14" opacity="0.9"/>
<rect x="570.5" y="194.5" width="1.2" height="1.1" fill="#c02a14" opacity="0.9"/>
<rect x="569.0" y="182.0" width="1.2" height="1.1" fill="#d8a020" opacity="0.9"/>
<rect x="573.8" y="223.9" width="1.2" height="1.1" fill="#d03a18" opacity="0.9"/>
<rect x="568.5" y="169.9" width="1.2" height="2.0" fill="#d03a18" opacity="0.9"/>
<rect x="570.8" y="190.0" width="1.2" height="2.1" fill="#c02a14" opacity="0.9"/>
<rect x="570.3" y="189.7" width="1.2" height="2.1" fill="#a82010" opacity="0.9"/>
<rect x="570.3" y="195.4" width="1.2" height="2.3" fill="#70b040" opacity="0.9"/>
<rect x="575.3" y="195.0" width="1.2" height="1.2" fill="#d8a020" opacity="0.9"/>
<rect x="575.8" y="201.7" width="1.2" height="2.2" fill="#c02a14" opacity="0.9"/>
<rect x="575.8" y="197.9" width="1.2" height="2.4" fill="#70b040" opacity="0.9"/>
<rect x="574.4" y="193.9" width="1.2" height="1.2" fill="#c02a14" opacity="0.9"/>
<rect x="576.3" y="210.8" width="1.2" height="1.8" fill="#c02a14" opacity="0.9"/>
<rect x="575.2" y="194.9" width="1.2" height="1.4" fill="#70b040" opacity="0.9"/>
<rect x="577.2" y="215.2" width="1.2" height="2.1" fill="#c02a14" opacity="0.9"/>
<rect x="575.9" y="203.0" width="1.2" height="1.8" fill="#70b040" opacity="0.9"/>
<rect x="574.0" y="186.4" width="1.2" height="2.3" fill="#c02a14" opacity="0.9"/>
<rect x="577.7" y="216.4" width="1.2" height="2.1" fill="#d03a18" opacity="0.9"/>
<rect x="571.9" y="167.2" width="1.2" height="1.1" fill="#c02a14" opacity="0.9"/>
<rect x="572.3" y="172.9" width="1.2" height="1.9" fill="#c02a14" opacity="0.9"/>
<rect x="574.4" y="193.9" width="1.2" height="1.5" fill="#d03a18" opacity="0.9"/>
<rect x="575.1" y="193.3" width="1.2" height="1.9" fill="#d8a020" opacity="0.9"/>
<rect x="577.5" y="221.9" width="1.2" height="2.5" fill="#a82010" opacity="0.9"/>
<rect x="577.5" y="220.6" width="1.2" height="1.4" fill="#c02a14" opacity="0.9"/>
<rect x="575.8" y="202.2" width="1.2" height="2.2" fill="#c02a14" opacity="0.9"/>
<rect x="571.8" y="165.6" width="1.2" height="2.5" fill="#a82010" opacity="0.9"/>
<rect x="571.8" y="170.7" width="1.2" height="1.1" fill="#c02a14" opacity="0.9"/>
<rect x="576.5" y="202.8" width="1.2" height="1.6" fill="#a82010" opacity="0.9"/>
<rect x="573.0" y="172.4" width="1.2" height="1.9" fill="#c02a14" opacity="0.9"/>
<rect x="577.8" y="219.5" width="1.2" height="1.2" fill="#a82010" opacity="0.9"/>
<rect x="573.4" y="180.5" width="1.2" height="2.1" fill="#c02a14" opacity="0.9"/>
<rect x="577.9" y="216.5" width="1.2" height="1.6" fill="#c02a14" opacity="0.9"/>
<rect x="578.2" y="219.0" width="1.2" height="1.7" fill="#70b040" opacity="0.9"/>
<rect x="576.6" y="213.6" width="1.2" height="1.6" fill="#a82010" opacity="0.9"/>
<rect x="577.6" y="220.1" width="1.2" height="2.1" fill="#a82010" opacity="0.9"/>
<rect x="572.8" y="178.9" width="1.2" height="2.1" fill="#d03a18" opacity="0.9"/>
<rect x="572.4" y="173.7" width="1.2" height="1.1" fill="#a82010" opacity="0.9"/>
<rect x="577.0" y="209.4" width="1.2" height="1.5" fill="#c02a14" opacity="0.9"/>
<rect x="576.1" y="207.3" width="1.2" height="1.4" fill="#c02a14" opacity="0.9"/>
<rect x="578.1" y="221.5" width="1.2" height="2.4" fill="#70b040" opacity="0.9"/>
<rect x="577.0" y="215.8" width="1.2" height="1.5" fill="#d8a020" opacity="0.9"/>
<rect x="574.2" y="184.2" width="1.2" height="2.3" fill="#c02a14" opacity="0.9"/>
<rect x="573.6" y="181.2" width="1.2" height="1.8" fill="#d8a020" opacity="0.9"/>
<rect x="573.7" y="188.3" width="1.2" height="1.6" fill="#70b040" opacity="0.9"/>
<rect x="574.7" y="195.8" width="1.2" height="1.7" fill="#a82010" opacity="0.9"/>
<rect x="572.6" y="172.8" width="1.2" height="1.7" fill="#d03a18" opacity="0.9"/>
<rect x="576.6" y="211.7" width="1.2" height="2.1" fill="#70b040" opacity="0.9"/>
<rect x="574.7" y="193.2" width="1.2" height="1.5" fill="#d03a18" opacity="0.9"/>
<rect x="575.4" y="199.6" width="1.2" height="2.0" fill="#d03a18" opacity="0.9"/>
<rect x="577.9" y="221.1" width="1.2" height="1.8" fill="#c02a14" opacity="0.9"/>
<rect x="576.0" y="205.9" width="1.2" height="1.6" fill="#c02a14" opacity="0.9"/>
<rect x="575.3" y="200.2" width="1.2" height="1.5" fill="#d03a18" opacity="0.9"/>
<rect x="577.6" y="220.8" width="1.2" height="2.2" fill="#a82010" opacity="0.9"/>
<rect x="576.9" y="217.6" width="1.2" height="1.6" fill="#c02a14" opacity="0.9"/>
<rect x="573.7" y="186.3" width="1.2" height="1.5" fill="#a82010" opacity="0.9"/>
<rect x="577.7" y="221.3" width="1.2" height="1.2" fill="#a82010" opacity="0.9"/>
<rect x="576.1" y="203.0" width="1.2" height="1.1" fill="#d03a18" opacity="0.9"/>
<rect x="572.6" y="174.1" width="1.2" height="1.7" fill="#70b040" opacity="0.9"/>
<rect x="572.6" y="169.1" width="1.2" height="1.2" fill="#c02a14" opacity="0.9"/>
<rect x="576.7" y="207.5" width="1.2" height="2.5" fill="#c02a14" opacity="0.9"/>
<rect x="575.5" y="203.8" width="1.2" height="2.3" fill="#d8a020" opacity="0.9"/>
<rect x="571.7" y="167.5" width="1.2" height="1.3" fill="#c02a14" opacity="0.9"/>
<rect x="578.3" y="219.2" width="1.2" height="2.4" fill="#c02a14" opacity="0.9"/>
<rect x="582.1" y="192.5" width="1.2" height="1.1" fill="#c02a14" opacity="0.9"/>
<rect x="580.6" y="189.0" width="1.2" height="1.3" fill="#d03a18" opacity="0.9"/>
<rect x="579.4" y="179.0" width="1.2" height="2.4" fill="#a82010" opacity="0.9"/>
<rect x="583.1" y="198.3" width="1.2" height="2.0" fill="#c02a14" opacity="0.9"/>
<rect x="586.9" y="219.6" width="1.2" height="2.4" fill="#d8a020" opacity="0.9"/>
<rect x="586.7" y="217.6" width="1.2" height="1.0" fill="#d8a020" opacity="0.9"/>
<rect x="584.7" y="203.2" width="1.2" height="2.4" fill="#a82010" opacity="0.9"/>
<rect x="583.4" y="197.2" width="1.2" height="1.8" fill="#c02a14" opacity="0.9"/>
<rect x="583.4" y="202.7" width="1.2" height="2.1" fill="#c02a14" opacity="0.9"/>
<rect x="585.7" y="213.7" width="1.2" height="2.3" fill="#c02a14" opacity="0.9"/>
<rect x="582.4" y="197.1" width="1.2" height="2.0" fill="#d03a18" opacity="0.9"/>
<rect x="578.8" y="178.6" width="1.2" height="2.0" fill="#c02a14" opacity="0.9"/>
<rect x="581.8" y="192.7" width="1.2" height="1.3" fill="#c02a14" opacity="0.9"/>
<rect x="581.2" y="187.6" width="1.2" height="1.1" fill="#d8a020" opacity="0.9"/>
<rect x="584.2" y="205.4" width="1.2" height="1.3" fill="#d03a18" opacity="0.9"/>
<rect x="587.1" y="216.7" width="1.2" height="1.2" fill="#a82010" opacity="0.9"/>
<rect x="583.3" y="198.5" width="1.2" height="1.7" fill="#d03a18" opacity="0.9"/>
<rect x="578.8" y="179.7" width="1.2" height="1.2" fill="#d8a020" opacity="0.9"/>
<rect x="585.2" y="210.2" width="1.2" height="1.2" fill="#d8a020" opacity="0.9"/>
<rect x="587.1" y="220.6" width="1.2" height="1.7" fill="#c02a14" opacity="0.9"/>
<rect x="581.8" y="193.1" width="1.2" height="2.5" fill="#c02a14" opacity="0.9"/>
<rect x="578.8" y="178.1" width="1.2" height="2.0" fill="#d03a18" opacity="0.9"/>
<rect x="584.2" y="203.9" width="1.2" height="2.0" fill="#a82010" opacity="0.9"/>
<rect x="585.5" y="210.9" width="1.2" height="1.7" fill="#a82010" opacity="0.9"/>
<rect x="586.9" y="219.6" width="1.2" height="1.5" fill="#c02a14" opacity="0.9"/>
<rect x="578.2" y="176.4" width="1.2" height="1.6" fill="#d03a18" opacity="0.9"/>
<rect x="581.1" y="189.5" width="1.2" height="1.1" fill="#c02a14" opacity="0.9"/>
<rect x="581.8" y="193.5" width="1.2" height="2.4" fill="#d8a020" opacity="0.9"/>
<rect x="586.8" y="217.5" width="1.2" height="1.0" fill="#c02a14" opacity="0.9"/>
<rect x="585.7" y="209.4" width="1.2" height="1.1" fill="#c02a14" opacity="0.9"/>
<rect x="587.1" y="220.8" width="1.2" height="1.4" fill="#c02a14" opacity="0.9"/>
<rect x="582.1" y="190.9" width="1.2" height="1.5" fill="#a82010" opacity="0.9"/>
<rect x="586.6" y="212.7" width="1.2" height="1.4" fill="#c02a14" opacity="0.9"/>
<rect x="581.8" y="192.8" width="1.2" height="1.4" fill="#a82010" opacity="0.9"/>
<rect x="582.1" y="192.5" width="1.2" height="2.4" fill="#70b040" opacity="0.9"/>
<rect x="588.0" y="220.4" width="1.2" height="1.7" fill="#c02a14" opacity="0.9"/>
<rect x="579.2" y="176.3" width="1.2" height="2.2" fill="#c02a14" opacity="0.9"/>
<rect x="579.7" y="179.5" width="1.2" height="2.4" fill="#d03a18" opacity="0.9"/>
<rect x="587.4" y="217.8" width="1.2" height="1.5" fill="#70b040" opacity="0.9"/>
<rect x="581.9" y="194.4" width="1.2" height="1.5" fill="#d03a18" opacity="0.9"/>
<rect x="586.0" y="213.3" width="1.2" height="1.1" fill="#d8a020" opacity="0.9"/>
<rect x="587.3" y="217.4" width="1.2" height="1.6" fill="#d03a18" opacity="0.9"/>
<rect x="582.8" y="196.9" width="1.2" height="1.5" fill="#d8a020" opacity="0.9"/>
<rect x="578.8" y="174.5" width="1.2" height="1.4" fill="#c02a14" opacity="0.9"/>
<rect x="587.0" y="220.1" width="1.2" height="2.5" fill="#c02a14" opacity="0.9"/>
<rect x="578.0" y="175.1" width="1.2" height="1.6" fill="#d03a18" opacity="0.9"/>
<rect x="583.4" y="198.6" width="1.2" height="1.8" fill="#70b040" opacity="0.9"/>
<rect x="581.6" y="189.1" width="1.2" height="1.4" fill="#a82010" opacity="0.9"/>
<rect x="590.4" y="212.0" width="1.2" height="1.4" fill="#70b040" opacity="0.9"/>
<rect x="590.8" y="214.0" width="1.2" height="1.2" fill="#d03a18" opacity="0.9"/>
<rect x="588.7" y="205.7" width="1.2" height="1.1" fill="#a82010" opacity="0.9"/>
<rect x="591.7" y="216.4" width="1.2" height="1.3" fill="#d8a020" opacity="0.9"/>
<rect x="589.3" y="207.3" width="1.2" height="1.2" fill="#c02a14" opacity="0.9"/>
<rect x="591.4" y="213.4" width="1.2" height="2.4" fill="#c02a14" opacity="0.9"/>
<rect x="592.2" y="217.9" width="1.2" height="1.1" fill="#c02a14" opacity="0.9"/>
<rect x="590.8" y="211.4" width="1.2" height="2.4" fill="#d03a18" opacity="0.9"/>
<rect x="592.0" y="214.9" width="1.2" height="1.9" fill="#c02a14" opacity="0.9"/>
<rect x="589.5" y="208.0" width="1.2" height="1.2" fill="#c02a14" opacity="0.9"/>
<rect x="590.5" y="211.4" width="1.2" height="1.1" fill="#d03a18" opacity="0.9"/>
<rect x="591.1" y="215.3" width="1.2" height="1.1" fill="#a82010" opacity="0.9"/>
<rect x="590.1" y="208.9" width="1.2" height="2.2" fill="#c02a14" opacity="0.9"/>
<rect x="591.2" y="214.4" width="1.2" height="1.5" fill="#d8a020" opacity="0.9"/>
<rect x="542.5" y="148.7" width="1" height="1" fill="#80c040"/>
<rect x="551.5" y="142.5" width="1" height="1" fill="#3a70a0"/>
<rect x="557.2" y="138.5" width="1" height="1" fill="#80c040"/>
<rect x="538.9" y="138.6" width="1" height="1" fill="#80c040"/>
<rect x="544.7" y="151.8" width="1" height="1" fill="#80c040"/>
<rect x="545.8" y="151.3" width="1" height="1" fill="#3a70a0"/>
<rect x="559.9" y="150.1" width="1" height="1" fill="#3a70a0"/>
<rect x="549.3" y="149.8" width="1" height="1" fill="#3a70a0"/>
<rect x="556.6" y="142.3" width="1" height="1" fill="#3a70a0"/>
<rect x="542.5" y="136.1" width="1" height="1" fill="#40a0c0"/>
<rect x="549.6" y="149.1" width="1" height="1" fill="#3a70a0"/>
<rect x="554.5" y="141.8" width="1" height="1" fill="#40a0c0"/>
<rect x="540.2" y="136.8" width="1" height="1" fill="#40a0c0"/>
<rect x="556.5" y="150.6" width="1" height="1" fill="#40a0c0"/>
<rect x="554.3" y="150.8" width="1" height="1" fill="#80c040"/>
<rect x="552.1" y="138.3" width="1" height="1" fill="#3a70a0"/>
<rect x="541.2" y="138.7" width="1" height="1" fill="#40a0c0"/>
<rect x="539.5" y="143.8" width="1" height="1" fill="#40a0c0"/>
<rect x="545.7" y="149.4" width="1" height="1" fill="#40a0c0"/>
<rect x="567.2" y="143.7" width="1" height="1" fill="#40a0c0"/>
<rect x="555.4" y="146.2" width="1" height="1" fill="#40a0c0"/>
<rect x="564.9" y="145.9" width="1" height="1" fill="#40a0c0"/>
<rect x="556.5" y="149.7" width="1" height="1" fill="#80c040"/>
<rect x="548.9" y="149.5" width="1" height="1" fill="#3a70a0"/>
<rect x="541.9" y="139.5" width="1" height="1" fill="#3a70a0"/>
<rect x="850.5" y="421.1" width="5.9" height="0.8" fill="#d03a18" opacity="0.8"/>
<rect x="865.0" y="282.1" width="4.7" height="0.8" fill="#a02818" opacity="0.8"/>
<rect x="835.4" y="262.8" width="5.1" height="0.8" fill="#902010" opacity="0.8"/>
<rect x="858.6" y="347.9" width="3.8" height="0.8" fill="#902010" opacity="0.8"/>
<rect x="812.9" y="270.9" width="2.9" height="0.8" fill="#b08020" opacity="0.8"/>
<rect x="840.6" y="324.3" width="2.3" height="0.8" fill="#a02818" opacity="0.8"/>
<rect x="827.9" y="324.1" width="4.6" height="0.8" fill="#c02a14" opacity="0.8"/>
<rect x="815.1" y="276.7" width="4.0" height="0.8" fill="#c02a14" opacity="0.8"/>
<rect x="876.3" y="426.1" width="2.1" height="0.8" fill="#c02a14" opacity="0.8"/>
<rect x="870.6" y="428.9" width="5.9" height="0.8" fill="#902010" opacity="0.8"/>
<rect x="814.5" y="257.5" width="2.6" height="0.8" fill="#b08020" opacity="0.8"/>
<rect x="823.6" y="307.9" width="3.3" height="0.8" fill="#c02a14" opacity="0.8"/>
<rect x="818.9" y="248.1" width="4.7" height="0.8" fill="#902010" opacity="0.8"/>
<rect x="842.1" y="253.2" width="2.2" height="0.8" fill="#a02818" opacity="0.8"/>
<rect x="833.0" y="317.4" width="2.4" height="0.8" fill="#b08020" opacity="0.8"/>
<rect x="837.9" y="311.1" width="3.5" height="0.8" fill="#d03a18" opacity="0.8"/>
<rect x="844.5" y="333.4" width="4.5" height="0.8" fill="#c02a14" opacity="0.8"/>
<rect x="871.9" y="340.7" width="5.9" height="0.8" fill="#b08020" opacity="0.8"/>
<rect x="860.5" y="348.2" width="5.6" height="0.8" fill="#d03a18" opacity="0.8"/>
<rect x="824.1" y="319.6" width="2.0" height="0.8" fill="#a02818" opacity="0.8"/>
<rect x="832.0" y="345.0" width="4.3" height="0.8" fill="#b08020" opacity="0.8"/>
<rect x="819.8" y="271.2" width="2.5" height="0.8" fill="#d03a18" opacity="0.8"/>
<rect x="829.1" y="243.2" width="4.7" height="0.8" fill="#a02818" opacity="0.8"/>
<rect x="839.9" y="329.0" width="5.3" height="0.8" fill="#a02818" opacity="0.8"/>
<rect x="867.6" y="422.5" width="4.9" height="0.8" fill="#d03a18" opacity="0.8"/>
<rect x="846.3" y="242.2" width="3.6" height="0.8" fill="#d03a18" opacity="0.8"/>
<rect x="814.2" y="278.9" width="4.2" height="0.8" fill="#d03a18" opacity="0.8"/>
<rect x="827.7" y="265.9" width="4.6" height="0.8" fill="#902010" opacity="0.8"/>
<rect x="851.1" y="420.3" width="2.2" height="0.8" fill="#902010" opacity="0.8"/>
<rect x="845.2" y="429.4" width="3.9" height="0.8" fill="#902010" opacity="0.8"/>
<rect x="820.6" y="245.3" width="2.2" height="0.8" fill="#a02818" opacity="0.8"/>
<rect x="865.9" y="341.2" width="3.7" height="0.8" fill="#b08020" opacity="0.8"/>
<rect x="842.6" y="369.0" width="2.3" height="0.8" fill="#b08020" opacity="0.8"/>
<rect x="822.2" y="285.2" width="2.8" height="0.8" fill="#d03a18" opacity="0.8"/>
<rect x="836.7" y="346.3" width="3.5" height="0.8" fill="#b08020" opacity="0.8"/>
<rect x="830.7" y="315.9" width="2.1" height="0.8" fill="#d03a18" opacity="0.8"/>
<rect x="876.0" y="428.4" width="4.3" height="0.8" fill="#b08020" opacity="0.8"/>
<rect x="817.5" y="241.3" width="5.7" height="0.8" fill="#a02818" opacity="0.8"/>
<rect x="838.6" y="241.5" width="4.6" height="0.8" fill="#c02a14" opacity="0.8"/>
<rect x="856.2" y="243.3" width="3.5" height="0.8" fill="#b08020" opacity="0.8"/>
<rect x="864.8" y="277.8" width="3.5" height="0.8" fill="#d03a18" opacity="0.8"/>
<rect x="819.7" y="241.7" width="5.6" height="0.8" fill="#c02a14" opacity="0.8"/>
<rect x="852.7" y="335.6" width="4.6" height="0.8" fill="#a02818" opacity="0.8"/>
<rect x="844.8" y="341.0" width="5.7" height="0.8" fill="#c02a14" opacity="0.8"/>
<rect x="877.0" y="362.3" width="3.9" height="0.8" fill="#a02818" opacity="0.8"/>
<rect x="871.1" y="428.4" width="4.1" height="0.8" fill="#c02a14" opacity="0.8"/>
<rect x="852.3" y="332.0" width="4.9" height="0.8" fill="#c02a14" opacity="0.8"/>
<rect x="873.7" y="417.9" width="2.8" height="0.8" fill="#c02a14" opacity="0.8"/>
<rect x="832.9" y="244.8" width="5.3" height="0.8" fill="#902010" opacity="0.8"/>
<rect x="857.2" y="429.1" width="5.8" height="0.8" fill="#a02818" opacity="0.8"/>
<rect x="841.4" y="289.6" width="2.4" height="0.8" fill="#a02818" opacity="0.8"/>
<rect x="831.3" y="369.0" width="5.0" height="0.8" fill="#902010" opacity="0.8"/>
<rect x="834.3" y="255.2" width="4.2" height="0.8" fill="#d03a18" opacity="0.8"/>
<rect x="844.5" y="318.9" width="2.5" height="0.8" fill="#b08020" opacity="0.8"/>
<rect x="867.6" y="420.9" width="2.6" height="0.8" fill="#902010" opacity="0.8"/>
<rect x="871.0" y="417.9" width="5.1" height="0.8" fill="#b08020" opacity="0.8"/>
<rect x="816.8" y="263.1" width="3.0" height="0.8" fill="#d03a18" opacity="0.8"/>
<rect x="842.9" y="359.5" width="2.6" height="0.8" fill="#d03a18" opacity="0.8"/>
<rect x="839.5" y="270.1" width="2.9" height="0.8" fill="#d03a18" opacity="0.8"/>
<rect x="823.7" y="247.5" width="3.2" height="0.8" fill="#a02818" opacity="0.8"/>
<rect x="825.4" y="303.3" width="3.1" height="0.8" fill="#902010" opacity="0.8"/>
<rect x="818.9" y="312.0" width="4.8" height="0.8" fill="#b08020" opacity="0.8"/>
<rect x="851.9" y="336.0" width="3.6" height="0.8" fill="#d03a18" opacity="0.8"/>
<rect x="836.9" y="317.6" width="5.4" height="0.8" fill="#b08020" opacity="0.8"/>
<rect x="837.8" y="272.1" width="3.3" height="0.8" fill="#c02a14" opacity="0.8"/>
<rect x="824.5" y="312.0" width="2.6" height="0.8" fill="#902010" opacity="0.8"/>
<rect x="830.3" y="318.6" width="4.7" height="0.8" fill="#d03a18" opacity="0.8"/>
<rect x="869.6" y="346.3" width="5.9" height="0.8" fill="#c02a14" opacity="0.8"/>
<rect x="856.4" y="336.8" width="5.8" height="0.8" fill="#b08020" opacity="0.8"/>
<rect x="831.7" y="354.1" width="4.9" height="0.8" fill="#b08020" opacity="0.8"/>
<rect x="850.4" y="281.4" width="3.6" height="0.8" fill="#902010" opacity="0.8"/>
<rect x="849.6" y="249.2" width="5.7" height="0.8" fill="#b08020" opacity="0.8"/>
<rect x="812.8" y="260.9" width="4.8" height="0.8" fill="#a02818" opacity="0.8"/>
<rect x="854.3" y="418.8" width="5.8" height="0.8" fill="#b08020" opacity="0.8"/>
<rect x="849.8" y="288.0" width="2.7" height="0.8" fill="#c02a14" opacity="0.8"/>
<rect x="829.8" y="268.1" width="5.9" height="0.8" fill="#a02818" opacity="0.8"/>
<rect x="830.6" y="308.8" width="2.5" height="0.8" fill="#902010" opacity="0.8"/>
<rect x="869.9" y="339.7" width="4.7" height="0.8" fill="#902010" opacity="0.8"/>
<rect x="830.3" y="280.3" width="3.4" height="0.8" fill="#a02818" opacity="0.8"/>
<rect x="852.9" y="348.0" width="4.6" height="0.8" fill="#a02818" opacity="0.8"/>
<rect x="876.7" y="428.3" width="5.3" height="0.8" fill="#b08020" opacity="0.8"/>
<rect x="840.0" y="334.3" width="2.9" height="0.8" fill="#902010" opacity="0.8"/>
<rect x="870.0" y="338.8" width="4.1" height="0.8" fill="#b08020" opacity="0.8"/>
<rect x="879.2" y="416.5" width="4.2" height="0.8" fill="#a02818" opacity="0.8"/>
<rect x="830.8" y="250.7" width="5.4" height="0.8" fill="#c02a14" opacity="0.8"/>
<rect x="849.1" y="422.1" width="3.9" height="0.8" fill="#b08020" opacity="0.8"/>
<rect x="841.1" y="285.3" width="3.0" height="0.8" fill="#d03a18" opacity="0.8"/>
<rect x="866.0" y="427.5" width="3.3" height="0.8" fill="#b08020" opacity="0.8"/>
<rect x="836.0" y="325.2" width="3.7" height="0.8" fill="#c02a14" opacity="0.8"/>
<rect x="836.2" y="271.8" width="4.4" height="0.8" fill="#a02818" opacity="0.8"/>
<rect x="842.6" y="264.2" width="2.1" height="0.8" fill="#902010" opacity="0.8"/>
<rect x="824.9" y="283.1" width="3.9" height="0.8" fill="#b08020" opacity="0.8"/>
<rect x="872.0" y="418.6" width="3.7" height="0.8" fill="#b08020" opacity="0.8"/>
<rect x="861.6" y="254.6" width="3.6" height="0.8" fill="#b08020" opacity="0.8"/>
<rect x="839.4" y="309.9" width="3.2" height="0.8" fill="#b08020" opacity="0.8"/>
<rect x="859.1" y="242.0" width="5.5" height="0.8" fill="#b08020" opacity="0.8"/>
<rect x="846.7" y="420.1" width="2.8" height="0.8" fill="#902010" opacity="0.8"/>
<rect x="871.8" y="416.0" width="4.2" height="0.8" fill="#902010" opacity="0.8"/>
<rect x="850.1" y="426.5" width="5.5" height="0.8" fill="#c02a14" opacity="0.8"/>
<rect x="813.5" y="271.7" width="2.7" height="0.8" fill="#d03a18" opacity="0.8"/>
<rect x="837.3" y="245.0" width="2.1" height="0.8" fill="#d03a18" opacity="0.8"/>
<rect x="857.5" y="340.8" width="3.7" height="0.8" fill="#a02818" opacity="0.8"/>
<rect x="837.8" y="272.1" width="2.2" height="0.8" fill="#b08020" opacity="0.8"/>
<rect x="846.4" y="417.0" width="4.3" height="0.8" fill="#902010" opacity="0.8"/>
<rect x="819.8" y="320.4" width="6.0" height="0.8" fill="#d03a18" opacity="0.8"/>
<rect x="838.8" y="316.5" width="3.9" height="0.8" fill="#d03a18" opacity="0.8"/>
<rect x="837.6" y="240.5" width="5.9" height="0.8" fill="#c02a14" opacity="0.8"/>
<rect x="845.0" y="246.4" width="4.9" height="0.8" fill="#d03a18" opacity="0.8"/>
<rect x="837.8" y="305.6" width="5.1" height="0.8" fill="#d03a18" opacity="0.8"/>
<rect x="829.6" y="267.9" width="4.7" height="0.8" fill="#a02818" opacity="0.8"/>
<rect x="847.8" y="420.3" width="2.7" height="0.8" fill="#902010" opacity="0.8"/>
<rect x="847.1" y="421.2" width="3.8" height="0.8" fill="#d03a18" opacity="0.8"/>
<rect x="848.7" y="245.8" width="2.7" height="0.8" fill="#902010" opacity="0.8"/>
<rect x="828.4" y="323.6" width="5.1" height="0.8" fill="#b08020" opacity="0.8"/>
<rect x="842.4" y="332.5" width="4.8" height="0.8" fill="#b08020" opacity="0.8"/>
<rect x="834.8" y="255.4" width="5.6" height="0.8" fill="#902010" opacity="0.8"/>
<rect x="836.5" y="318.1" width="5.2" height="0.8" fill="#a02818" opacity="0.8"/>
<rect x="831.3" y="253.4" width="5.7" height="0.8" fill="#c02a14" opacity="0.8"/>
<rect x="872.7" y="364.1" width="4.3" height="0.8" fill="#a02818" opacity="0.8"/>
<rect x="869.0" y="430.5" width="2.3" height="0.8" fill="#b08020" opacity="0.8"/>
<rect x="839.5" y="306.0" width="5.7" height="0.8" fill="#d03a18" opacity="0.8"/>
<rect x="860.0" y="358.5" width="2.8" height="0.8" fill="#a02818" opacity="0.8"/>
<rect x="871.3" y="428.5" width="2.4" height="0.8" fill="#a02818" opacity="0.8"/>
<rect x="826.0" y="269.0" width="5.5" height="0.8" fill="#b08020" opacity="0.8"/>
<rect x="852.7" y="354.8" width="2.8" height="0.8" fill="#d03a18" opacity="0.8"/>
<rect x="846.3" y="353.7" width="4.1" height="0.8" fill="#d03a18" opacity="0.8"/>
<rect x="813.7" y="289.9" width="2.4" height="0.8" fill="#902010" opacity="0.8"/>
<rect x="821.4" y="269.9" width="4.1" height="0.8" fill="#c02a14" opacity="0.8"/>
<rect x="814.0" y="289.5" width="3.9" height="0.8" fill="#b08020" opacity="0.8"/>
<rect x="821.9" y="279.0" width="5.8" height="0.8" fill="#b08020" opacity="0.8"/>
<rect x="878.7" y="419.3" width="2.8" height="0.8" fill="#d03a18" opacity="0.8"/>
<rect x="820.3" y="301.5" width="5.5" height="0.8" fill="#902010" opacity="0.8"/>
<rect x="843.6" y="327.3" width="4.4" height="0.8" fill="#902010" opacity="0.8"/>
<rect x="836.3" y="287.8" width="3.6" height="0.8" fill="#902010" opacity="0.8"/>
<rect x="826.1" y="251.8" width="2.7" height="0.8" fill="#a02818" opacity="0.8"/>
<rect x="829.3" y="353.2" width="5.7" height="0.8" fill="#a02818" opacity="0.8"/>
<rect x="869.8" y="426.0" width="2.2" height="0.8" fill="#d03a18" opacity="0.8"/>
<rect x="868.3" y="369.5" width="3.2" height="0.8" fill="#b08020" opacity="0.8"/>
<ellipse cx="880" cy="245" rx="3" ry="4.5" fill="#2a4a32" opacity="0.9"/><ellipse cx="880" cy="245" rx="1.3" ry="2.5" fill="#7ab050" opacity="0.9"/>
<ellipse cx="882" cy="268" rx="3" ry="4.5" fill="#2a4a32" opacity="0.9"/><ellipse cx="882" cy="268" rx="1.3" ry="2.5" fill="#7ab050" opacity="0.9"/>
<ellipse cx="893" cy="320" rx="3" ry="4.5" fill="#2a4a32" opacity="0.9"/><ellipse cx="893" cy="320" rx="1.3" ry="2.5" fill="#7ab050" opacity="0.9"/>
<ellipse cx="908" cy="410" rx="3" ry="4.5" fill="#2a4a32" opacity="0.9"/><ellipse cx="908" cy="410" rx="1.3" ry="2.5" fill="#7ab050" opacity="0.9"/>
<circle cx="521" cy="241" r="3.5" fill="none" stroke="#3ad03a" stroke-width="1"/>
<circle cx="746" cy="192" r="3.5" fill="none" stroke="#3ad03a" stroke-width="1"/>
<circle cx="566" cy="478" r="3.5" fill="none" stroke="#3ad03a" stroke-width="1"/>
<circle cx="789" cy="447" r="3.5" fill="none" stroke="#3ad03a" stroke-width="1"/>
<circle cx="838" cy="441" r="3.5" fill="none" stroke="#3ad03a" stroke-width="1"/>
<rect x="526.5" y="224.5" width="41" height="15.5" fill="#2a2a30" fill-opacity="0.82" stroke="#1f9a2a" stroke-width="1"/><text x="530" y="235.5" font-size="8" textLength="34" lengthAdjust="spacingAndGlyphs" fill="#e6e6e6" font-family="Liberation Sans">地形点 5</text>
<rect x="750.5" y="173.5" width="40" height="15.5" fill="#2a2a30" fill-opacity="0.82" stroke="#1f9a2a" stroke-width="1"/><text x="754" y="184.5" font-size="8" textLength="33" lengthAdjust="spacingAndGlyphs" fill="#e6e6e6" font-family="Liberation Sans">地形点 1</text>
<rect x="785.5" y="167.5" width="41" height="15.5" fill="#2a2a30" fill-opacity="0.82" stroke="#1f9a2a" stroke-width="1"/><text x="789" y="178.5" font-size="8" textLength="34" lengthAdjust="spacingAndGlyphs" fill="#e6e6e6" font-family="Liberation Sans">地形点 2</text>
<rect x="570.5" y="460.5" width="41" height="15.5" fill="#2a2a30" fill-opacity="0.82" stroke="#1f9a2a" stroke-width="1"/><text x="574" y="471.5" font-size="8" textLength="34" lengthAdjust="spacingAndGlyphs" fill="#e6e6e6" font-family="Liberation Sans">地形点 6</text>
<rect x="793.5" y="430.5" width="40" height="15.5" fill="#2a2a30" fill-opacity="0.82" stroke="#1f9a2a" stroke-width="1"/><text x="797" y="441.5" font-size="8" textLength="33" lengthAdjust="spacingAndGlyphs" fill="#e6e6e6" font-family="Liberation Sans">地形点 4</text>
<rect x="832.5" y="425.5" width="40" height="15.5" fill="#2a2a30" fill-opacity="0.82" stroke="#1f9a2a" stroke-width="1"/><text x="836" y="436.5" font-size="8" textLength="33" lengthAdjust="spacingAndGlyphs" fill="#e6e6e6" font-family="Liberation Sans">地形点 3</text>
<line x1="337" y1="516.5" x2="513" y2="516.5" stroke="#e8e8e8" stroke-width="1"/>
<line x1="337.5" y1="510" x2="337.5" y2="522" stroke="#e8e8e8" stroke-width="1"/>
<line x1="512.5" y1="510" x2="512.5" y2="522" stroke="#e8e8e8" stroke-width="1"/>
<text x="395" y="525" font-size="8" fill="#e0e0e0" font-family="Liberation Sans">200.0000 m</text>
<polygon points="1227,467 1251.5,491.5 1227,491.5" fill="#a0a0a0"/>
<rect x="1224.8" y="474" width="3.2" height="14" fill="#30d030"/><polygon points="1222,475 1231.2,475 1226.6,466.8" fill="#40e040"/>
<rect x="1230" y="489.8" width="14" height="3" fill="#f03838"/><polygon points="1243.3,486.9 1243.3,496.1 1251.7,491.5" fill="#f02020"/>
<circle cx="1226.4" cy="491.3" r="4.8" fill="#1830e0"/>
<text x="1223" y="495" font-size="8" font-weight="bold" fill="#fff" font-family="Liberation Serif">Z</text>
<text x="1221.5" y="463" font-size="11.5" font-weight="bold" fill="#f0f0f0" font-family="Liberation Serif">Y</text>
<text x="1254.5" y="496.2" font-size="11.5" font-weight="bold" fill="#f0f0f0" font-family="Liberation Serif">X</text>
</svg>
<div class="a" style="left:309px;top:534px;width:960px;height:4px;background:#9a9a9a"></div>

<!-- ===== bottom panel ===== -->
<div class="t" style="left:311px;top:542px">存储的剪裁盒</div>
<div class="a" style="left:1247px;top:543px;width:4px;height:4px;border:1px solid #444"></div><div class="a" style="left:1246px;top:547px;width:6px;height:1px;background:#444"></div><div class="a" style="left:1248.5px;top:547px;width:1px;height:3px;background:#444"></div>
<div class="t" style="left:1259px;top:543px;font-size:10px;color:#444">×</div>
<svg class="a" style="left:310px;top:555px" width="92" height="18" viewBox="310 555 92 18">
<path d="M319,564 h6" stroke="#777" stroke-width="1.2"/>
<line x1="332.5" y1="557" x2="332.5" y2="571" stroke="#a8a8a8" stroke-width="0.8"/>
<path d="M338.5,568.5 v-4 q0,-4.5 4,-4.5 q4,0 4,4.5 v4 z" fill="#e8e8e8" stroke="#c8c8c8" stroke-width="0.7"/><circle cx="342.5" cy="563" r="1.5" fill="none" stroke="#c0c0c0" stroke-width="0.6"/>
<line x1="352.5" y1="557" x2="352.5" y2="571" stroke="#a8a8a8" stroke-width="0.8"/>
<path d="M356.3,568.5 v-6.5 h3 l1,1 h3 v1.5" fill="#d8a820" stroke="#a07810" stroke-width="0.5"/><path d="M356.3,568.5 l2.3,-4.5 h8.4 l-2.3,4.5 z" fill="#f0c830" stroke="#a07810" stroke-width="0.5"/>
<path d="M357.5,560 q3,-2 5.5,0.5" fill="none" stroke="#2a8ad8" stroke-width="1.1"/><polygon points="363.5,559 364.5,562.5 361.2,561.8" fill="#2a8ad8"/>
<path d="M371,568.5 v-5.5 h3 l1,1 h3 v1" fill="#b8b8b8"/><path d="M371,568.5 l2,-4 h8 l-2,4 z" fill="#d0d0d0"/><path d="M376,563 l4,-3.5 M378.5,559.5 h2 v2" fill="none" stroke="#bbb" stroke-width="0.8"/>
<path d="M386.5,562 l4.5,-2.5 l4.5,2.5 v5 l-4.5,2.5 l-4.5,-2.5 z" fill="#f2f2f2" stroke="#c0c0c0" stroke-width="0.6"/><circle cx="391" cy="560" r="1" fill="#d04040"/><circle cx="387.5" cy="566.5" r="1" fill="#3050c0"/><circle cx="394.5" cy="566.5" r="1" fill="#30a050"/>
</svg>
<div class="a" style="left:309px;top:576px;width:672px;height:92px;background:#fff;border:1px solid #7a7a7a"></div>
<div class="t" style="left:313px;top:580px">名</div>
<div class="a" style="left:388px;top:577px;width:1px;height:14px;background:#e8e8e8"></div>
<div class="t" style="left:393px;top:580px">描述</div>
<div class="a" style="left:547px;top:577px;width:1px;height:14px;background:#e8e8e8"></div>
<div class="t" style="left:981px;top:577px">说明编辑器</div>
<div class="a" style="left:981px;top:589px;width:287px;height:1px;background:#cfcfcf"></div>
<!-- IME bar -->
<div class="a" style="left:1222px;top:622px;width:48px;height:17px;background:linear-gradient(#e8f2fc,#cde2f7)"></div>
<div class="t" style="left:1227px;top:626px;font-size:8.5px;color:#3a6a8a">中</div>
<div class="a" style="left:1240px;top:624px;width:1px;height:13px;background:#c4d8ec"></div>
<div class="a" style="left:1256px;top:624px;width:1px;height:13px;background:#c4d8ec"></div>
<svg class="a" style="left:1240px;top:620px" width="30" height="20" viewBox="1240 620 30 20">
<path d="M1243.5,627.5 l2,-1.5 h1.5 q0.8,1 1.6,0 h1.5 l2,1.5 l-1,1.8 l-1,-0.5 v3.5 h-5 v-3.5 l-1,0.5 z" fill="#2a5a6e"/>
<rect x="1262" y="621" width="8" height="5" fill="#e8f4fc" stroke="#b8d0e8" stroke-width="0.5"/>
<polygon points="1265,628 1266.3,631 1269.5,631.2 1267,633.2 1268,636.3 1265,634.5 1262,636.3 1263,633.2 1260.5,631.2 1263.7,631" fill="#f8c400" stroke="#e89000" stroke-width="0.4"/>
</svg>
<div class="a" style="left:1268px;top:610px;width:1px;height:58px;background:#d8d8d8"></div>
<!-- status bar -->
<div class="a" style="left:1144px;top:671px;width:92px;height:10px;background:#fff"></div>
<div class="t" style="left:1185px;top:671px;font-size:9px">米</div>
<div class="a" style="left:1240px;top:671px;width:18px;height:10px;background:#fff"></div>
<div class="a" style="left:1246px;top:672px;width:2px;height:8px;background:#222"></div><div class="a" style="left:1248px;top:676px;width:6px;height:6px;border:1px solid #222;border-radius:1px 1px 3px 3px;background:#fff"></div>
<div class="a" style="left:0;top:685px;width:32px;height:1px;background:#38444c"></div>
<div class="a" style="left:222px;top:685px;width:1048px;height:1px;background:#38444c"></div><svg class="a" style="left:1260px;top:676px" width="8" height="8"><circle cx="6" cy="2" r="0.5" fill="#999"/><circle cx="4" cy="4" r="0.5" fill="#999"/><circle cx="6" cy="4" r="0.5" fill="#999"/><circle cx="2" cy="6" r="0.5" fill="#999"/><circle cx="4" cy="6" r="0.5" fill="#999"/><circle cx="6" cy="6" r="0.5" fill="#999"/></svg>
</body></html>
